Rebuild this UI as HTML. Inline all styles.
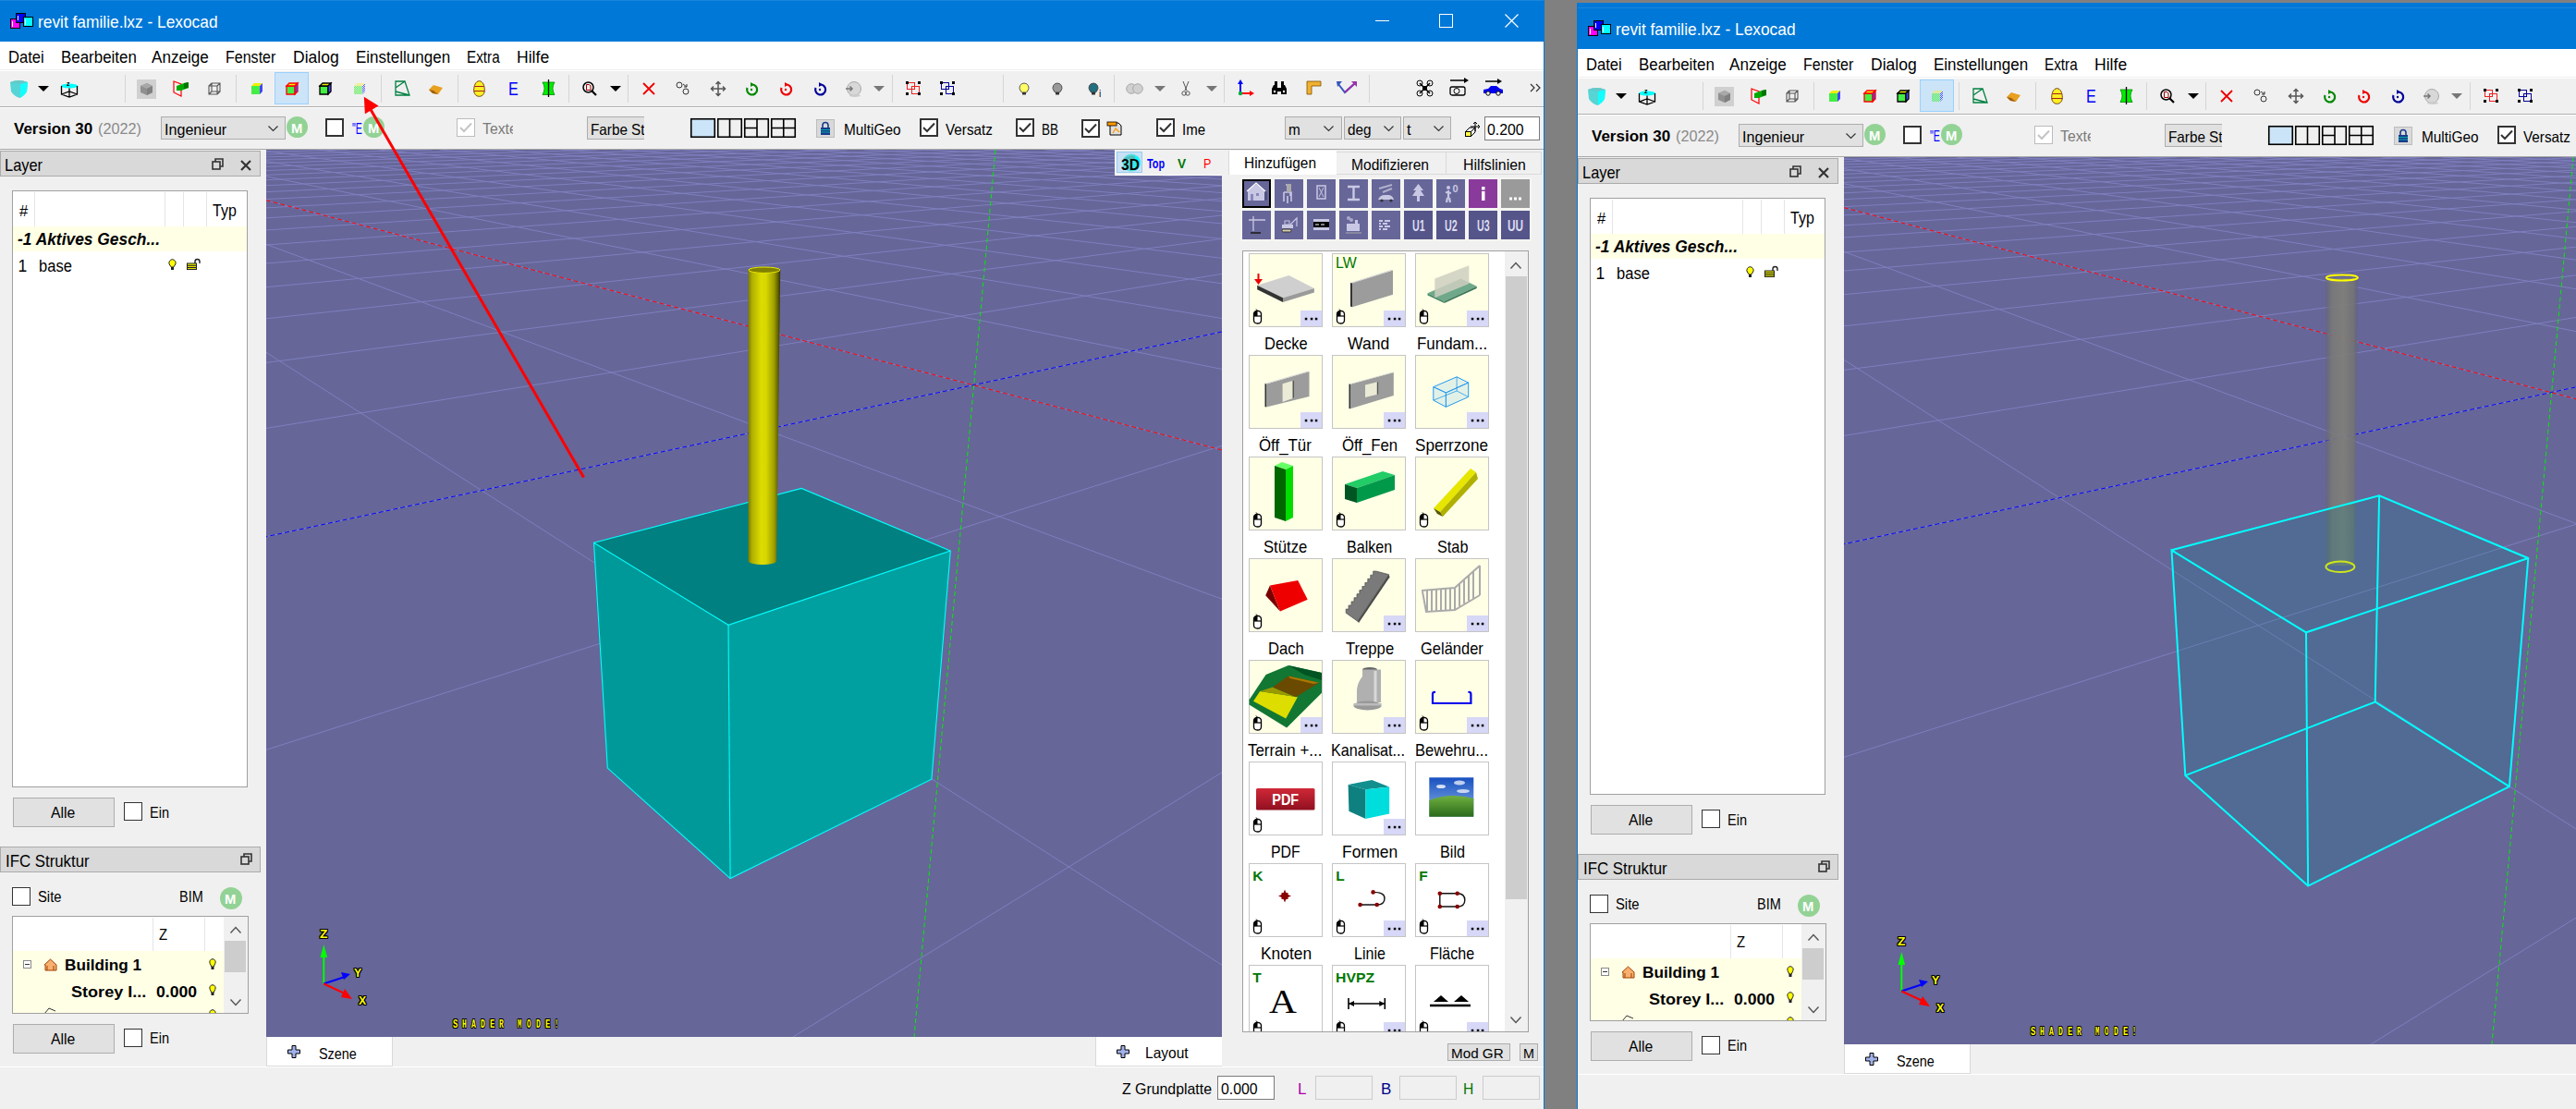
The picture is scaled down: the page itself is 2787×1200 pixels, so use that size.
<!DOCTYPE html><html><head><meta charset="utf-8"><style>
html,body{margin:0;padding:0}
body{width:2787px;height:1200px;position:relative;overflow:hidden;background:#808080;font-family:"Liberation Sans",sans-serif}
.t{position:absolute;white-space:pre;transform-origin:0 0}
.r{position:absolute}
.s{position:absolute;overflow:visible}
.win{position:absolute;overflow:hidden}
</style></head><body><div class="win" style="left:0;top:0;width:1671px;height:1200px"><div class="r" style="left:-1px;top:-5px;width:1672px;height:1210px;background:#0078d7;"></div><div class="r" style="left:0px;top:0px;width:1670px;height:1px;background:#1a86dc;"></div><div class="r" style="left:0px;top:45px;width:1670px;height:1160px;background:#f0f0f0;"></div><div class="r" style="left:0px;top:45px;width:1670px;height:30px;background:#ffffff;"></div><div class="r" style="left:0px;top:76px;width:1670px;height:1px;background:#ffffff;"></div><div class="r" style="left:0px;top:115px;width:1670px;height:1px;background:#b0b0b0;"></div><div class="r" style="left:0px;top:116px;width:1670px;height:1px;background:#ffffff;"></div><div class="r" style="left:0px;top:161px;width:1670px;height:1px;background:#a8a8a8;"></div><svg class="s" style="left:10.5px;top:13.5px;" width="26" height="18" viewBox="0 0 26 18"><rect x="0.5" y="6.5" width="10" height="10" fill="#ff00ff" stroke="#000" stroke-width="1"/><rect x="6.5" y="0.5" width="10" height="10" fill="#0000ff" stroke="#000" stroke-width="1"/><rect x="14.5" y="4.5" width="10" height="10" fill="#00ffff" stroke="#000" stroke-width="1"/><rect x="2" y="9" width="1" height="6" fill="#fff"/><rect x="8" y="3" width="1" height="5" fill="#fff"/><rect x="16" y="7" width="1" height="6" fill="#fff"/></svg><div class="t" style="left:40.70px;top:12.61px;font-size:19px;line-height:21.22px;color:#ffffff;font-weight:400;transform:scaleX(0.9122);">revit familie.lxz - Lexocad</div><div class="r" style="left:1488px;top:22px;width:15px;height:1px;background:#ffffff;"></div><div class="r" style="left:1557px;top:15px;width:15px;height:15px;border:1px solid #ffffff;box-sizing:border-box;"></div><svg class="s" style="left:1628px;top:15px;" width="15" height="15" viewBox="0 0 15 15"><path d="M0.5,0.5 L14.5,14.5 M14.5,0.5 L0.5,14.5" stroke="#fff" stroke-width="1.2"/></svg><div class="t" style="left:9.30px;top:51.88px;font-size:18.7px;line-height:20.89px;color:#000;font-weight:400;transform:scaleX(0.8864);">Datei</div><div class="t" style="left:65.80px;top:51.88px;font-size:18.7px;line-height:20.89px;color:#000;font-weight:400;transform:scaleX(0.9056);">Bearbeiten</div><div class="t" style="left:164.20px;top:51.88px;font-size:18.7px;line-height:20.89px;color:#000;font-weight:400;transform:scaleX(0.9162);">Anzeige</div><div class="t" style="left:244.00px;top:51.88px;font-size:18.7px;line-height:20.89px;color:#000;font-weight:400;transform:scaleX(0.8578);">Fenster</div><div class="t" style="left:317.40px;top:51.88px;font-size:18.7px;line-height:20.89px;color:#000;font-weight:400;transform:scaleX(0.9377);">Dialog</div><div class="t" style="left:385.10px;top:51.88px;font-size:18.7px;line-height:20.89px;color:#000;font-weight:400;transform:scaleX(0.9098);">Einstellungen</div><div class="t" style="left:505.00px;top:51.88px;font-size:18.7px;line-height:20.89px;color:#000;font-weight:400;transform:scaleX(0.8182);">Extra</div><div class="t" style="left:559.00px;top:51.88px;font-size:18.7px;line-height:20.89px;color:#000;font-weight:400;transform:scaleX(0.9405);">Hilfe</div><div class="r" style="left:297px;top:78px;width:37px;height:35px;background:#cce4f7;border:1px solid #99d1ff;box-sizing:border-box;"></div><svg class="s" style="left:9.5px;top:85.0px;" width="21" height="21" viewBox="0 0 21 21"><path d="M1,4 Q10,0 20,4 L19,14 Q16,19 11,21 Q5,19 2,14 Z" fill="#55d5d5"/><path d="M12,4 L20,4 L19,14 Q16,19 12,21 Z" fill="#11ffff"/><path d="M1,4 Q10,0 20,4 L12,6 Z" fill="#66c8c8"/></svg><svg class="s" style="left:41.0px;top:92.5px;" width="12" height="7" viewBox="0 0 12 7"><polygon points="0,0 12,0 6,6" fill="#000"/></svg><svg class="s" style="left:64.5px;top:86.5px;" width="20" height="19" viewBox="0 0 20 19"><ellipse cx="10" cy="6" rx="9" ry="2.5" fill="#00ffff"/><path d="M1.5,6 L1.5,15 L10,18 L18.5,15 L18.5,6 M10,8.5 L10,18 M1.5,15 L10,12 L18.5,15" stroke="#000" stroke-width="1.3" fill="none"/><text x="7" y="6" font-size="7" font-weight="bold" font-family="Liberation Sans">z</text></svg><div class="r" style="left:135px;top:81px;width:1px;height:30px;background:#d5d5d5;"></div><div class="r" style="left:148px;top:86px;width:21px;height:21px;background:#d0d0d0;"></div><svg class="s" style="left:151.0px;top:89.0px;" width="15" height="15" viewBox="0 0 15 15"><polygon points="1,4 8,1 14,4 14,11 8,14 1,11" fill="#909090"/><polygon points="1,4 8,1 14,4 8,7" fill="#a8a8a8"/><polygon points="8,7 14,4 14,11 8,14" fill="#808080"/></svg><svg class="s" style="left:186.5px;top:86.5px;" width="18" height="18" viewBox="0 0 18 18"><polygon points="1,1 9,4 9,17 1,13" fill="none" stroke="#ff0000" stroke-width="1.2"/><polygon points="4,6 12,3 17,2 17,8 9,11 4,11" fill="#00aa00"/><polygon points="12,3 17,2 17,8 12,9" fill="#007700"/></svg><svg class="s" style="left:225.0px;top:88.5px;" width="14" height="14" viewBox="0 0 14 14"><path d="M1,4 L10,4 L10,13 L1,13 Z M4,1 L13,1 L13,10 L4,10 Z M1,4 L4,1 M10,4 L13,1 M10,13 L13,10 M1,13 L4,10" stroke="#555" stroke-width="1.1" fill="none"/></svg><div class="r" style="left:255px;top:81px;width:1px;height:30px;background:#d5d5d5;"></div><svg class="s" style="left:271.0px;top:88.5px;" width="14" height="14" viewBox="0 0 14 14"><polygon points="1,4 10,4 10,13 1,13" fill="#44ee44" /><polygon points="1,4 4,1 13,1 10,4" fill="#eeee00" /><polygon points="10,4 13,1 13,10 10,13" fill="#4444ff" /></svg><svg class="s" style="left:309.0px;top:88.5px;" width="14" height="14" viewBox="0 0 14 14"><polygon points="1,4 10,4 10,13 1,13" fill="#44ee44" stroke="#ff0000" stroke-width="1.3"/><polygon points="1,4 4,1 13,1 10,4" fill="#eeee00" stroke="#ff0000" stroke-width="1.3"/><polygon points="10,4 13,1 13,10 10,13" fill="#4444ff" stroke="#ff0000" stroke-width="1.3"/></svg><svg class="s" style="left:345.0px;top:88.5px;" width="14" height="14" viewBox="0 0 14 14"><polygon points="1,4 10,4 10,13 1,13" fill="#44ee44" stroke="#000000" stroke-width="1.3"/><polygon points="1,4 4,1 13,1 10,4" fill="#eeee00" stroke="#000000" stroke-width="1.3"/><polygon points="10,4 13,1 13,10 10,13" fill="#4444ff" stroke="#000000" stroke-width="1.3"/></svg><svg class="s" style="left:382.0px;top:88.5px;" width="14" height="14" viewBox="0 0 14 14"><defs><pattern id="hp" width="2" height="2" patternUnits="userSpaceOnUse"><rect width="1" height="1" fill="#44ee44"/><rect x="1" y="1" width="1" height="1" fill="#44ee44"/></pattern><pattern id="hb" width="2" height="2" patternUnits="userSpaceOnUse"><rect width="1" height="1" fill="#5555ff"/><rect x="1" y="1" width="1" height="1" fill="#5555ff"/></pattern><pattern id="hy" width="2" height="2" patternUnits="userSpaceOnUse"><rect width="1" height="1" fill="#eeee44"/><rect x="1" y="1" width="1" height="1" fill="#eeee44"/></pattern></defs><polygon points="1,4 10,4 10,13 1,13" fill="url(#hp)"/><polygon points="1,4 4,1 13,1 10,4" fill="url(#hy)"/><polygon points="10,4 13,1 13,10 10,13" fill="url(#hb)"/></svg><div class="r" style="left:412px;top:81px;width:1px;height:30px;background:#d5d5d5;"></div><svg class="s" style="left:426.5px;top:87.0px;" width="17" height="17" viewBox="0 0 17 17"><path d="M1,1 L1,16 L16,16 L11,1 Z M1,8 L11,1 M1,12 L16,16" stroke="#008040" stroke-width="1.3" fill="none"/></svg><svg class="s" style="left:463.5px;top:90.5px;" width="16" height="12" viewBox="0 0 16 12"><polygon points="0,6 5,1 15,4 10,11 4,10" fill="#e8a020"/><polygon points="0,6 4,10 10,11 5,7" fill="#a06010"/></svg><div class="r" style="left:495px;top:81px;width:1px;height:30px;background:#d5d5d5;"></div><svg class="s" style="left:511.5px;top:86.5px;" width="13" height="18" viewBox="0 0 13 18"><path d="M6.5,0.7 C10.5,0.7 12.3,6 12.3,10.5 C12.3,14.5 10,17.3 6.5,17.3 C3,17.3 0.7,14.5 0.7,10.5 C0.7,6 2.5,0.7 6.5,0.7 Z" fill="#ffee22" stroke="#704010" stroke-width="1"/><path d="M1.5,6.5 H11.5 M0.8,11.5 H12.2" stroke="#a02020" stroke-width="1.2"/></svg><div class="t" style="left:550.00px;top:85.20px;font-size:20px;line-height:22.34px;color:#0000ff;font-weight:400;transform:scaleX(0.8077);">E</div><svg class="s" style="left:585.5px;top:86.0px;" width="15" height="19" viewBox="0 0 15 19"><path d="M1,3 H14 Q10,9.5 14,16.5 H1 Q5,9.5 1,3 Z" fill="#00ee00" stroke="#008800" stroke-width="0.8"/><path d="M7.5,0 V19" stroke="#000" stroke-width="1.3"/></svg><div class="r" style="left:615px;top:81px;width:1px;height:30px;background:#d5d5d5;"></div><svg class="s" style="left:630.0px;top:87.5px;" width="16" height="16" viewBox="0 0 16 16"><circle cx="6.5" cy="6.5" r="5.5" fill="none" stroke="#000" stroke-width="1.5"/><path d="M10.5,10.5 L15,15" stroke="#000" stroke-width="2.2"/><path d="M4.5,3.5 H7.5 L9,5 V9.5 H4.5 Z" fill="none" stroke="#a00000" stroke-width="1"/></svg><svg class="s" style="left:659.5px;top:92.5px;" width="12" height="7" viewBox="0 0 12 7"><polygon points="0,0 12,0 6,6" fill="#000"/></svg><div class="r" style="left:679px;top:81px;width:1px;height:30px;background:#d5d5d5;"></div><svg class="s" style="left:694.5px;top:88.5px;" width="14" height="14" viewBox="0 0 14 14"><path d="M1,1 L13,13 M13,1 L1,13" stroke="#ee0000" stroke-width="1.8"/></svg><svg class="s" style="left:730.5px;top:88.0px;" width="16" height="15" viewBox="0 0 16 15"><circle cx="4" cy="4" r="3" fill="none" stroke="#333" stroke-width="1"/><circle cx="11" cy="11" r="3" fill="none" stroke="#333" stroke-width="1"/><path d="M8,3 L12,6 M12,3 V6 H9" stroke="#333" stroke-width="1" fill="none"/></svg><svg class="s" style="left:768.5px;top:87.5px;" width="16" height="16" viewBox="0 0 16 16"><path d="M8,0.5 V15.5 M0.5,8 H15.5 M5.5,3 L8,0.5 L10.5,3 M5.5,13 L8,15.5 L10.5,13 M3,5.5 L0.5,8 L3,10.5 M13,5.5 L15.5,8 L13,10.5" stroke="#555" stroke-width="1.5" fill="none"/></svg><svg class="s" style="left:806.0px;top:88.5px;" width="14" height="14" viewBox="0 0 14 14"><path d="M7.5,2.5 A5.5,5.5 0 1 1 2.5,6" stroke="#008800" stroke-width="2.2" fill="none"/><path d="M6,0 L10,2.5 L6,5 Z" fill="#008800"/><circle cx="7" cy="8" r="1.2" fill="#008800"/></svg><svg class="s" style="left:843.0px;top:88.5px;" width="14" height="14" viewBox="0 0 14 14"><path d="M7.5,2.5 A5.5,5.5 0 1 1 2.5,6" stroke="#ee0000" stroke-width="2.2" fill="none"/><path d="M6,0 L10,2.5 L6,5 Z" fill="#ee0000"/><circle cx="7" cy="8" r="1.2" fill="#ee0000"/></svg><svg class="s" style="left:880.0px;top:88.5px;" width="14" height="14" viewBox="0 0 14 14"><path d="M7.5,2.5 A5.5,5.5 0 1 1 2.5,6" stroke="#000099" stroke-width="2.2" fill="none"/><path d="M6,0 L10,2.5 L6,5 Z" fill="#000099"/><circle cx="7" cy="8" r="1.2" fill="#000099"/></svg><svg class="s" style="left:914.0px;top:87.5px;" width="18" height="17" viewBox="0 0 18 17"><circle cx="10" cy="8" r="7.5" fill="#d8d8d8" stroke="#aaa" stroke-width="1"/><ellipse cx="11" cy="15.5" rx="6" ry="1.5" fill="#ccc"/><path d="M1,8 H8 M5.5,5.5 L8,8 L5.5,10.5" stroke="#777" stroke-width="1.5" fill="none"/></svg><svg class="s" style="left:945.0px;top:92.5px;" width="12" height="7" viewBox="0 0 12 7"><polygon points="0,0 12,0 6,6" fill="#777"/></svg><div class="r" style="left:965px;top:81px;width:1px;height:30px;background:#d5d5d5;"></div><svg class="s" style="left:979.5px;top:87.8px;" width="17" height="15" viewBox="0 0 17 15"><rect x="1.5" y="1.5" width="8" height="7" fill="none" stroke="#ee2222" stroke-width="1"/><rect x="6.5" y="5.5" width="8" height="8" fill="none" stroke="#ee2222" stroke-width="1"/><rect x="0" y="0" width="3" height="3"/><rect x="13" y="0" width="3" height="3"/><rect x="0" y="12" width="3" height="3"/><rect x="13" y="12" width="3" height="3"/></svg><svg class="s" style="left:1016.5px;top:87.8px;" width="17" height="15" viewBox="0 0 17 15"><rect x="1.5" y="1.5" width="8" height="7" fill="none" stroke="#000099" stroke-width="1"/><rect x="6.5" y="5.5" width="8" height="8" fill="none" stroke="#000099" stroke-width="1"/><rect x="0" y="0" width="3" height="3"/><rect x="13" y="0" width="3" height="3"/><rect x="0" y="12" width="3" height="3"/><rect x="13" y="12" width="3" height="3"/></svg><div class="r" style="left:1085px;top:81px;width:1px;height:30px;background:#d5d5d5;"></div><svg class="s" style="left:1102.0px;top:88.5px;" width="12" height="14" viewBox="0 0 12 14"><path d="M6,1 A5,5 0 0 1 10,9 L8.5,11 H3.5 L2,9 A5,5 0 0 1 6,1 Z" fill="#ffff66" stroke="#333" stroke-width="0.8"/><rect x="4" y="11" width="4" height="2.5" fill="#333"/></svg><svg class="s" style="left:1138.0px;top:88.5px;" width="12" height="14" viewBox="0 0 12 14"><path d="M6,1 A5,5 0 0 1 10,9 L8.5,11 H3.5 L2,9 A5,5 0 0 1 6,1 Z" fill="#999999" stroke="#333" stroke-width="0.8"/><rect x="4" y="11" width="4" height="2.5" fill="#333"/></svg><svg class="s" style="left:1177.0px;top:88.5px;" width="12" height="14" viewBox="0 0 12 14"><path d="M6,1 A5,5 0 0 1 10,9 L8.5,11 H3.5 L2,9 A5,5 0 0 1 6,1 Z" fill="#226f7f" stroke="#333" stroke-width="0.8"/><rect x="4" y="11" width="4" height="2.5" fill="#333"/></svg><div class="t" style="left:1189.00px;top:95.75px;font-size:10px;line-height:11.17px;color:#000;font-weight:400;">i</div><div class="r" style="left:1205px;top:81px;width:1px;height:30px;background:#d5d5d5;"></div><svg class="s" style="left:1218.0px;top:89.5px;" width="20" height="12" viewBox="0 0 20 12"><circle cx="6" cy="6" r="5.3" fill="#d0d0d0" stroke="#aaa"/><circle cx="13" cy="6" r="5.3" fill="#d0d0d0" stroke="#aaa"/></svg><svg class="s" style="left:1249.0px;top:92.5px;" width="12" height="7" viewBox="0 0 12 7"><polygon points="0,0 12,0 6,6" fill="#777"/></svg><svg class="s" style="left:1277.5px;top:87.5px;" width="10" height="16" viewBox="0 0 10 16"><path d="M2,0 L6,10 M8,0 L4,10" stroke="#555" stroke-width="1"/><circle cx="3" cy="13" r="2.2" fill="none" stroke="#555"/><circle cx="7" cy="13" r="2.2" fill="none" stroke="#555"/></svg><svg class="s" style="left:1304.5px;top:92.5px;" width="12" height="7" viewBox="0 0 12 7"><polygon points="0,0 12,0 6,6" fill="#777"/></svg><div class="r" style="left:1324px;top:81px;width:1px;height:30px;background:#d5d5d5;"></div><svg class="s" style="left:1338.5px;top:86.0px;" width="18" height="18" viewBox="0 0 18 18"><path d="M3,15 V3" stroke="#0000ff" stroke-width="2"/><polygon points="0,5 3,0 6,5" fill="#0000ff"/><path d="M3,15 H14" stroke="#ff0000" stroke-width="2"/><polygon points="13,12 18,15 13,18" fill="#ff0000"/><circle cx="3" cy="15" r="2.2" fill="#00aa44"/></svg><svg class="s" style="left:1376.0px;top:87.5px;" width="16" height="15" viewBox="0 0 16 15"><path d="M2,4 H6 V14 H0 V8 Z M10,4 H14 L16,8 V14 H10 Z M6,7 H10 V11 H6 Z M3,0 H6 V4 H3 Z M10,0 H13 V4 H10 Z" fill="#000"/><circle cx="3" cy="11" r="1.2" fill="#fff"/><circle cx="13" cy="11" r="1.2" fill="#fff"/></svg><svg class="s" style="left:1412.5px;top:87.0px;" width="17" height="16" viewBox="0 0 17 16"><path d="M1,1 H16 V6 H6 V15 H1 Z" fill="#f0b030" stroke="#805000" stroke-width="0.8"/></svg><svg class="s" style="left:1446.0px;top:88.0px;" width="23" height="14" viewBox="0 0 23 14"><path d="M2,3 L9,12 L20,2" stroke="#3355bb" stroke-width="2" fill="none"/><path d="M9,12 L20,2" stroke="#9933aa" stroke-width="2"/><polygon points="0,0 6,0 1,6" fill="#3355bb"/><polygon points="16,0 22,0 22,6" fill="#9933aa"/></svg><div class="r" style="left:1481px;top:81px;width:1px;height:30px;background:#d5d5d5;"></div><svg class="s" style="left:1531.5px;top:85.5px;" width="19" height="19" viewBox="0 0 19 19"><path d="M4,4 L15,15 M15,4 L4,15" stroke="#000" stroke-width="1.5"/><circle cx="4" cy="4" r="3" fill="none" stroke="#000"/><circle cx="15" cy="4" r="3" fill="none" stroke="#000"/><circle cx="4" cy="15" r="3" fill="none" stroke="#000"/><circle cx="15" cy="15" r="3" fill="none" stroke="#000"/><rect x="7" y="7" width="5" height="5"/></svg><svg class="s" style="left:1567.5px;top:84.0px;" width="22" height="20" viewBox="0 0 22 20"><path d="M1,3 H17" stroke="#000" stroke-width="1.5"/><polygon points="16,0 21,3 16,6" fill="#000"/><rect x="1" y="10" width="16" height="9" rx="2" fill="none" stroke="#000" stroke-width="1.3"/><circle cx="8" cy="14.5" r="3" fill="none" stroke="#000"/></svg><svg class="s" style="left:1603.5px;top:84.5px;" width="23" height="19" viewBox="0 0 23 19"><path d="M3,3 H17" stroke="#000" stroke-width="1.5"/><polygon points="16,0 21,3 16,6" fill="#000"/><path d="M1,16 V12 L6,11 L9,8 H15 L19,11 L22,12 V16 Z" fill="#0000ee"/><circle cx="6" cy="16" r="2.2" fill="#fff" stroke="#000"/><circle cx="17" cy="16" r="2.2" fill="#fff" stroke="#000"/></svg><svg class="s" style="left:1655.0px;top:90.0px;" width="13" height="10" viewBox="0 0 13 10"><path d="M1,1 L5,5 L1,9 M7,1 L11,5 L7,9" stroke="#333" stroke-width="1.2" fill="none"/></svg><div class="t" style="left:14.90px;top:129.93px;font-size:17.2px;line-height:19.21px;color:#000;font-weight:700;transform:scaleX(0.9895);">Version 30</div><div class="t" style="left:106.20px;top:129.93px;font-size:17.2px;line-height:19.21px;color:#8a8a8a;font-weight:400;transform:scaleX(0.9440);">(2022)</div><div class="r" style="left:174px;top:126px;width:135px;height:25px;background:#e1e1e1;border:1px solid #adadad;box-sizing:border-box;"></div><div class="t" style="left:177.90px;top:130.57px;font-size:16.5px;line-height:18.43px;color:#000;font-weight:400;transform:scaleX(0.9768);">Ingenieur</div><svg class="s" style="left:290px;top:136px;" width="11" height="6" viewBox="0 0 11 6"><path d="M0.5,0.5 L5.5,5.5 L10.5,0.5" stroke="#333" stroke-width="1.2" fill="none"/></svg><svg class="s" style="left:309.7px;top:126.3px;" width="23" height="23" viewBox="0 0 23 23"><circle cx="11.5" cy="11.5" r="11.5" fill="#93d295"/></svg><div class="t" style="left:315.00px;top:130.37px;font-size:15.5px;line-height:17.31px;color:#ffffff;font-weight:700;transform:scaleX(0.9538);">M</div><div class="r" style="left:352px;top:128px;width:20px;height:20px;background:#ffffff;border:2px solid #333333;box-sizing:border-box;"></div><div class="t" style="left:380.70px;top:130.37px;font-size:16.5px;line-height:18.43px;color:#0000ff;font-weight:400;transform:scaleX(0.6471);">"E</div><svg class="s" style="left:392.7px;top:126.3px;" width="23" height="23" viewBox="0 0 23 23"><circle cx="11.5" cy="11.5" r="11.5" fill="#93d295"/></svg><div class="t" style="left:398.00px;top:130.37px;font-size:15.5px;line-height:17.31px;color:#ffffff;font-weight:700;transform:scaleX(0.9538);">M</div><div class="r" style="left:494px;top:128px;width:20px;height:20px;background:#ffffff;border:1px solid #bcbcbc;box-sizing:border-box;"></div><svg class="s" style="left:494px;top:128px;" width="20" height="20" viewBox="0 0 20 20"><path d="M4,10 L8,14 L16,5.5" stroke="#c4c4c4" stroke-width="2" fill="none"/></svg><div style="position:absolute;left:520px;top:120px;width:35px;height:35px;overflow:hidden"><div class="t" style="left:2.40px;top:10.12px;font-size:17px;line-height:18.99px;color:#7a7a7a;font-weight:400;transform:scaleX(0.9268);">Texte</div></div><div style="position:absolute;left:635px;top:126px;width:62px;height:25px;overflow:hidden"><div class="r" style="left:0px;top:0px;width:70px;height:25px;background:#e1e1e1;border:1px solid #adadad;box-sizing:border-box;"></div><div class="t" style="left:4.30px;top:4.57px;font-size:16.5px;line-height:18.43px;color:#000;font-weight:400;transform:scaleX(0.9250);">Farbe Stell</div></div><svg class="s" style="left:746px;top:127px;" width="117" height="23" viewBox="0 0 117 23"><rect x="1.75" y="1.75" width="25.5" height="19.5" fill="#cce4f7" stroke="#000" stroke-width="1.6"/><rect x="30.75" y="1.75" width="25.5" height="19.5" fill="none" stroke="#000" stroke-width="1.6"/><path d="M43.5,1.75 V21.25" stroke="#000" stroke-width="1.6"/><rect x="59.75" y="1.75" width="25.5" height="19.5" fill="none" stroke="#000" stroke-width="1.6"/><path d="M73,1.75 V21.25 M59.75,11.5 H73" stroke="#000" stroke-width="1.6"/><rect x="88.75" y="1.75" width="25.5" height="19.5" fill="none" stroke="#000" stroke-width="1.6"/><path d="M101.75,1.75 V21.25 M88.75,11.5 H114.25" stroke="#000" stroke-width="1.6"/></svg><div class="r" style="left:883px;top:129px;width:20px;height:20px;background:#d9d9d9;border:1px solid #bcbcbc;box-sizing:border-box;"></div><svg class="s" style="left:887px;top:131px;" width="12" height="16" viewBox="0 0 12 16"><path d="M3,7 V4.5 A3,3 0 0 1 9,4.5 V7" stroke="#1a3a8a" stroke-width="1.6" fill="none"/><rect x="1" y="7" width="10" height="8" fill="#1a3a8a"/><path d="M1,9.5 H11 M1,12 H11" stroke="#00aaaa" stroke-width="1.2"/></svg><div class="t" style="left:913.00px;top:130.87px;font-size:16.5px;line-height:18.43px;color:#000;font-weight:400;transform:scaleX(0.9318);">MultiGeo</div><div class="r" style="left:995px;top:128px;width:20px;height:20px;background:#ffffff;border:2px solid #333333;box-sizing:border-box;"></div><svg class="s" style="left:995px;top:128px;" width="20" height="20" viewBox="0 0 20 20"><path d="M4,10 L8,14 L16,5.5" stroke="#333333" stroke-width="2" fill="none"/></svg><div class="t" style="left:1023.00px;top:130.87px;font-size:16.5px;line-height:18.43px;color:#000;font-weight:400;transform:scaleX(0.9255);">Versatz</div><div class="r" style="left:1099px;top:128px;width:20px;height:20px;background:#ffffff;border:2px solid #333333;box-sizing:border-box;"></div><svg class="s" style="left:1099px;top:128px;" width="20" height="20" viewBox="0 0 20 20"><path d="M4,10 L8,14 L16,5.5" stroke="#333333" stroke-width="2" fill="none"/></svg><div class="t" style="left:1127.00px;top:130.87px;font-size:16.5px;line-height:18.43px;color:#000;font-weight:400;transform:scaleX(0.8182);">BB</div><div class="r" style="left:1170px;top:129px;width:20px;height:20px;background:#ffffff;border:2px solid #333333;box-sizing:border-box;"></div><svg class="s" style="left:1170px;top:129px;" width="20" height="20" viewBox="0 0 20 20"><path d="M4,10 L8,14 L16,5.5" stroke="#333333" stroke-width="2" fill="none"/></svg><svg class="s" style="left:1198px;top:130px;" width="16" height="17" viewBox="0 0 16 17"><path d="M1,3 H12 L15,6 V16 H3 V6" fill="#e0e0e0" stroke="#000" stroke-width="1"/><rect x="0" y="2" width="10" height="4" fill="#ff9900" stroke="#000" stroke-width="0.8"/><path d="M6,14 L9,9 L13,13" stroke="#ff9900" stroke-width="1.3" fill="none"/></svg><div class="r" style="left:1251px;top:128px;width:20px;height:20px;background:#ffffff;border:2px solid #333333;box-sizing:border-box;"></div><svg class="s" style="left:1251px;top:128px;" width="20" height="20" viewBox="0 0 20 20"><path d="M4,10 L8,14 L16,5.5" stroke="#333333" stroke-width="2" fill="none"/></svg><div class="t" style="left:1279.20px;top:130.87px;font-size:16.5px;line-height:18.43px;color:#000;font-weight:400;transform:scaleX(0.9107);">Ime</div><div class="r" style="left:1390px;top:126px;width:62px;height:25px;background:#e1e1e1;border:1px solid #adadad;box-sizing:border-box;"></div><div class="t" style="left:1394.00px;top:130.57px;font-size:16.5px;line-height:18.43px;color:#000;font-weight:400;transform:scaleX(0.9286);">m</div><svg class="s" style="left:1432px;top:136px;" width="11" height="6" viewBox="0 0 11 6"><path d="M0.5,0.5 L5.5,5.5 L10.5,0.5" stroke="#333" stroke-width="1.2" fill="none"/></svg><div class="r" style="left:1454px;top:126px;width:62px;height:25px;background:#e1e1e1;border:1px solid #adadad;box-sizing:border-box;"></div><div class="t" style="left:1458.00px;top:130.57px;font-size:16.5px;line-height:18.43px;color:#000;font-weight:400;transform:scaleX(0.9286);">deg</div><svg class="s" style="left:1497px;top:136px;" width="11" height="6" viewBox="0 0 11 6"><path d="M0.5,0.5 L5.5,5.5 L10.5,0.5" stroke="#333" stroke-width="1.2" fill="none"/></svg><div class="r" style="left:1518px;top:126px;width:52px;height:25px;background:#e1e1e1;border:1px solid #adadad;box-sizing:border-box;"></div><div class="t" style="left:1522.00px;top:130.57px;font-size:16.5px;line-height:18.43px;color:#000;font-weight:400;">t</div><svg class="s" style="left:1551px;top:136px;" width="11" height="6" viewBox="0 0 11 6"><path d="M0.5,0.5 L5.5,5.5 L10.5,0.5" stroke="#333" stroke-width="1.2" fill="none"/></svg><svg class="s" style="left:1585px;top:131px;" width="17" height="18" viewBox="0 0 17 18"><rect x="0.5" y="11.5" width="6" height="5" fill="#ffff44" stroke="#000"/><path d="M6.5,11.5 L11,7 M0.5,11.5 L5,7 H11 V12 L6.5,16.5" stroke="#000" fill="none"/><path d="M11,1 V11 M6,6 H16 M9,3 L11,1 L13,3 M14,4 L16,6 L14,8" stroke="#000" stroke-width="1" fill="none"/></svg><div class="r" style="left:1606px;top:126px;width:60px;height:26px;background:#ffffff;border:1px solid #7a7a7a;box-sizing:border-box;"></div><div class="t" style="left:1609.00px;top:130.92px;font-size:17px;line-height:18.99px;color:#000;font-weight:400;transform:scaleX(0.9302);">0.200</div><div class="r" style="left:0px;top:163px;width:282px;height:28px;background:#d9d9d9;border:1px solid #ababab;box-sizing:border-box;"></div><div class="t" style="left:5.40px;top:169.33px;font-size:18.2px;line-height:20.33px;color:#000;font-weight:400;transform:scaleX(0.9022);">Layer</div><svg class="s" style="left:228.6px;top:171px;" width="13" height="13" viewBox="0 0 13 13"><rect x="1" y="4" width="8" height="8" fill="none" stroke="#333" stroke-width="1.6"/><path d="M4,4 V1 H12 V9 H9" fill="none" stroke="#333" stroke-width="1.6"/></svg><svg class="s" style="left:259.5px;top:172.5px;" width="12" height="12" viewBox="0 0 12 12"><path d="M1,1 L11,11 M11,1 L1,11" stroke="#333" stroke-width="2.2"/></svg><div class="r" style="left:13px;top:206px;width:255px;height:646px;background:#ffffff;border:1px solid #a0a0a0;box-sizing:border-box;"></div><div class="r" style="left:37px;top:208px;width:1px;height:37px;background:#e5e5e5;"></div><div class="r" style="left:178px;top:208px;width:1px;height:37px;background:#e5e5e5;"></div><div class="r" style="left:198px;top:208px;width:1px;height:37px;background:#e5e5e5;"></div><div class="r" style="left:223px;top:208px;width:1px;height:37px;background:#e5e5e5;"></div><div class="t" style="left:21.00px;top:218.87px;font-size:16.5px;line-height:18.43px;color:#000;font-weight:400;">#</div><div class="t" style="left:230.00px;top:218.96px;font-size:17.5px;line-height:19.55px;color:#000;font-weight:400;transform:scaleX(0.9143);">Typ</div><div class="r" style="left:14px;top:245px;width:253px;height:27px;background:#ffffe6;"></div><div class="t" style="left:18.90px;top:250.46px;font-size:17.5px;line-height:19.55px;color:#000;font-weight:700;font-style:italic;transform:scaleX(0.9935);">-1 Aktives Gesch...</div><div class="t" style="left:19.60px;top:278.86px;font-size:17.5px;line-height:19.55px;color:#000;font-weight:400;">1</div><div class="t" style="left:41.90px;top:278.86px;font-size:17.5px;line-height:19.55px;color:#000;font-weight:400;transform:scaleX(0.9447);">base</div><svg class="s" style="left:181.5px;top:280px;" width="9" height="12" viewBox="0 0 9 12"><path d="M4.5,0.7 A3.8,3.8 0 0 1 7.8,6.0 L5.7,9 H3.3 L1.2,6.0 A3.8,3.8 0 0 1 4.5,0.7 Z" fill="#ffff00" stroke="#222" stroke-width="1"/><rect x="3.0" y="9" width="3" height="3" fill="#222"/></svg><svg class="s" style="left:202px;top:280px;" width="15" height="12" viewBox="0 0 15 12"><path d="M9,5 V3 A2.5,2.5 0 0 1 14,3 V5" stroke="#222" stroke-width="1.4" fill="none"/><rect x="0.5" y="5" width="10" height="6.5" fill="#e6e600" stroke="#222" stroke-width="1"/><path d="M0.5,7.3 H10.5 M0.5,9.5 H10.5" stroke="#222" stroke-width="1"/></svg><div class="r" style="left:14px;top:863px;width:110px;height:32px;background:#e1e1e1;border:1px solid #adadad;box-sizing:border-box;"></div><div class="t" style="left:55.40px;top:871.49px;font-size:16.7px;line-height:18.65px;color:#000;font-weight:400;transform:scaleX(0.9429);">Alle</div><div class="r" style="left:134px;top:868px;width:20px;height:20px;background:#fff;border:1px solid #333;box-sizing:border-box;"></div><div class="t" style="left:162.30px;top:870.69px;font-size:16.7px;line-height:18.65px;color:#000;font-weight:400;transform:scaleX(0.8708);">Ein</div><div class="r" style="left:0px;top:916px;width:282px;height:28px;background:#d9d9d9;border:1px solid #ababab;box-sizing:border-box;"></div><div class="t" style="left:6.10px;top:922.33px;font-size:18.2px;line-height:20.33px;color:#000;font-weight:400;transform:scaleX(0.9245);">IFC Struktur</div><svg class="s" style="left:260px;top:923px;" width="13" height="13" viewBox="0 0 13 13"><rect x="1" y="4" width="8" height="8" fill="none" stroke="#333" stroke-width="1.6"/><path d="M4,4 V1 H12 V9 H9" fill="none" stroke="#333" stroke-width="1.6"/></svg><div class="r" style="left:13px;top:960px;width:20px;height:20px;background:#fff;border:1px solid #333;box-sizing:border-box;"></div><div class="t" style="left:41.20px;top:962.09px;font-size:16.7px;line-height:18.65px;color:#000;font-weight:400;transform:scaleX(0.8862);">Site</div><div class="t" style="left:194.00px;top:962.39px;font-size:16.7px;line-height:18.65px;color:#000;font-weight:400;transform:scaleX(0.8667);">BIM</div><svg class="s" style="left:237.5px;top:959.5px;" width="24" height="24" viewBox="0 0 24 24"><circle cx="12.0" cy="12.0" r="12.0" fill="#93d295"/></svg><div class="t" style="left:243.30px;top:964.07px;font-size:15.5px;line-height:17.31px;color:#ffffff;font-weight:700;transform:scaleX(0.9538);">M</div><div class="r" style="left:13px;top:991px;width:256px;height:106px;background:#ffffff;border:1px solid #a0a0a0;box-sizing:border-box;"></div><div class="r" style="left:14px;top:1029px;width:228px;height:67px;background:#ffffe6;"></div><div class="r" style="left:165px;top:993px;width:1px;height:36px;background:#e5e5e5;"></div><div class="r" style="left:221px;top:993px;width:1px;height:36px;background:#e5e5e5;"></div><div class="t" style="left:172.00px;top:1001.87px;font-size:16.5px;line-height:18.43px;color:#000;font-weight:400;transform:scaleX(0.9000);">Z</div><div class="r" style="left:242px;top:992px;width:26px;height:104px;background:#f0f0f0;"></div><div class="r" style="left:243px;top:1018px;width:23px;height:34px;background:#cdcdcd;"></div><svg class="s" style="left:249px;top:1081px;" width="12" height="7" viewBox="0 0 12 7"><path d="M0.5,0.5 L6,6.5 L11.5,0.5" stroke="#555" stroke-width="1.4" fill="none"/></svg><svg class="s" style="left:249px;top:1003px;" width="12" height="7" viewBox="0 0 12 7"><path d="M0.5,6.5 L6,0.5 L11.5,6.5" stroke="#555" stroke-width="1.4" fill="none"/></svg><div class="r" style="left:25px;top:1039px;width:9px;height:9px;background:#fff;border:1px solid #888;box-sizing:border-box;"></div><div class="r" style="left:27px;top:1043px;width:5px;height:1px;background:#333;"></div><svg class="s" style="left:47px;top:1037px;" width="15" height="14" viewBox="0 0 15 14"><path d="M1,7 L7.5,1 L14,7 V13 H2 V7 Z" fill="#f8b070" stroke="#a04000" stroke-width="1"/><path d="M4,8 V13 M11,8 V13" stroke="#a04000"/></svg><div class="t" style="left:70.00px;top:1035.23px;font-size:17.2px;line-height:19.21px;color:#000;font-weight:700;">Building 1</div><svg class="s" style="left:226px;top:1037px;" width="8" height="12" viewBox="0 0 8 12"><path d="M4.0,0.7 A3.3,3.3 0 0 1 6.8,5.5 L5.2,9 H2.8 L1.2,5.5 A3.3,3.3 0 0 1 4.0,0.7 Z" fill="#ffff00" stroke="#222" stroke-width="1"/><rect x="2.5" y="9" width="3" height="3" fill="#222"/></svg><div class="t" style="left:77.00px;top:1063.53px;font-size:17.2px;line-height:19.21px;color:#000;font-weight:700;transform:scaleX(1.0519);">Storey I...</div><div class="t" style="left:169.00px;top:1063.53px;font-size:17.2px;line-height:19.21px;color:#000;font-weight:700;transform:scaleX(1.0233);">0.000</div><svg class="s" style="left:226px;top:1065px;" width="8" height="12" viewBox="0 0 8 12"><path d="M4.0,0.7 A3.3,3.3 0 0 1 6.8,5.5 L5.2,9 H2.8 L1.2,5.5 A3.3,3.3 0 0 1 4.0,0.7 Z" fill="#ffff00" stroke="#222" stroke-width="1"/><rect x="2.5" y="9" width="3" height="3" fill="#222"/></svg><svg class="s" style="left:226px;top:1092px;" width="8" height="12" viewBox="0 0 8 12"><path d="M4.0,0.7 A3.3,3.3 0 0 1 6.8,5.5 L5.2,9 H2.8 L1.2,5.5 A3.3,3.3 0 0 1 4.0,0.7 Z" fill="#ffff00" stroke="#222" stroke-width="1"/><rect x="2.5" y="9" width="3" height="3" fill="#222"/></svg><svg class="s" style="left:47px;top:1090px;" width="15" height="8" viewBox="0 0 15 8"><path d="M1,7 L6,1 L13,4" stroke="#333" fill="none"/></svg><div class="r" style="left:13px;top:1096px;width:256px;height:1px;background:#a0a0a0;"></div><div class="r" style="left:14px;top:1097px;width:254px;height:14px;background:#f0f0f0;"></div><div class="r" style="left:14px;top:1108px;width:110px;height:32px;background:#e1e1e1;border:1px solid #adadad;box-sizing:border-box;"></div><div class="t" style="left:55.40px;top:1116.19px;font-size:16.7px;line-height:18.65px;color:#000;font-weight:400;transform:scaleX(0.9429);">Alle</div><div class="r" style="left:134px;top:1113px;width:20px;height:20px;background:#fff;border:1px solid #333;box-sizing:border-box;"></div><div class="t" style="left:162.30px;top:1115.39px;font-size:16.7px;line-height:18.65px;color:#000;font-weight:400;transform:scaleX(0.8708);">Ein</div><div class="r" style="left:288px;top:162px;width:1034px;height:960px;background:#666699;"></div><svg class="s" style="left:288px;top:162px;overflow:hidden;" width="1034" height="960" viewBox="0 0 1034 960"><g stroke="#7f7fbf" stroke-width="1" fill="none"><line x1="1034.00" y1="673.83" x2="570.01" y2="960.00"/><line x1="1034.00" y1="320.16" x2="0.00" y2="649.33"/><line x1="1034.00" y1="196.98" x2="0.00" y2="418.69"/><line x1="1034.00" y1="134.35" x2="0.00" y2="301.42"/><line x1="1034.00" y1="96.44" x2="0.00" y2="230.42"/><line x1="1034.00" y1="71.02" x2="0.00" y2="182.82"/><line x1="1034.00" y1="52.79" x2="0.00" y2="148.69"/><line x1="1034.00" y1="39.08" x2="0.00" y2="123.02"/><line x1="1034.00" y1="28.39" x2="0.00" y2="103.01"/><line x1="1034.00" y1="19.83" x2="0.00" y2="86.97"/><line x1="1034.00" y1="12.81" x2="0.00" y2="73.84"/><line x1="1034.00" y1="6.96" x2="0.00" y2="62.88"/><line x1="1034.00" y1="2.00" x2="0.00" y2="53.59"/><line x1="985.30" y1="0.00" x2="0.00" y2="45.63"/><line x1="896.40" y1="0.00" x2="-0.00" y2="38.72"/><line x1="807.34" y1="0.00" x2="0.00" y2="32.67"/><line x1="718.11" y1="0.00" x2="0.00" y2="27.34"/><line x1="628.73" y1="0.00" x2="0.00" y2="22.59"/><line x1="539.18" y1="0.00" x2="-0.00" y2="18.34"/><line x1="449.47" y1="0.00" x2="0.00" y2="14.51"/><line x1="359.59" y1="0.00" x2="0.00" y2="11.05"/><line x1="269.56" y1="0.00" x2="0.00" y2="7.90"/><line x1="179.35" y1="0.00" x2="-0.00" y2="5.02"/><line x1="88.99" y1="0.00" x2="0.00" y2="2.39"/><line x1="1034.00" y1="2.59" x2="971.91" y2="0.00"/><line x1="1034.00" y1="5.56" x2="907.03" y2="0.00"/><line x1="1034.00" y1="8.83" x2="842.07" y2="0.00"/><line x1="1034.00" y1="12.46" x2="777.02" y2="0.00"/><line x1="1034.00" y1="16.51" x2="711.88" y2="0.00"/><line x1="1034.00" y1="21.05" x2="646.66" y2="0.00"/><line x1="1034.00" y1="26.18" x2="581.36" y2="0.00"/><line x1="1034.00" y1="32.02" x2="515.96" y2="0.00"/><line x1="1034.00" y1="38.74" x2="450.48" y2="0.00"/><line x1="1034.00" y1="46.55" x2="384.91" y2="0.00"/><line x1="1034.00" y1="55.72" x2="319.26" y2="0.00"/><line x1="1034.00" y1="66.67" x2="253.52" y2="0.00"/><line x1="1034.00" y1="79.95" x2="187.69" y2="0.00"/><line x1="1034.00" y1="96.41" x2="121.77" y2="0.00"/><line x1="1034.00" y1="117.33" x2="55.77" y2="0.00"/><line x1="1034.00" y1="144.81" x2="0.00" y2="1.43"/><line x1="1034.00" y1="182.51" x2="0.00" y2="12.57"/><line x1="1034.00" y1="237.46" x2="0.00" y2="28.81"/><line x1="1034.00" y1="324.98" x2="0.00" y2="54.67"/><line x1="1034.00" y1="486.23" x2="0.00" y2="102.32"/><line x1="1034.00" y1="882.18" x2="0.00" y2="219.32"/></g><line x1="1034.00" y1="196.98" x2="0.00" y2="418.69" stroke="#0000ff" stroke-dasharray="5 3"/><line x1="1034.00" y1="324.98" x2="0.00" y2="54.67" stroke="#ff0000" stroke-dasharray="5 3"/><line x1="789" y1="0" x2="701" y2="960" stroke="#00ee00" stroke-dasharray="5 3"/><polygon points="354.5,425.3 500.0,514.3 502.1,788.6 369.3,669.1" fill="#009999" /><polygon points="500.0,514.3 740.3,434.0 719.9,681.2 502.1,788.6" fill="#00a0a0" /><polygon points="579.1,366.4 740.3,434.0 500.0,514.3 354.5,425.3" fill="#008080" /><g stroke="#00ffff" stroke-width="1.1" fill="none"><polyline points="354.5,425.3 579.1,366.4 740.3,434.0 719.9,681.2 502.1,788.6 369.3,669.1 354.5,425.3 500.0,514.3 740.3,434.0"/><line x1="500" y1="514.3" x2="502.1" y2="788.6"/></g><defs><linearGradient id="cg" x1="0" x2="1" y1="0" y2="0"><stop offset="0" stop-color="#7a7a00"/><stop offset="0.12" stop-color="#b0b000"/><stop offset="0.4" stop-color="#dcdc00"/><stop offset="0.55" stop-color="#d8d800"/><stop offset="0.8" stop-color="#a0a000"/><stop offset="0.93" stop-color="#606000"/><stop offset="1" stop-color="#303000"/></linearGradient></defs><path d="M521.6,130 L556.2,130 L552.2,445 A15.3,4 0 0 1 521.5,445 Z" fill="url(#cg)"/><ellipse cx="538.9" cy="130.2" rx="17.1" ry="3.2" fill="#808000" stroke="#e8e800" stroke-width="1"/></svg><div class="r" style="left:1206px;top:162px;width:116px;height:28px;background:#f0f0f0;border-left:1px solid #fff;border-bottom:1px solid #fff;box-sizing:border-box"></div><div class="r" style="left:1208px;top:164px;width:28px;height:23px;background:#c8e1f6;border:1px solid #99ccf0;box-sizing:border-box;"></div><svg class="s" style="left:1213px;top:166px;" width="21" height="20" viewBox="0 0 21 20"><circle cx="11" cy="10" r="9.5" fill="#55dddd"/><path d="M2,6 Q11,-1 20,6" fill="#55bbbb"/><path d="M15,2 Q21,5 21,10 Q21,16 15,19 Z" fill="#00ffff"/></svg><div class="t" style="left:1212.90px;top:169.42px;font-size:17px;line-height:18.99px;color:#000;font-weight:700;transform:scaleX(0.9136);">3D</div><div class="t" style="left:1240.90px;top:168.68px;font-size:14.5px;line-height:16.20px;color:#0000ff;font-weight:700;transform:scaleX(0.7500);">Top</div><div class="t" style="left:1273.70px;top:168.68px;font-size:14.5px;line-height:16.20px;color:#007700;font-weight:700;transform:scaleX(0.9400);">V</div><div class="t" style="left:1302.00px;top:168.73px;font-size:15px;line-height:16.75px;color:#ff0000;font-weight:400;transform:scaleX(0.8400);">P</div><svg class="s" style="left:335px;top:995px;" width="70" height="100" viewBox="0 0 70 100"><path d="M15.3,69.5 V36" stroke="#00ff00" stroke-width="2"/><polygon points="11.5,41 15.3,27 19.1,41" fill="#00ff00"/><path d="M15.3,69.5 L38,62" stroke="#0000ff" stroke-width="2"/><polygon points="34,57 44,59 37,65" fill="#0000ff"/><path d="M15.3,69.5 L38,80" stroke="#ff0000" stroke-width="2"/><polygon points="34,84 46,86 38,75" fill="#ff0000"/></svg><div class="t" style="left:346.00px;top:1004.03px;font-size:13px;line-height:14.52px;color:#ffff00;font-weight:700;transform:scaleX(1.0625);text-shadow:1px 0 #000,-1px 0 #000,0 1px #000,0 -1px #000,1px 1px #000,-1px -1px #000,1px -1px #000,-1px 1px #000;">Z</div><div class="t" style="left:383.00px;top:1046.03px;font-size:13px;line-height:14.52px;color:#ffff00;font-weight:700;transform:scaleX(0.9444);text-shadow:1px 0 #000,-1px 0 #000,0 1px #000,0 -1px #000,1px 1px #000,-1px -1px #000,1px -1px #000,-1px 1px #000;">Y</div><div class="t" style="left:388.00px;top:1076.03px;font-size:13px;line-height:14.52px;color:#ffff00;font-weight:700;transform:scaleX(0.9444);text-shadow:1px 0 #000,-1px 0 #000,0 1px #000,0 -1px #000,1px 1px #000,-1px -1px #000,1px -1px #000,-1px 1px #000;">X</div><div class="t" style="left:490.00px;top:1100.58px;font-size:13.5px;line-height:15.08px;color:#ffff00;font-weight:700;transform:scaleX(0.6667);font-family:Liberation Mono,monospace;text-shadow:1px 0 #000,-1px 0 #000,0 1px #000,0 -1px #000,1px 1px #000,-1px -1px #000,1px -1px #000,-1px 1px #000;">S</div><div class="t" style="left:500.00px;top:1100.58px;font-size:13.5px;line-height:15.08px;color:#ffff00;font-weight:700;transform:scaleX(0.6000);font-family:Liberation Mono,monospace;text-shadow:1px 0 #000,-1px 0 #000,0 1px #000,0 -1px #000,1px 1px #000,-1px -1px #000,1px -1px #000,-1px 1px #000;">H</div><div class="t" style="left:510.00px;top:1100.58px;font-size:13.5px;line-height:15.08px;color:#ffff00;font-weight:700;transform:scaleX(0.6000);font-family:Liberation Mono,monospace;text-shadow:1px 0 #000,-1px 0 #000,0 1px #000,0 -1px #000,1px 1px #000,-1px -1px #000,1px -1px #000,-1px 1px #000;">A</div><div class="t" style="left:520.00px;top:1100.58px;font-size:13.5px;line-height:15.08px;color:#ffff00;font-weight:700;transform:scaleX(0.6000);font-family:Liberation Mono,monospace;text-shadow:1px 0 #000,-1px 0 #000,0 1px #000,0 -1px #000,1px 1px #000,-1px -1px #000,1px -1px #000,-1px 1px #000;">D</div><div class="t" style="left:530.00px;top:1100.58px;font-size:13.5px;line-height:15.08px;color:#ffff00;font-weight:700;transform:scaleX(0.6667);font-family:Liberation Mono,monospace;text-shadow:1px 0 #000,-1px 0 #000,0 1px #000,0 -1px #000,1px 1px #000,-1px -1px #000,1px -1px #000,-1px 1px #000;">E</div><div class="t" style="left:540.00px;top:1100.58px;font-size:13.5px;line-height:15.08px;color:#ffff00;font-weight:700;transform:scaleX(0.6000);font-family:Liberation Mono,monospace;text-shadow:1px 0 #000,-1px 0 #000,0 1px #000,0 -1px #000,1px 1px #000,-1px -1px #000,1px -1px #000,-1px 1px #000;">R</div><div class="t" style="left:560.00px;top:1100.58px;font-size:13.5px;line-height:15.08px;color:#ffff00;font-weight:700;transform:scaleX(0.5455);font-family:Liberation Mono,monospace;text-shadow:1px 0 #000,-1px 0 #000,0 1px #000,0 -1px #000,1px 1px #000,-1px -1px #000,1px -1px #000,-1px 1px #000;">M</div><div class="t" style="left:570.00px;top:1100.58px;font-size:13.5px;line-height:15.08px;color:#ffff00;font-weight:700;transform:scaleX(0.5455);font-family:Liberation Mono,monospace;text-shadow:1px 0 #000,-1px 0 #000,0 1px #000,0 -1px #000,1px 1px #000,-1px -1px #000,1px -1px #000,-1px 1px #000;">O</div><div class="t" style="left:580.00px;top:1100.58px;font-size:13.5px;line-height:15.08px;color:#ffff00;font-weight:700;transform:scaleX(0.6000);font-family:Liberation Mono,monospace;text-shadow:1px 0 #000,-1px 0 #000,0 1px #000,0 -1px #000,1px 1px #000,-1px -1px #000,1px -1px #000,-1px 1px #000;">D</div><div class="t" style="left:590.00px;top:1100.58px;font-size:13.5px;line-height:15.08px;color:#ffff00;font-weight:700;transform:scaleX(0.6667);font-family:Liberation Mono,monospace;text-shadow:1px 0 #000,-1px 0 #000,0 1px #000,0 -1px #000,1px 1px #000,-1px -1px #000,1px -1px #000,-1px 1px #000;">E</div><div class="t" style="left:600.00px;top:1100.58px;font-size:13.5px;line-height:15.08px;color:#ffff00;font-weight:700;transform:scaleX(0.5000);font-family:Liberation Mono,monospace;text-shadow:1px 0 #000,-1px 0 #000,0 1px #000,0 -1px #000,1px 1px #000,-1px -1px #000,1px -1px #000,-1px 1px #000;">!</div><div class="r" style="left:288px;top:1122px;width:137px;height:32px;background:#ffffff;border-left:1px solid #d9d9d9;border-right:1px solid #d9d9d9;border-bottom:1px solid #d9d9d9;box-sizing:border-box"></div><svg class="s" style="left:311px;top:1131px;" width="14" height="14" viewBox="0 0 14 14"><path d="M5,0.5 H9 V5 H13.5 V9 H9 V13.5 H5 V9 H0.5 V5 H5 Z" fill="#a0b0e8" stroke="#000" stroke-width="1"/></svg><div class="t" style="left:345.00px;top:1130.87px;font-size:16.5px;line-height:18.43px;color:#000;font-weight:400;transform:scaleX(0.8723);">Szene</div><div class="r" style="left:1185px;top:1122px;width:137px;height:32px;background:#ffffff;border-left:1px solid #d9d9d9;border-bottom:1px solid #d9d9d9;box-sizing:border-box"></div><svg class="s" style="left:1208px;top:1131px;" width="14" height="14" viewBox="0 0 14 14"><path d="M5,0.5 H9 V5 H13.5 V9 H9 V13.5 H5 V9 H0.5 V5 H5 Z" fill="#a0b0e8" stroke="#000" stroke-width="1"/></svg><div class="t" style="left:1239.00px;top:1130.37px;font-size:16.5px;line-height:18.43px;color:#000;font-weight:400;transform:scaleX(0.9400);">Layout</div><div class="r" style="left:1445px;top:164px;width:223px;height:25px;background:#f0f0f0;border:1px solid #d9d9d9;box-sizing:border-box;"></div><div class="r" style="left:1564px;top:164px;width:1px;height:25px;background:#d9d9d9;"></div><div class="r" style="left:1329px;top:163px;width:117px;height:26px;background:#ffffff;border-left:1px solid #d9d9d9;box-sizing:border-box"></div><div class="t" style="left:1346.30px;top:166.94px;font-size:17.3px;line-height:19.32px;color:#000;font-weight:400;transform:scaleX(0.8920);">Hinzufügen</div><div class="t" style="left:1462.30px;top:169.04px;font-size:17.3px;line-height:19.32px;color:#000;font-weight:400;transform:scaleX(0.9011);">Modifizieren</div><div class="t" style="left:1583.40px;top:169.04px;font-size:17.3px;line-height:19.32px;color:#000;font-weight:400;transform:scaleX(0.9162);">Hilfslinien</div><div class="r" style="left:1342px;top:192px;width:315px;height:69px;background:#f5f5f2;"></div><div class="r" style="left:1344px;top:194px;width:31px;height:31px;background:#666699;"></div><div class="r" style="left:1344px;top:228px;width:31px;height:31px;background:#666699;"></div><div class="r" style="left:1379px;top:194px;width:31px;height:31px;background:#666699;"></div><div class="r" style="left:1379px;top:228px;width:31px;height:31px;background:#666699;"></div><div class="r" style="left:1414px;top:194px;width:31px;height:31px;background:#666699;"></div><div class="r" style="left:1414px;top:228px;width:31px;height:31px;background:#666699;"></div><div class="r" style="left:1449px;top:194px;width:31px;height:31px;background:#666699;"></div><div class="r" style="left:1449px;top:228px;width:31px;height:31px;background:#666699;"></div><div class="r" style="left:1484px;top:194px;width:31px;height:31px;background:#666699;"></div><div class="r" style="left:1484px;top:228px;width:31px;height:31px;background:#666699;"></div><div class="r" style="left:1519px;top:194px;width:31px;height:31px;background:#666699;"></div><div class="r" style="left:1519px;top:228px;width:31px;height:31px;background:#55558a;"></div><div class="r" style="left:1554px;top:194px;width:31px;height:31px;background:#666699;"></div><div class="r" style="left:1554px;top:228px;width:31px;height:31px;background:#55558a;"></div><div class="r" style="left:1589px;top:194px;width:31px;height:31px;background:#8a3a9a;"></div><div class="r" style="left:1589px;top:228px;width:31px;height:31px;background:#55558a;"></div><div class="r" style="left:1624px;top:194px;width:31px;height:31px;background:#9a9a9a;"></div><div class="r" style="left:1624px;top:228px;width:31px;height:31px;background:#55558a;"></div><div class="r" style="left:1344px;top:194px;width:31px;height:31px;border:2px solid #000;box-sizing:border-box;"></div><svg class="s" style="left:1344px;top:194px;" width="31" height="31" viewBox="0 0 31 31"><polygon points="6,12 15,5 24,12 24,23 6,23" fill="#c8c8e4"/><polygon points="24,12 27,14 27,22 24,23" fill="#505080"/><path d="M5,13 L15,4 L25,13" stroke="#fff" stroke-width="1.2" fill="none"/><rect x="9" y="16" width="3" height="7" fill="#8888bb"/><rect x="15" y="15" width="3" height="3" fill="#8888bb"/></svg><svg class="s" style="left:1379px;top:194px;" width="31" height="31" viewBox="0 0 31 31"><path d="M12,6 H17 V18 M10,14 H18 V19 M10,14 V24 M18,17 V24 M14,18 V26" stroke="#c8c8e4" stroke-width="1.6" fill="none"/><rect x="13" y="5" width="5" height="9" fill="#aaa"/></svg><svg class="s" style="left:1414px;top:194px;" width="31" height="31" viewBox="0 0 31 31"><rect x="11" y="7" width="9" height="14" fill="none" stroke="#c8c8e4" stroke-width="1.5"/><path d="M13,9 L18,19 M18,9 L13,19" stroke="#c8c8e4" stroke-width="1"/></svg><svg class="s" style="left:1449px;top:194px;" width="31" height="31" viewBox="0 0 31 31"><path d="M9,8 H22 M15.5,8 V22 M9,22 H22" stroke="#c8c8e4" stroke-width="2.4"/></svg><svg class="s" style="left:1484px;top:194px;" width="31" height="31" viewBox="0 0 31 31"><path d="M8,10 L22,6 M12,14 L22,10" stroke="#b0b0cc" stroke-width="2.2"/><path d="M7,22 Q9,17 14,17 H19 Q23,18 24,22 Z" fill="#c8c8e4"/><circle cx="11" cy="23" r="1.6" fill="#333"/><circle cx="21" cy="23" r="1.6" fill="#333"/></svg><svg class="s" style="left:1519px;top:194px;" width="31" height="31" viewBox="0 0 31 31"><polygon points="15.5,5 21,12 18,12 22,18 17,18 17,24 14,24 14,18 9,18 13,12 10,12" fill="#c8c8e4"/></svg><svg class="s" style="left:1554px;top:194px;" width="31" height="31" viewBox="0 0 31 31"><circle cx="13" cy="9" r="2" fill="#c8c8e4"/><path d="M13,12 V20 M10,14 L16,15 M12,20 L11,25 M14,20 L15,25" stroke="#c8c8e4" stroke-width="2.2"/><text x="17.5" y="14" font-size="11" font-weight="bold" fill="#c8c8e4" font-family="Liberation Sans">0</text></svg><svg class="s" style="left:1589px;top:194px;" width="31" height="31" viewBox="0 0 31 31"><rect x="14" y="8" width="3.5" height="3.5" fill="#fff"/><rect x="14" y="13" width="3.5" height="10" fill="#fff"/></svg><svg class="s" style="left:1624px;top:194px;" width="31" height="31" viewBox="0 0 31 31"><rect x="9" y="19.5" width="3" height="3" fill="#fff"/><rect x="14" y="19.5" width="3" height="3" fill="#fff"/><rect x="19" y="19.5" width="3" height="3" fill="#fff"/></svg><svg class="s" style="left:1344px;top:228px;" width="31" height="31" viewBox="0 0 31 31"><path d="M12,6 V22 M7,10 H25 M9,24 H20" stroke="#c8c8e4" stroke-width="1.3"/><path d="M9,24 H20" stroke="#000" stroke-width="1.5"/></svg><svg class="s" style="left:1379px;top:228px;" width="31" height="31" viewBox="0 0 31 31"><rect x="11" y="11" width="5" height="4" fill="none" stroke="#c8c8e4"/><rect x="8" y="15" width="12" height="4" fill="#c8c8e4"/><path d="M17,15 L24,8 V17" stroke="#c8c8e4" stroke-width="1.2" fill="none"/><rect x="8" y="20" width="10" height="3" rx="1.5" fill="#d8d0b0" stroke="#333"/></svg><svg class="s" style="left:1414px;top:228px;" width="31" height="31" viewBox="0 0 31 31"><rect x="7" y="9" width="17" height="3" fill="#c8c8e4"/><rect x="7" y="12" width="17" height="6" fill="#000"/><rect x="9" y="14.5" width="4" height="1" fill="#fff"/><rect x="15" y="14.5" width="4" height="1" fill="#fff"/><rect x="7" y="18" width="17" height="3" fill="#c8c8e4"/></svg><svg class="s" style="left:1449px;top:228px;" width="31" height="31" viewBox="0 0 31 31"><circle cx="10" cy="8" r="2" fill="#aaaacc"/><circle cx="13" cy="10" r="2" fill="#aaaacc"/><rect x="8" y="14" width="14" height="8" fill="#c8c8e4"/><rect x="17" y="10" width="3" height="5" fill="#c8c8e4"/><path d="M7,24 H24" stroke="#aaa"/></svg><svg class="s" style="left:1484px;top:228px;" width="31" height="31" viewBox="0 0 31 31"><path d="M8,11 H12 M14,11 H20 M8,14 H10 M12,14 H17 M8,17 H12 M14,17 H20 M8,20 H10 M12,20 H17" stroke="#c8c8e4" stroke-width="2"/></svg><div class="t" style="left:1527.50px;top:235.52px;font-size:16px;line-height:17.87px;color:#dcdcf0;font-weight:700;transform:scaleX(0.6667);">U1</div><div class="t" style="left:1562.50px;top:235.52px;font-size:16px;line-height:17.87px;color:#dcdcf0;font-weight:700;transform:scaleX(0.6667);">U2</div><div class="t" style="left:1597.50px;top:235.52px;font-size:16px;line-height:17.87px;color:#dcdcf0;font-weight:700;transform:scaleX(0.6667);">U3</div><div class="t" style="left:1630.50px;top:235.52px;font-size:16px;line-height:17.87px;color:#dcdcf0;font-weight:700;transform:scaleX(0.7391);">UU</div><div class="r" style="left:1344px;top:271px;width:310px;height:846px;background:#ffffff;border:1px solid #a0a0a0;box-sizing:border-box;"></div><div class="r" style="left:1628px;top:272px;width:25px;height:844px;background:#f0f0f0;"></div><div class="r" style="left:1629px;top:299px;width:23px;height:674px;background:#cdcdcd;"></div><svg class="s" style="left:1634px;top:284px;" width="12" height="7" viewBox="0 0 12 7"><path d="M0.5,6.5 L6,0.5 L11.5,6.5" stroke="#555" stroke-width="1.5" fill="none"/></svg><svg class="s" style="left:1634px;top:1100px;" width="12" height="7" viewBox="0 0 12 7"><path d="M0.5,0.5 L6,6.5 L11.5,0.5" stroke="#555" stroke-width="1.5" fill="none"/></svg><div style="position:absolute;left:1345px;top:272px;width:283px;height:844px;overflow:hidden"><div style="position:absolute;left:-1345px;top:-272px"><div class="r" style="left:1351px;top:274px;width:80px;height:80px;background:#ffffe6;border:1px solid #c4c4c4;box-sizing:border-box;"></div><svg class="s" style="left:1351px;top:274px;" width="80" height="80" viewBox="0 0 80 80"><polygon points="9.2,34.8 43.5,24 70.9,37.9 37,48.3" fill="#cfcfcf"/><polygon points="9.2,34.8 37,48.3 37,52.9 9.2,39.3" fill="#333"/><polygon points="37,48.3 70.9,37.9 70.9,42.5 37,52.9" fill="#9a9a9a"/><path d="M10.5,22 V30" stroke="#ee0000" stroke-width="2"/><polygon points="6,28 15,28 10.5,34" fill="#ee0000"/></svg><svg class="s" style="left:1354.5px;top:333.5px;" width="11" height="17" viewBox="0 0 11 17"><path d="M1.5,6 Q1.5,2.5 5.5,2.3 Q9.5,2.5 9.5,6 V12.5 Q9.5,16 5.5,16 Q1.5,16 1.5,12.5 Z" fill="#fff" stroke="#000" stroke-width="1.3"/><path d="M1.5,6 Q1.5,2.5 5.5,2.3 V8 H1.5 Z" fill="#000"/><path d="M1.5,8 H9.5" stroke="#000" stroke-width="1.2"/><path d="M5.5,2.3 L4,0.5" stroke="#000" stroke-width="1"/></svg><div class="r" style="left:1407px;top:336px;width:23px;height:17px;background:#d7d7f7;"></div><svg class="s" style="left:1407px;top:336px;" width="23" height="17" viewBox="0 0 23 17"><rect x="4.8" y="7.8" width="2.5" height="2.5" fill="#000"/><rect x="10.8" y="7.8" width="2.5" height="2.5" fill="#000"/><rect x="15.8" y="7.8" width="2.5" height="2.5" fill="#000"/></svg><div class="t" style="left:1367.80px;top:360.91px;font-size:19px;line-height:21.22px;color:#000;font-weight:400;transform:scaleX(0.8667);">Decke</div><div class="r" style="left:1441px;top:274px;width:80px;height:80px;background:#ffffe6;border:1px solid #c4c4c4;box-sizing:border-box;"></div><svg class="s" style="left:1441px;top:274px;" width="80" height="80" viewBox="0 0 80 80"><polygon points="22,32 66,18.6 66,44.7 22,58.3" fill="#9c9c9c"/><polygon points="20,32 64,18 66,18.6 22,32.6" fill="#d6d6d6"/><polygon points="20,32 22,32.6 22,58.3 20,57.5" fill="#333"/></svg><div class="t" style="left:1444.80px;top:275.37px;font-size:16.5px;line-height:18.43px;color:#007700;font-weight:400;transform:scaleX(0.9625);">LW</div><svg class="s" style="left:1444.5px;top:333.5px;" width="11" height="17" viewBox="0 0 11 17"><path d="M1.5,6 Q1.5,2.5 5.5,2.3 Q9.5,2.5 9.5,6 V12.5 Q9.5,16 5.5,16 Q1.5,16 1.5,12.5 Z" fill="#fff" stroke="#000" stroke-width="1.3"/><path d="M1.5,6 Q1.5,2.5 5.5,2.3 V8 H1.5 Z" fill="#000"/><path d="M1.5,8 H9.5" stroke="#000" stroke-width="1.2"/><path d="M5.5,2.3 L4,0.5" stroke="#000" stroke-width="1"/></svg><div class="r" style="left:1497px;top:336px;width:23px;height:17px;background:#d7d7f7;"></div><svg class="s" style="left:1497px;top:336px;" width="23" height="17" viewBox="0 0 23 17"><rect x="4.8" y="7.8" width="2.5" height="2.5" fill="#000"/><rect x="10.8" y="7.8" width="2.5" height="2.5" fill="#000"/><rect x="15.8" y="7.8" width="2.5" height="2.5" fill="#000"/></svg><div class="t" style="left:1458.00px;top:360.91px;font-size:19px;line-height:21.22px;color:#000;font-weight:400;transform:scaleX(0.9224);">Wand</div><div class="r" style="left:1531px;top:274px;width:80px;height:80px;background:#ffffe6;border:1px solid #c4c4c4;box-sizing:border-box;"></div><svg class="s" style="left:1531px;top:274px;" width="80" height="80" viewBox="0 0 80 80"><polygon points="13.5,43.3 49.6,27.6 66.7,35.7 31.6,51.9" fill="#6fa88a"/><polygon points="13.5,43.3 31.6,51.9 31.6,54 13.5,45.5" fill="#4a8a6a"/><polygon points="31.6,51.9 66.7,35.7 66.7,38 31.6,54" fill="#3f7a5c"/><polygon points="21.3,27.6 58.3,13.2 58.3,33 21.3,48.3" fill="#cfcfbf" fill-opacity="0.85"/></svg><svg class="s" style="left:1534.5px;top:333.5px;" width="11" height="17" viewBox="0 0 11 17"><path d="M1.5,6 Q1.5,2.5 5.5,2.3 Q9.5,2.5 9.5,6 V12.5 Q9.5,16 5.5,16 Q1.5,16 1.5,12.5 Z" fill="#fff" stroke="#000" stroke-width="1.3"/><path d="M1.5,6 Q1.5,2.5 5.5,2.3 V8 H1.5 Z" fill="#000"/><path d="M1.5,8 H9.5" stroke="#000" stroke-width="1.2"/><path d="M5.5,2.3 L4,0.5" stroke="#000" stroke-width="1"/></svg><div class="r" style="left:1587px;top:336px;width:23px;height:17px;background:#d7d7f7;"></div><svg class="s" style="left:1587px;top:336px;" width="23" height="17" viewBox="0 0 23 17"><rect x="4.8" y="7.8" width="2.5" height="2.5" fill="#000"/><rect x="10.8" y="7.8" width="2.5" height="2.5" fill="#000"/><rect x="15.8" y="7.8" width="2.5" height="2.5" fill="#000"/></svg><div class="t" style="left:1532.50px;top:360.91px;font-size:19px;line-height:21.22px;color:#000;font-weight:400;transform:scaleX(0.8907);">Fundam...</div><div class="r" style="left:1351px;top:384px;width:80px;height:80px;background:#ffffe6;border:1px solid #c4c4c4;box-sizing:border-box;"></div><svg class="s" style="left:1351px;top:384px;" width="80" height="80" viewBox="0 0 80 80"><polygon points="19,31.5 65.5,17.9 65.5,44.9 19,56.4" fill="#9c9c9c"/><polygon points="17.5,31 64,17.5 65.5,17.9 19,31.5" fill="#d6d6d6"/><polygon points="17.5,31 19,31.5 19,56.4 17.5,56" fill="#333"/><polygon points="36.6,31.2 49.2,27.6 49.2,46.6 36.6,51.1" fill="#eaead6"/><polygon points="47.5,28 49.2,27.6 49.2,46.6 47.5,47" fill="#555"/></svg><div class="r" style="left:1407px;top:446px;width:23px;height:17px;background:#d7d7f7;"></div><svg class="s" style="left:1407px;top:446px;" width="23" height="17" viewBox="0 0 23 17"><rect x="4.8" y="7.8" width="2.5" height="2.5" fill="#000"/><rect x="10.8" y="7.8" width="2.5" height="2.5" fill="#000"/><rect x="15.8" y="7.8" width="2.5" height="2.5" fill="#000"/></svg><div class="t" style="left:1362.20px;top:470.91px;font-size:19px;line-height:21.22px;color:#000;font-weight:400;transform:scaleX(0.8877);">Öff_Tür</div><div class="r" style="left:1441px;top:384px;width:80px;height:80px;background:#ffffe6;border:1px solid #c4c4c4;box-sizing:border-box;"></div><svg class="s" style="left:1441px;top:384px;" width="80" height="80" viewBox="0 0 80 80"><polygon points="20,31.8 66.8,19.1 66.8,43.9 20,58.3" fill="#9c9c9c"/><polygon points="18.5,31.4 65.3,18.7 66.8,19.1 20,31.8" fill="#d6d6d6"/><polygon points="18.5,31.4 20,31.8 20,58.3 18.5,58" fill="#333"/><polygon points="36,32.6 50.4,29 50.4,42.5 36,46" fill="#eaead6"/><polygon points="48.8,29.4 50.4,29 50.4,42.5 48.8,42.9" fill="#555"/></svg><div class="r" style="left:1497px;top:446px;width:23px;height:17px;background:#d7d7f7;"></div><svg class="s" style="left:1497px;top:446px;" width="23" height="17" viewBox="0 0 23 17"><rect x="4.8" y="7.8" width="2.5" height="2.5" fill="#000"/><rect x="10.8" y="7.8" width="2.5" height="2.5" fill="#000"/><rect x="15.8" y="7.8" width="2.5" height="2.5" fill="#000"/></svg><div class="t" style="left:1451.50px;top:470.91px;font-size:19px;line-height:21.22px;color:#000;font-weight:400;transform:scaleX(0.8809);">Öff_Fen</div><div class="r" style="left:1531px;top:384px;width:80px;height:80px;background:#ffffe6;border:1px solid #c4c4c4;box-sizing:border-box;"></div><svg class="s" style="left:1531px;top:384px;" width="80" height="80" viewBox="0 0 80 80"><g fill="#cfe8e8" fill-opacity="0.6" stroke="#2299ee" stroke-width="1"><polygon points="19.8,34.7 45.1,23.8 57.7,30.1 33.4,41"/><polygon points="19.8,34.7 33.4,41 33.4,56.3 19.8,49.1"/><polygon points="33.4,41 57.7,30.1 57.7,45.5 33.4,56.3"/></g><path d="M45.1,23.8 V39 L19.8,49.1 M45.1,39 L57.7,45.5" stroke="#2299ee" stroke-width="0.8" fill="none"/></svg><div class="r" style="left:1587px;top:446px;width:23px;height:17px;background:#d7d7f7;"></div><svg class="s" style="left:1587px;top:446px;" width="23" height="17" viewBox="0 0 23 17"><rect x="4.8" y="7.8" width="2.5" height="2.5" fill="#000"/><rect x="10.8" y="7.8" width="2.5" height="2.5" fill="#000"/><rect x="15.8" y="7.8" width="2.5" height="2.5" fill="#000"/></svg><div class="t" style="left:1531.00px;top:470.91px;font-size:19px;line-height:21.22px;color:#000;font-weight:400;transform:scaleX(0.9000);">Sperrzone</div><div class="r" style="left:1351px;top:494px;width:80px;height:80px;background:#ffffe6;border:1px solid #c4c4c4;box-sizing:border-box;"></div><svg class="s" style="left:1351px;top:494px;" width="80" height="80" viewBox="0 0 80 80"><polygon points="28,10 36,6 48,10 40,14" fill="#66ff66"/><polygon points="28,10 40,14 40,70 28,66" fill="#006600"/><polygon points="40,14 48,10 48,66 40,70" fill="#00dd00"/></svg><svg class="s" style="left:1354.5px;top:553.5px;" width="11" height="17" viewBox="0 0 11 17"><path d="M1.5,6 Q1.5,2.5 5.5,2.3 Q9.5,2.5 9.5,6 V12.5 Q9.5,16 5.5,16 Q1.5,16 1.5,12.5 Z" fill="#fff" stroke="#000" stroke-width="1.3"/><path d="M1.5,6 Q1.5,2.5 5.5,2.3 V8 H1.5 Z" fill="#000"/><path d="M1.5,8 H9.5" stroke="#000" stroke-width="1.2"/><path d="M5.5,2.3 L4,0.5" stroke="#000" stroke-width="1"/></svg><div class="t" style="left:1367.20px;top:580.90px;font-size:19px;line-height:21.22px;color:#000;font-weight:400;transform:scaleX(0.8778);">Stütze</div><div class="r" style="left:1441px;top:494px;width:80px;height:80px;background:#ffffe6;border:1px solid #c4c4c4;box-sizing:border-box;"></div><svg class="s" style="left:1441px;top:494px;" width="80" height="80" viewBox="0 0 80 80"><polygon points="14,30 55,16 68,20 27,34" fill="#22cc66"/><polygon points="14,30 27,34 27,50 14,46" fill="#005522"/><polygon points="27,34 68,20 68,36 27,50" fill="#00994a"/></svg><svg class="s" style="left:1444.5px;top:553.5px;" width="11" height="17" viewBox="0 0 11 17"><path d="M1.5,6 Q1.5,2.5 5.5,2.3 Q9.5,2.5 9.5,6 V12.5 Q9.5,16 5.5,16 Q1.5,16 1.5,12.5 Z" fill="#fff" stroke="#000" stroke-width="1.3"/><path d="M1.5,6 Q1.5,2.5 5.5,2.3 V8 H1.5 Z" fill="#000"/><path d="M1.5,8 H9.5" stroke="#000" stroke-width="1.2"/><path d="M5.5,2.3 L4,0.5" stroke="#000" stroke-width="1"/></svg><div class="t" style="left:1456.90px;top:580.90px;font-size:19px;line-height:21.22px;color:#000;font-weight:400;transform:scaleX(0.8483);">Balken</div><div class="r" style="left:1531px;top:494px;width:80px;height:80px;background:#ffffe6;border:1px solid #c4c4c4;box-sizing:border-box;"></div><svg class="s" style="left:1531px;top:494px;" width="80" height="80" viewBox="0 0 80 80"><polygon points="20,56 60,13 66,17 27,60" fill="#e6e600"/><polygon points="27,60 66,17 68,24 30,65" fill="#b0b000"/><polygon points="20,56 27,60 30,65 24,62" fill="#555500"/></svg><svg class="s" style="left:1534.5px;top:553.5px;" width="11" height="17" viewBox="0 0 11 17"><path d="M1.5,6 Q1.5,2.5 5.5,2.3 Q9.5,2.5 9.5,6 V12.5 Q9.5,16 5.5,16 Q1.5,16 1.5,12.5 Z" fill="#fff" stroke="#000" stroke-width="1.3"/><path d="M1.5,6 Q1.5,2.5 5.5,2.3 V8 H1.5 Z" fill="#000"/><path d="M1.5,8 H9.5" stroke="#000" stroke-width="1.2"/><path d="M5.5,2.3 L4,0.5" stroke="#000" stroke-width="1"/></svg><div class="t" style="left:1554.70px;top:580.90px;font-size:19px;line-height:21.22px;color:#000;font-weight:400;transform:scaleX(0.8564);">Stab</div><div class="r" style="left:1351px;top:604px;width:80px;height:80px;background:#ffffe6;border:1px solid #c4c4c4;box-sizing:border-box;"></div><svg class="s" style="left:1351px;top:604px;" width="80" height="80" viewBox="0 0 80 80"><polygon points="18.2,40.2 23,29.4 34,57.4" fill="#7a0000"/><polygon points="23,29.4 53.2,24 63.7,44.7 34,57.4" fill="#ee0000"/></svg><svg class="s" style="left:1354.5px;top:663.5px;" width="11" height="17" viewBox="0 0 11 17"><path d="M1.5,6 Q1.5,2.5 5.5,2.3 Q9.5,2.5 9.5,6 V12.5 Q9.5,16 5.5,16 Q1.5,16 1.5,12.5 Z" fill="#fff" stroke="#000" stroke-width="1.3"/><path d="M1.5,6 Q1.5,2.5 5.5,2.3 V8 H1.5 Z" fill="#000"/><path d="M1.5,8 H9.5" stroke="#000" stroke-width="1.2"/><path d="M5.5,2.3 L4,0.5" stroke="#000" stroke-width="1"/></svg><div class="t" style="left:1372.00px;top:690.90px;font-size:19px;line-height:21.22px;color:#000;font-weight:400;transform:scaleX(0.8750);">Dach</div><div class="r" style="left:1441px;top:604px;width:80px;height:80px;background:#ffffe6;border:1px solid #c4c4c4;box-sizing:border-box;"></div><svg class="s" style="left:1441px;top:604px;" width="80" height="80" viewBox="0 0 80 80"><polygon points="15.2,59.2 15.2,55.1 18.1,55.1 18.1,51.0 21.1,51.0 21.1,46.9 24.0,46.9 24.0,42.8 27.0,42.8 27.0,38.7 29.9,38.7 29.9,34.6 32.9,34.6 32.9,30.5 35.9,30.5 35.9,26.4 38.8,26.4 38.8,22.3 41.8,22.3 41.8,18.2 44.7,18.2 44.7,14.1 47.7,14.1 61.7,17.7 27.8,68.2" fill="#7a7a7a" stroke="#555" stroke-width="0.8"/><polygon points="27.8,68.2 61.7,17.7 62.5,20.5 29,70" fill="#4a4a4a"/></svg><div class="r" style="left:1497px;top:666px;width:23px;height:17px;background:#d7d7f7;"></div><svg class="s" style="left:1497px;top:666px;" width="23" height="17" viewBox="0 0 23 17"><rect x="4.8" y="7.8" width="2.5" height="2.5" fill="#000"/><rect x="10.8" y="7.8" width="2.5" height="2.5" fill="#000"/><rect x="15.8" y="7.8" width="2.5" height="2.5" fill="#000"/></svg><div class="t" style="left:1455.60px;top:690.90px;font-size:19px;line-height:21.22px;color:#000;font-weight:400;transform:scaleX(0.8763);">Treppe</div><div class="r" style="left:1531px;top:604px;width:80px;height:80px;background:#ffffe6;border:1px solid #c4c4c4;box-sizing:border-box;"></div><svg class="s" style="left:1531px;top:604px;" width="80" height="80" viewBox="0 0 80 80"><g stroke="#aaa" stroke-width="2" fill="none"><path d="M7,35 L43,32 L70,8 M8,36 L12,58 L43,56 L70,40 M43,32 V56 M70,8 V40"/><path d="M13,35 V57 M18,35 V57 M23,34 V57 M28,34 V57 M33,33 V56 M38,33 V56 M48,28 V52 M53,24 V49 M58,19 V46 M63,15 V44"/></g></svg><div class="r" style="left:1587px;top:666px;width:23px;height:17px;background:#d7d7f7;"></div><svg class="s" style="left:1587px;top:666px;" width="23" height="17" viewBox="0 0 23 17"><rect x="4.8" y="7.8" width="2.5" height="2.5" fill="#000"/><rect x="10.8" y="7.8" width="2.5" height="2.5" fill="#000"/><rect x="15.8" y="7.8" width="2.5" height="2.5" fill="#000"/></svg><div class="t" style="left:1536.70px;top:690.90px;font-size:19px;line-height:21.22px;color:#000;font-weight:400;transform:scaleX(0.8671);">Geländer</div><div class="r" style="left:1351px;top:714px;width:80px;height:80px;background:#ffffe6;border:1px solid #c4c4c4;box-sizing:border-box;"></div><svg class="s" style="left:1351px;top:714px;" width="80" height="80" viewBox="0 0 80 80"><polygon points="0.5,43.2 18.6,15.9 42.9,6 79,14 79,35.7 41.1,73.6 0.5,48.6" fill="#117733"/><polygon points="42.9,6 79,14 79,22 60,16" fill="#005522"/><polygon points="5,44.7 12.2,33.9 52.9,40.2 40.2,63.6" fill="#dddd00"/><polygon points="12.2,33.9 25.8,29.4 51,40.2 52.9,40.2" fill="#999900"/><polygon points="25.8,29.4 42.9,17.6 76.3,24.8 51,40.2" fill="#6a4a00"/><polygon points="42.9,17.6 76.3,24.8 70,26 45,20" fill="#aa7700"/></svg><svg class="s" style="left:1354.5px;top:773.5px;" width="11" height="17" viewBox="0 0 11 17"><path d="M1.5,6 Q1.5,2.5 5.5,2.3 Q9.5,2.5 9.5,6 V12.5 Q9.5,16 5.5,16 Q1.5,16 1.5,12.5 Z" fill="#fff" stroke="#000" stroke-width="1.3"/><path d="M1.5,6 Q1.5,2.5 5.5,2.3 V8 H1.5 Z" fill="#000"/><path d="M1.5,8 H9.5" stroke="#000" stroke-width="1.2"/><path d="M5.5,2.3 L4,0.5" stroke="#000" stroke-width="1"/></svg><div class="r" style="left:1407px;top:776px;width:23px;height:17px;background:#d7d7f7;"></div><svg class="s" style="left:1407px;top:776px;" width="23" height="17" viewBox="0 0 23 17"><rect x="4.8" y="7.8" width="2.5" height="2.5" fill="#000"/><rect x="10.8" y="7.8" width="2.5" height="2.5" fill="#000"/><rect x="15.8" y="7.8" width="2.5" height="2.5" fill="#000"/></svg><div class="t" style="left:1350.30px;top:800.90px;font-size:19px;line-height:21.22px;color:#000;font-weight:400;transform:scaleX(0.8900);">Terrain +...</div><div class="r" style="left:1441px;top:714px;width:80px;height:80px;background:#ffffe6;border:1px solid #c4c4c4;box-sizing:border-box;"></div><svg class="s" style="left:1441px;top:714px;" width="80" height="80" viewBox="0 0 80 80"><ellipse cx="41" cy="10.6" rx="8" ry="2.5" fill="#666"/><path d="M33,10.6 V18 Q28,24 27,32 V46 H53 V10.6 Z" fill="#b0b0b0"/><path d="M47,12 V46" stroke="#d8d8d8" stroke-width="3"/><ellipse cx="38.5" cy="49.5" rx="15" ry="5" fill="#999"/><path d="M23.5,49.5 V47 H53.5 V49.5" fill="#bbb"/></svg><div class="r" style="left:1497px;top:776px;width:23px;height:17px;background:#d7d7f7;"></div><svg class="s" style="left:1497px;top:776px;" width="23" height="17" viewBox="0 0 23 17"><rect x="4.8" y="7.8" width="2.5" height="2.5" fill="#000"/><rect x="10.8" y="7.8" width="2.5" height="2.5" fill="#000"/><rect x="15.8" y="7.8" width="2.5" height="2.5" fill="#000"/></svg><div class="t" style="left:1440.30px;top:800.90px;font-size:19px;line-height:21.22px;color:#000;font-weight:400;transform:scaleX(0.8521);">Kanalisat...</div><div class="r" style="left:1531px;top:714px;width:80px;height:80px;background:#ffffe6;border:1px solid #c4c4c4;box-sizing:border-box;"></div><svg class="s" style="left:1531px;top:714px;" width="80" height="80" viewBox="0 0 80 80"><path d="M19,37 V47 H60.4 V37" stroke="#0000ee" stroke-width="2.2" fill="none"/><path d="M19,37 Q19,34.5 22,35 M60.4,37 Q60.4,34.5 57.4,35" stroke="#0000ee" stroke-width="2.2" fill="none"/></svg><svg class="s" style="left:1534.5px;top:773.5px;" width="11" height="17" viewBox="0 0 11 17"><path d="M1.5,6 Q1.5,2.5 5.5,2.3 Q9.5,2.5 9.5,6 V12.5 Q9.5,16 5.5,16 Q1.5,16 1.5,12.5 Z" fill="#fff" stroke="#000" stroke-width="1.3"/><path d="M1.5,6 Q1.5,2.5 5.5,2.3 V8 H1.5 Z" fill="#000"/><path d="M1.5,8 H9.5" stroke="#000" stroke-width="1.2"/><path d="M5.5,2.3 L4,0.5" stroke="#000" stroke-width="1"/></svg><div class="r" style="left:1587px;top:776px;width:23px;height:17px;background:#d7d7f7;"></div><svg class="s" style="left:1587px;top:776px;" width="23" height="17" viewBox="0 0 23 17"><rect x="4.8" y="7.8" width="2.5" height="2.5" fill="#000"/><rect x="10.8" y="7.8" width="2.5" height="2.5" fill="#000"/><rect x="15.8" y="7.8" width="2.5" height="2.5" fill="#000"/></svg><div class="t" style="left:1531.20px;top:800.90px;font-size:19px;line-height:21.22px;color:#000;font-weight:400;transform:scaleX(0.8703);">Bewehru...</div><div class="r" style="left:1351px;top:824px;width:80px;height:80px;background:#ffffff;border:1px solid #c4c4c4;box-sizing:border-box;"></div><svg class="s" style="left:1351px;top:824px;" width="80" height="80" viewBox="0 0 80 80"><defs><linearGradient id="pdfg" x1="0" y1="0" x2="0" y2="1"><stop offset="0" stop-color="#d02838"/><stop offset="1" stop-color="#901020"/></linearGradient></defs><rect x="8" y="29" width="63.5" height="23.5" rx="1.5" fill="url(#pdfg)"/><text x="39.7" y="47.5" font-size="17" font-weight="bold" fill="#fff" text-anchor="middle" font-family="Liberation Sans" transform="translate(39.7,0) scale(0.85,1) translate(-39.7,0)">PDF</text></svg><svg class="s" style="left:1354.5px;top:883.5px;" width="11" height="17" viewBox="0 0 11 17"><path d="M1.5,6 Q1.5,2.5 5.5,2.3 Q9.5,2.5 9.5,6 V12.5 Q9.5,16 5.5,16 Q1.5,16 1.5,12.5 Z" fill="#fff" stroke="#000" stroke-width="1.3"/><path d="M1.5,6 Q1.5,2.5 5.5,2.3 V8 H1.5 Z" fill="#000"/><path d="M1.5,8 H9.5" stroke="#000" stroke-width="1.2"/><path d="M5.5,2.3 L4,0.5" stroke="#000" stroke-width="1"/></svg><div class="t" style="left:1375.40px;top:910.90px;font-size:19px;line-height:21.22px;color:#000;font-weight:400;transform:scaleX(0.8316);">PDF</div><div class="r" style="left:1441px;top:824px;width:80px;height:80px;background:#ffffff;border:1px solid #c4c4c4;box-sizing:border-box;"></div><svg class="s" style="left:1441px;top:824px;" width="80" height="80" viewBox="0 0 80 80"><polygon points="17.6,25 43.3,20 62.2,27.6 36.5,30.3" fill="#118f8f"/><polygon points="17.6,25 36.5,30.3 36.5,62 18.4,53.8" fill="#0f8080"/><polygon points="36.5,30.3 62.2,27.6 62.2,56.5 36.5,62" fill="#00dddd"/></svg><div class="r" style="left:1497px;top:886px;width:23px;height:17px;background:#d7d7f7;"></div><svg class="s" style="left:1497px;top:886px;" width="23" height="17" viewBox="0 0 23 17"><rect x="4.8" y="7.8" width="2.5" height="2.5" fill="#000"/><rect x="10.8" y="7.8" width="2.5" height="2.5" fill="#000"/><rect x="15.8" y="7.8" width="2.5" height="2.5" fill="#000"/></svg><div class="t" style="left:1452.00px;top:910.90px;font-size:19px;line-height:21.22px;color:#000;font-weight:400;transform:scaleX(0.9185);">Formen</div><div class="r" style="left:1531px;top:824px;width:80px;height:80px;background:#ffffff;border:1px solid #c4c4c4;box-sizing:border-box;"></div><svg class="s" style="left:1531px;top:824px;" width="80" height="80" viewBox="0 0 80 80"><defs><linearGradient id="sky" x1="0" y1="0" x2="0" y2="1"><stop offset="0" stop-color="#1850c0"/><stop offset="1" stop-color="#90b8e8"/></linearGradient><linearGradient id="hill" x1="0" y1="0" x2="0" y2="1"><stop offset="0" stop-color="#70b040"/><stop offset="1" stop-color="#2a6a1a"/></linearGradient></defs><rect x="15.3" y="17.3" width="48" height="42.5" fill="url(#sky)"/><ellipse cx="28" cy="27" rx="5" ry="2" fill="#fff" fill-opacity="0.8"/><ellipse cx="48" cy="23" rx="6" ry="2.5" fill="#fff" fill-opacity="0.7"/><ellipse cx="52" cy="32" rx="7" ry="2" fill="#fff" fill-opacity="0.7"/><path d="M15.3,42 Q38,33 63.3,40 V59.8 H15.3 Z" fill="url(#hill)"/></svg><div class="t" style="left:1558.00px;top:910.90px;font-size:19px;line-height:21.22px;color:#000;font-weight:400;transform:scaleX(0.8531);">Bild</div><div class="r" style="left:1351px;top:934px;width:80px;height:80px;background:#ffffff;border:1px solid #c4c4c4;box-sizing:border-box;"></div><svg class="s" style="left:1351px;top:934px;" width="80" height="80" viewBox="0 0 80 80"><path d="M39,28.5 L41,33.5 L46,35.5 L41,37.5 L39,42.5 L37,37.5 L32,35.5 L37,33.5 Z" fill="#880000"/><rect x="35.5" y="32" width="7" height="7" fill="#880000"/></svg><div class="t" style="left:1355.30px;top:939.17px;font-size:15.5px;line-height:17.31px;color:#007700;font-weight:700;">K</div><svg class="s" style="left:1354.5px;top:993.5px;" width="11" height="17" viewBox="0 0 11 17"><path d="M1.5,6 Q1.5,2.5 5.5,2.3 Q9.5,2.5 9.5,6 V12.5 Q9.5,16 5.5,16 Q1.5,16 1.5,12.5 Z" fill="#fff" stroke="#000" stroke-width="1.3"/><path d="M1.5,6 Q1.5,2.5 5.5,2.3 V8 H1.5 Z" fill="#000"/><path d="M1.5,8 H9.5" stroke="#000" stroke-width="1.2"/><path d="M5.5,2.3 L4,0.5" stroke="#000" stroke-width="1"/></svg><div class="t" style="left:1363.80px;top:1020.90px;font-size:19px;line-height:21.22px;color:#000;font-weight:400;transform:scaleX(0.9150);">Knoten</div><div class="r" style="left:1441px;top:934px;width:80px;height:80px;background:#ffffff;border:1px solid #c4c4c4;box-sizing:border-box;"></div><svg class="s" style="left:1441px;top:934px;" width="80" height="80" viewBox="0 0 80 80"><path d="M30.6,45 H48.7 M44.6,31.4 Q57,31.4 57,38 Q57,45 48.7,45" stroke="#111" stroke-width="1.4" fill="none"/><circle cx="30.6" cy="45" r="2.3" fill="#880000"/><circle cx="48.7" cy="45" r="2.3" fill="#880000"/><circle cx="44.6" cy="31.4" r="2.3" fill="#880000"/></svg><div class="t" style="left:1445.30px;top:939.17px;font-size:15.5px;line-height:17.31px;color:#007700;font-weight:700;">L</div><svg class="s" style="left:1444.5px;top:993.5px;" width="11" height="17" viewBox="0 0 11 17"><path d="M1.5,6 Q1.5,2.5 5.5,2.3 Q9.5,2.5 9.5,6 V12.5 Q9.5,16 5.5,16 Q1.5,16 1.5,12.5 Z" fill="#fff" stroke="#000" stroke-width="1.3"/><path d="M1.5,6 Q1.5,2.5 5.5,2.3 V8 H1.5 Z" fill="#000"/><path d="M1.5,8 H9.5" stroke="#000" stroke-width="1.2"/><path d="M5.5,2.3 L4,0.5" stroke="#000" stroke-width="1"/></svg><div class="r" style="left:1497px;top:996px;width:23px;height:17px;background:#d7d7f7;"></div><svg class="s" style="left:1497px;top:996px;" width="23" height="17" viewBox="0 0 23 17"><rect x="4.8" y="7.8" width="2.5" height="2.5" fill="#000"/><rect x="10.8" y="7.8" width="2.5" height="2.5" fill="#000"/><rect x="15.8" y="7.8" width="2.5" height="2.5" fill="#000"/></svg><div class="t" style="left:1465.00px;top:1020.90px;font-size:19px;line-height:21.22px;color:#000;font-weight:400;transform:scaleX(0.8450);">Linie</div><div class="r" style="left:1531px;top:934px;width:80px;height:80px;background:#ffffff;border:1px solid #c4c4c4;box-sizing:border-box;"></div><svg class="s" style="left:1531px;top:934px;" width="80" height="80" viewBox="0 0 80 80"><path d="M26.8,32.7 H45.7 Q53.8,32.7 53.8,40 Q53.8,47 45.7,47 H26.8 Z" stroke="#111" stroke-width="1.4" fill="none"/><circle cx="26.8" cy="32.7" r="2.3" fill="#880000"/><circle cx="45.7" cy="32.7" r="2.3" fill="#880000"/><circle cx="26.8" cy="47" r="2.3" fill="#880000"/><circle cx="45.7" cy="47" r="2.3" fill="#880000"/></svg><div class="t" style="left:1535.30px;top:939.17px;font-size:15.5px;line-height:17.31px;color:#007700;font-weight:700;">F</div><svg class="s" style="left:1534.5px;top:993.5px;" width="11" height="17" viewBox="0 0 11 17"><path d="M1.5,6 Q1.5,2.5 5.5,2.3 Q9.5,2.5 9.5,6 V12.5 Q9.5,16 5.5,16 Q1.5,16 1.5,12.5 Z" fill="#fff" stroke="#000" stroke-width="1.3"/><path d="M1.5,6 Q1.5,2.5 5.5,2.3 V8 H1.5 Z" fill="#000"/><path d="M1.5,8 H9.5" stroke="#000" stroke-width="1.2"/><path d="M5.5,2.3 L4,0.5" stroke="#000" stroke-width="1"/></svg><div class="r" style="left:1587px;top:996px;width:23px;height:17px;background:#d7d7f7;"></div><svg class="s" style="left:1587px;top:996px;" width="23" height="17" viewBox="0 0 23 17"><rect x="4.8" y="7.8" width="2.5" height="2.5" fill="#000"/><rect x="10.8" y="7.8" width="2.5" height="2.5" fill="#000"/><rect x="15.8" y="7.8" width="2.5" height="2.5" fill="#000"/></svg><div class="t" style="left:1547.20px;top:1020.90px;font-size:19px;line-height:21.22px;color:#000;font-weight:400;transform:scaleX(0.8439);">Fläche</div><div class="r" style="left:1351px;top:1044px;width:80px;height:80px;background:#ffffff;border:1px solid #c4c4c4;box-sizing:border-box;"></div><svg class="s" style="left:1351px;top:1044px;" width="80" height="80" viewBox="0 0 80 80"><text x="37" y="52" font-size="36" font-family="Liberation Serif" text-anchor="middle" transform="translate(37,0) scale(1.15,1) translate(-37,0)">A</text></svg><div class="t" style="left:1355.30px;top:1049.17px;font-size:15.5px;line-height:17.31px;color:#007700;font-weight:700;">T</div><svg class="s" style="left:1354.5px;top:1103.5px;" width="11" height="17" viewBox="0 0 11 17"><path d="M1.5,6 Q1.5,2.5 5.5,2.3 Q9.5,2.5 9.5,6 V12.5 Q9.5,16 5.5,16 Q1.5,16 1.5,12.5 Z" fill="#fff" stroke="#000" stroke-width="1.3"/><path d="M1.5,6 Q1.5,2.5 5.5,2.3 V8 H1.5 Z" fill="#000"/><path d="M1.5,8 H9.5" stroke="#000" stroke-width="1.2"/><path d="M5.5,2.3 L4,0.5" stroke="#000" stroke-width="1"/></svg><div class="r" style="left:1441px;top:1044px;width:80px;height:80px;background:#ffffff;border:1px solid #c4c4c4;box-sizing:border-box;"></div><svg class="s" style="left:1441px;top:1044px;" width="80" height="80" viewBox="0 0 80 80"><path d="M18,42 H57.3 M18,36 V48 M57.3,36 V48" stroke="#000" stroke-width="1.6"/><polygon points="18,42 24,39 24,45" fill="#000"/><polygon points="57.3,42 51.3,39 51.3,45" fill="#000"/></svg><div class="t" style="left:1445.30px;top:1049.17px;font-size:15.5px;line-height:17.31px;color:#007700;font-weight:700;transform:scaleX(1.0167);">HVPZ</div><svg class="s" style="left:1444.5px;top:1103.5px;" width="11" height="17" viewBox="0 0 11 17"><path d="M1.5,6 Q1.5,2.5 5.5,2.3 Q9.5,2.5 9.5,6 V12.5 Q9.5,16 5.5,16 Q1.5,16 1.5,12.5 Z" fill="#fff" stroke="#000" stroke-width="1.3"/><path d="M1.5,6 Q1.5,2.5 5.5,2.3 V8 H1.5 Z" fill="#000"/><path d="M1.5,8 H9.5" stroke="#000" stroke-width="1.2"/><path d="M5.5,2.3 L4,0.5" stroke="#000" stroke-width="1"/></svg><div class="r" style="left:1497px;top:1106px;width:23px;height:17px;background:#d7d7f7;"></div><svg class="s" style="left:1497px;top:1106px;" width="23" height="17" viewBox="0 0 23 17"><rect x="4.8" y="7.8" width="2.5" height="2.5" fill="#000"/><rect x="10.8" y="7.8" width="2.5" height="2.5" fill="#000"/><rect x="15.8" y="7.8" width="2.5" height="2.5" fill="#000"/></svg><div class="r" style="left:1531px;top:1044px;width:80px;height:80px;background:#ffffff;border:1px solid #c4c4c4;box-sizing:border-box;"></div><svg class="s" style="left:1531px;top:1044px;" width="80" height="80" viewBox="0 0 80 80"><path d="M16,44 H60" stroke="#000" stroke-width="2.5"/><polygon points="20,40 28,33 36,40" fill="#000"/><polygon points="42,40 50,33 58,40" fill="#000"/></svg><svg class="s" style="left:1534.5px;top:1103.5px;" width="11" height="17" viewBox="0 0 11 17"><path d="M1.5,6 Q1.5,2.5 5.5,2.3 Q9.5,2.5 9.5,6 V12.5 Q9.5,16 5.5,16 Q1.5,16 1.5,12.5 Z" fill="#fff" stroke="#000" stroke-width="1.3"/><path d="M1.5,6 Q1.5,2.5 5.5,2.3 V8 H1.5 Z" fill="#000"/><path d="M1.5,8 H9.5" stroke="#000" stroke-width="1.2"/><path d="M5.5,2.3 L4,0.5" stroke="#000" stroke-width="1"/></svg><div class="r" style="left:1587px;top:1106px;width:23px;height:17px;background:#d7d7f7;"></div><svg class="s" style="left:1587px;top:1106px;" width="23" height="17" viewBox="0 0 23 17"><rect x="4.8" y="7.8" width="2.5" height="2.5" fill="#000"/><rect x="10.8" y="7.8" width="2.5" height="2.5" fill="#000"/><rect x="15.8" y="7.8" width="2.5" height="2.5" fill="#000"/></svg></div></div><div class="r" style="left:1566px;top:1129px;width:68px;height:19px;background:#e1e1e1;border:1px solid #adadad;box-sizing:border-box;"></div><div class="t" style="left:1570.00px;top:1131.27px;font-size:15.5px;line-height:17.31px;color:#000;font-weight:400;transform:scaleX(0.9828);">Mod GR</div><div class="r" style="left:1644px;top:1129px;width:20px;height:19px;background:#e1e1e1;border:1px solid #adadad;box-sizing:border-box;"></div><div class="t" style="left:1648.00px;top:1131.27px;font-size:15.5px;line-height:17.31px;color:#000;font-weight:400;transform:scaleX(0.9231);">M</div><div class="r" style="left:0px;top:1154px;width:1670px;height:1px;background:#ffffff;"></div><div class="t" style="left:1214.00px;top:1169.21px;font-size:17px;line-height:18.99px;color:#000;font-weight:400;transform:scaleX(0.9327);">Z Grundplatte</div><div class="r" style="left:1317px;top:1164px;width:62px;height:26px;background:#ffffff;border:1px solid #7a7a7a;box-sizing:border-box;"></div><div class="t" style="left:1321.00px;top:1169.21px;font-size:17px;line-height:18.99px;color:#000;font-weight:400;transform:scaleX(0.9302);">0.000</div><div class="t" style="left:1404.00px;top:1168.91px;font-size:17px;line-height:18.99px;color:#aa00aa;font-weight:400;">L</div><div class="r" style="left:1423px;top:1164px;width:62px;height:26px;background:#f0f0f0;border:1px solid #cccccc;box-sizing:border-box;"></div><div class="t" style="left:1494.00px;top:1168.91px;font-size:17px;line-height:18.99px;color:#000088;font-weight:400;">B</div><div class="r" style="left:1514px;top:1164px;width:62px;height:26px;background:#f0f0f0;border:1px solid #cccccc;box-sizing:border-box;"></div><div class="t" style="left:1583.00px;top:1168.91px;font-size:17px;line-height:18.99px;color:#007700;font-weight:400;transform:scaleX(0.9167);">H</div><div class="r" style="left:1604px;top:1164px;width:62px;height:26px;background:#f0f0f0;border:1px solid #cccccc;box-sizing:border-box;"></div><svg class="s" style="left:0px;top:0px;" width="700" height="560" viewBox="0 0 700 560"><path d="M631.5,516.5 L401,118.5" stroke="#ff0000" stroke-width="3"/><polygon points="393.8,104.8 409.5,114.5 394.9,123.2" fill="#ff0000"/></svg></div><div class="win" style="left:1706px;top:0;width:1081px;height:1200px"><div style="position:absolute;left:1px;top:8px"><div class="r" style="left:-1px;top:-5px;width:1672px;height:1210px;background:#0078d7;"></div><div class="r" style="left:0px;top:0px;width:1670px;height:1px;background:#1a86dc;"></div><div class="r" style="left:0px;top:45px;width:1670px;height:1160px;background:#f0f0f0;"></div><div class="r" style="left:0px;top:45px;width:1670px;height:30px;background:#ffffff;"></div><div class="r" style="left:0px;top:76px;width:1670px;height:1px;background:#ffffff;"></div><div class="r" style="left:0px;top:115px;width:1670px;height:1px;background:#b0b0b0;"></div><div class="r" style="left:0px;top:116px;width:1670px;height:1px;background:#ffffff;"></div><div class="r" style="left:0px;top:161px;width:1670px;height:1px;background:#a8a8a8;"></div><svg class="s" style="left:10.5px;top:13.5px;" width="26" height="18" viewBox="0 0 26 18"><rect x="0.5" y="6.5" width="10" height="10" fill="#ff00ff" stroke="#000" stroke-width="1"/><rect x="6.5" y="0.5" width="10" height="10" fill="#0000ff" stroke="#000" stroke-width="1"/><rect x="14.5" y="4.5" width="10" height="10" fill="#00ffff" stroke="#000" stroke-width="1"/><rect x="2" y="9" width="1" height="6" fill="#fff"/><rect x="8" y="3" width="1" height="5" fill="#fff"/><rect x="16" y="7" width="1" height="6" fill="#fff"/></svg><div class="t" style="left:40.70px;top:12.61px;font-size:19px;line-height:21.22px;color:#ffffff;font-weight:400;transform:scaleX(0.9122);">revit familie.lxz - Lexocad</div><div class="r" style="left:1488px;top:22px;width:15px;height:1px;background:#ffffff;"></div><div class="r" style="left:1557px;top:15px;width:15px;height:15px;border:1px solid #ffffff;box-sizing:border-box;"></div><svg class="s" style="left:1628px;top:15px;" width="15" height="15" viewBox="0 0 15 15"><path d="M0.5,0.5 L14.5,14.5 M14.5,0.5 L0.5,14.5" stroke="#fff" stroke-width="1.2"/></svg><div class="t" style="left:9.30px;top:51.88px;font-size:18.7px;line-height:20.89px;color:#000;font-weight:400;transform:scaleX(0.8864);">Datei</div><div class="t" style="left:65.80px;top:51.88px;font-size:18.7px;line-height:20.89px;color:#000;font-weight:400;transform:scaleX(0.9056);">Bearbeiten</div><div class="t" style="left:164.20px;top:51.88px;font-size:18.7px;line-height:20.89px;color:#000;font-weight:400;transform:scaleX(0.9162);">Anzeige</div><div class="t" style="left:244.00px;top:51.88px;font-size:18.7px;line-height:20.89px;color:#000;font-weight:400;transform:scaleX(0.8578);">Fenster</div><div class="t" style="left:317.40px;top:51.88px;font-size:18.7px;line-height:20.89px;color:#000;font-weight:400;transform:scaleX(0.9377);">Dialog</div><div class="t" style="left:385.10px;top:51.88px;font-size:18.7px;line-height:20.89px;color:#000;font-weight:400;transform:scaleX(0.9098);">Einstellungen</div><div class="t" style="left:505.00px;top:51.88px;font-size:18.7px;line-height:20.89px;color:#000;font-weight:400;transform:scaleX(0.8182);">Extra</div><div class="t" style="left:559.00px;top:51.88px;font-size:18.7px;line-height:20.89px;color:#000;font-weight:400;transform:scaleX(0.9405);">Hilfe</div><div class="r" style="left:370px;top:78px;width:37px;height:35px;background:#cce4f7;border:1px solid #99d1ff;box-sizing:border-box;"></div><svg class="s" style="left:9.5px;top:85.0px;" width="21" height="21" viewBox="0 0 21 21"><path d="M1,4 Q10,0 20,4 L19,14 Q16,19 11,21 Q5,19 2,14 Z" fill="#55d5d5"/><path d="M12,4 L20,4 L19,14 Q16,19 12,21 Z" fill="#11ffff"/><path d="M1,4 Q10,0 20,4 L12,6 Z" fill="#66c8c8"/></svg><svg class="s" style="left:41.0px;top:92.5px;" width="12" height="7" viewBox="0 0 12 7"><polygon points="0,0 12,0 6,6" fill="#000"/></svg><svg class="s" style="left:64.5px;top:86.5px;" width="20" height="19" viewBox="0 0 20 19"><ellipse cx="10" cy="6" rx="9" ry="2.5" fill="#00ffff"/><path d="M1.5,6 L1.5,15 L10,18 L18.5,15 L18.5,6 M10,8.5 L10,18 M1.5,15 L10,12 L18.5,15" stroke="#000" stroke-width="1.3" fill="none"/><text x="7" y="6" font-size="7" font-weight="bold" font-family="Liberation Sans">z</text></svg><div class="r" style="left:135px;top:81px;width:1px;height:30px;background:#d5d5d5;"></div><div class="r" style="left:148px;top:86px;width:21px;height:21px;background:#d0d0d0;"></div><svg class="s" style="left:151.0px;top:89.0px;" width="15" height="15" viewBox="0 0 15 15"><polygon points="1,4 8,1 14,4 14,11 8,14 1,11" fill="#909090"/><polygon points="1,4 8,1 14,4 8,7" fill="#a8a8a8"/><polygon points="8,7 14,4 14,11 8,14" fill="#808080"/></svg><svg class="s" style="left:186.5px;top:86.5px;" width="18" height="18" viewBox="0 0 18 18"><polygon points="1,1 9,4 9,17 1,13" fill="none" stroke="#ff0000" stroke-width="1.2"/><polygon points="4,6 12,3 17,2 17,8 9,11 4,11" fill="#00aa00"/><polygon points="12,3 17,2 17,8 12,9" fill="#007700"/></svg><svg class="s" style="left:225.0px;top:88.5px;" width="14" height="14" viewBox="0 0 14 14"><path d="M1,4 L10,4 L10,13 L1,13 Z M4,1 L13,1 L13,10 L4,10 Z M1,4 L4,1 M10,4 L13,1 M10,13 L13,10 M1,13 L4,10" stroke="#555" stroke-width="1.1" fill="none"/></svg><div class="r" style="left:255px;top:81px;width:1px;height:30px;background:#d5d5d5;"></div><svg class="s" style="left:271.0px;top:88.5px;" width="14" height="14" viewBox="0 0 14 14"><polygon points="1,4 10,4 10,13 1,13" fill="#44ee44" /><polygon points="1,4 4,1 13,1 10,4" fill="#eeee00" /><polygon points="10,4 13,1 13,10 10,13" fill="#4444ff" /></svg><svg class="s" style="left:309.0px;top:88.5px;" width="14" height="14" viewBox="0 0 14 14"><polygon points="1,4 10,4 10,13 1,13" fill="#44ee44" stroke="#ff0000" stroke-width="1.3"/><polygon points="1,4 4,1 13,1 10,4" fill="#eeee00" stroke="#ff0000" stroke-width="1.3"/><polygon points="10,4 13,1 13,10 10,13" fill="#4444ff" stroke="#ff0000" stroke-width="1.3"/></svg><svg class="s" style="left:345.0px;top:88.5px;" width="14" height="14" viewBox="0 0 14 14"><polygon points="1,4 10,4 10,13 1,13" fill="#44ee44" stroke="#000000" stroke-width="1.3"/><polygon points="1,4 4,1 13,1 10,4" fill="#eeee00" stroke="#000000" stroke-width="1.3"/><polygon points="10,4 13,1 13,10 10,13" fill="#4444ff" stroke="#000000" stroke-width="1.3"/></svg><svg class="s" style="left:382.0px;top:88.5px;" width="14" height="14" viewBox="0 0 14 14"><defs><pattern id="hp" width="2" height="2" patternUnits="userSpaceOnUse"><rect width="1" height="1" fill="#44ee44"/><rect x="1" y="1" width="1" height="1" fill="#44ee44"/></pattern><pattern id="hb" width="2" height="2" patternUnits="userSpaceOnUse"><rect width="1" height="1" fill="#5555ff"/><rect x="1" y="1" width="1" height="1" fill="#5555ff"/></pattern><pattern id="hy" width="2" height="2" patternUnits="userSpaceOnUse"><rect width="1" height="1" fill="#eeee44"/><rect x="1" y="1" width="1" height="1" fill="#eeee44"/></pattern></defs><polygon points="1,4 10,4 10,13 1,13" fill="url(#hp)"/><polygon points="1,4 4,1 13,1 10,4" fill="url(#hy)"/><polygon points="10,4 13,1 13,10 10,13" fill="url(#hb)"/></svg><div class="r" style="left:412px;top:81px;width:1px;height:30px;background:#d5d5d5;"></div><svg class="s" style="left:426.5px;top:87.0px;" width="17" height="17" viewBox="0 0 17 17"><path d="M1,1 L1,16 L16,16 L11,1 Z M1,8 L11,1 M1,12 L16,16" stroke="#008040" stroke-width="1.3" fill="none"/></svg><svg class="s" style="left:463.5px;top:90.5px;" width="16" height="12" viewBox="0 0 16 12"><polygon points="0,6 5,1 15,4 10,11 4,10" fill="#e8a020"/><polygon points="0,6 4,10 10,11 5,7" fill="#a06010"/></svg><div class="r" style="left:495px;top:81px;width:1px;height:30px;background:#d5d5d5;"></div><svg class="s" style="left:511.5px;top:86.5px;" width="13" height="18" viewBox="0 0 13 18"><path d="M6.5,0.7 C10.5,0.7 12.3,6 12.3,10.5 C12.3,14.5 10,17.3 6.5,17.3 C3,17.3 0.7,14.5 0.7,10.5 C0.7,6 2.5,0.7 6.5,0.7 Z" fill="#ffee22" stroke="#704010" stroke-width="1"/><path d="M1.5,6.5 H11.5 M0.8,11.5 H12.2" stroke="#a02020" stroke-width="1.2"/></svg><div class="t" style="left:550.00px;top:85.20px;font-size:20px;line-height:22.34px;color:#0000ff;font-weight:400;transform:scaleX(0.8077);">E</div><svg class="s" style="left:585.5px;top:86.0px;" width="15" height="19" viewBox="0 0 15 19"><path d="M1,3 H14 Q10,9.5 14,16.5 H1 Q5,9.5 1,3 Z" fill="#00ee00" stroke="#008800" stroke-width="0.8"/><path d="M7.5,0 V19" stroke="#000" stroke-width="1.3"/></svg><div class="r" style="left:615px;top:81px;width:1px;height:30px;background:#d5d5d5;"></div><svg class="s" style="left:630.0px;top:87.5px;" width="16" height="16" viewBox="0 0 16 16"><circle cx="6.5" cy="6.5" r="5.5" fill="none" stroke="#000" stroke-width="1.5"/><path d="M10.5,10.5 L15,15" stroke="#000" stroke-width="2.2"/><path d="M4.5,3.5 H7.5 L9,5 V9.5 H4.5 Z" fill="none" stroke="#a00000" stroke-width="1"/></svg><svg class="s" style="left:659.5px;top:92.5px;" width="12" height="7" viewBox="0 0 12 7"><polygon points="0,0 12,0 6,6" fill="#000"/></svg><div class="r" style="left:679px;top:81px;width:1px;height:30px;background:#d5d5d5;"></div><svg class="s" style="left:694.5px;top:88.5px;" width="14" height="14" viewBox="0 0 14 14"><path d="M1,1 L13,13 M13,1 L1,13" stroke="#ee0000" stroke-width="1.8"/></svg><svg class="s" style="left:730.5px;top:88.0px;" width="16" height="15" viewBox="0 0 16 15"><circle cx="4" cy="4" r="3" fill="none" stroke="#333" stroke-width="1"/><circle cx="11" cy="11" r="3" fill="none" stroke="#333" stroke-width="1"/><path d="M8,3 L12,6 M12,3 V6 H9" stroke="#333" stroke-width="1" fill="none"/></svg><svg class="s" style="left:768.5px;top:87.5px;" width="16" height="16" viewBox="0 0 16 16"><path d="M8,0.5 V15.5 M0.5,8 H15.5 M5.5,3 L8,0.5 L10.5,3 M5.5,13 L8,15.5 L10.5,13 M3,5.5 L0.5,8 L3,10.5 M13,5.5 L15.5,8 L13,10.5" stroke="#555" stroke-width="1.5" fill="none"/></svg><svg class="s" style="left:806.0px;top:88.5px;" width="14" height="14" viewBox="0 0 14 14"><path d="M7.5,2.5 A5.5,5.5 0 1 1 2.5,6" stroke="#008800" stroke-width="2.2" fill="none"/><path d="M6,0 L10,2.5 L6,5 Z" fill="#008800"/><circle cx="7" cy="8" r="1.2" fill="#008800"/></svg><svg class="s" style="left:843.0px;top:88.5px;" width="14" height="14" viewBox="0 0 14 14"><path d="M7.5,2.5 A5.5,5.5 0 1 1 2.5,6" stroke="#ee0000" stroke-width="2.2" fill="none"/><path d="M6,0 L10,2.5 L6,5 Z" fill="#ee0000"/><circle cx="7" cy="8" r="1.2" fill="#ee0000"/></svg><svg class="s" style="left:880.0px;top:88.5px;" width="14" height="14" viewBox="0 0 14 14"><path d="M7.5,2.5 A5.5,5.5 0 1 1 2.5,6" stroke="#000099" stroke-width="2.2" fill="none"/><path d="M6,0 L10,2.5 L6,5 Z" fill="#000099"/><circle cx="7" cy="8" r="1.2" fill="#000099"/></svg><svg class="s" style="left:914.0px;top:87.5px;" width="18" height="17" viewBox="0 0 18 17"><circle cx="10" cy="8" r="7.5" fill="#d8d8d8" stroke="#aaa" stroke-width="1"/><ellipse cx="11" cy="15.5" rx="6" ry="1.5" fill="#ccc"/><path d="M1,8 H8 M5.5,5.5 L8,8 L5.5,10.5" stroke="#777" stroke-width="1.5" fill="none"/></svg><svg class="s" style="left:945.0px;top:92.5px;" width="12" height="7" viewBox="0 0 12 7"><polygon points="0,0 12,0 6,6" fill="#777"/></svg><div class="r" style="left:965px;top:81px;width:1px;height:30px;background:#d5d5d5;"></div><svg class="s" style="left:979.5px;top:87.8px;" width="17" height="15" viewBox="0 0 17 15"><rect x="1.5" y="1.5" width="8" height="7" fill="none" stroke="#ee2222" stroke-width="1"/><rect x="6.5" y="5.5" width="8" height="8" fill="none" stroke="#ee2222" stroke-width="1"/><rect x="0" y="0" width="3" height="3"/><rect x="13" y="0" width="3" height="3"/><rect x="0" y="12" width="3" height="3"/><rect x="13" y="12" width="3" height="3"/></svg><svg class="s" style="left:1016.5px;top:87.8px;" width="17" height="15" viewBox="0 0 17 15"><rect x="1.5" y="1.5" width="8" height="7" fill="none" stroke="#000099" stroke-width="1"/><rect x="6.5" y="5.5" width="8" height="8" fill="none" stroke="#000099" stroke-width="1"/><rect x="0" y="0" width="3" height="3"/><rect x="13" y="0" width="3" height="3"/><rect x="0" y="12" width="3" height="3"/><rect x="13" y="12" width="3" height="3"/></svg><div class="r" style="left:1085px;top:81px;width:1px;height:30px;background:#d5d5d5;"></div><svg class="s" style="left:1102.0px;top:88.5px;" width="12" height="14" viewBox="0 0 12 14"><path d="M6,1 A5,5 0 0 1 10,9 L8.5,11 H3.5 L2,9 A5,5 0 0 1 6,1 Z" fill="#ffff66" stroke="#333" stroke-width="0.8"/><rect x="4" y="11" width="4" height="2.5" fill="#333"/></svg><svg class="s" style="left:1138.0px;top:88.5px;" width="12" height="14" viewBox="0 0 12 14"><path d="M6,1 A5,5 0 0 1 10,9 L8.5,11 H3.5 L2,9 A5,5 0 0 1 6,1 Z" fill="#999999" stroke="#333" stroke-width="0.8"/><rect x="4" y="11" width="4" height="2.5" fill="#333"/></svg><svg class="s" style="left:1177.0px;top:88.5px;" width="12" height="14" viewBox="0 0 12 14"><path d="M6,1 A5,5 0 0 1 10,9 L8.5,11 H3.5 L2,9 A5,5 0 0 1 6,1 Z" fill="#226f7f" stroke="#333" stroke-width="0.8"/><rect x="4" y="11" width="4" height="2.5" fill="#333"/></svg><div class="t" style="left:1189.00px;top:95.75px;font-size:10px;line-height:11.17px;color:#000;font-weight:400;">i</div><div class="r" style="left:1205px;top:81px;width:1px;height:30px;background:#d5d5d5;"></div><svg class="s" style="left:1218.0px;top:89.5px;" width="20" height="12" viewBox="0 0 20 12"><circle cx="6" cy="6" r="5.3" fill="#d0d0d0" stroke="#aaa"/><circle cx="13" cy="6" r="5.3" fill="#d0d0d0" stroke="#aaa"/></svg><svg class="s" style="left:1249.0px;top:92.5px;" width="12" height="7" viewBox="0 0 12 7"><polygon points="0,0 12,0 6,6" fill="#777"/></svg><svg class="s" style="left:1277.5px;top:87.5px;" width="10" height="16" viewBox="0 0 10 16"><path d="M2,0 L6,10 M8,0 L4,10" stroke="#555" stroke-width="1"/><circle cx="3" cy="13" r="2.2" fill="none" stroke="#555"/><circle cx="7" cy="13" r="2.2" fill="none" stroke="#555"/></svg><svg class="s" style="left:1304.5px;top:92.5px;" width="12" height="7" viewBox="0 0 12 7"><polygon points="0,0 12,0 6,6" fill="#777"/></svg><div class="r" style="left:1324px;top:81px;width:1px;height:30px;background:#d5d5d5;"></div><svg class="s" style="left:1338.5px;top:86.0px;" width="18" height="18" viewBox="0 0 18 18"><path d="M3,15 V3" stroke="#0000ff" stroke-width="2"/><polygon points="0,5 3,0 6,5" fill="#0000ff"/><path d="M3,15 H14" stroke="#ff0000" stroke-width="2"/><polygon points="13,12 18,15 13,18" fill="#ff0000"/><circle cx="3" cy="15" r="2.2" fill="#00aa44"/></svg><svg class="s" style="left:1376.0px;top:87.5px;" width="16" height="15" viewBox="0 0 16 15"><path d="M2,4 H6 V14 H0 V8 Z M10,4 H14 L16,8 V14 H10 Z M6,7 H10 V11 H6 Z M3,0 H6 V4 H3 Z M10,0 H13 V4 H10 Z" fill="#000"/><circle cx="3" cy="11" r="1.2" fill="#fff"/><circle cx="13" cy="11" r="1.2" fill="#fff"/></svg><svg class="s" style="left:1412.5px;top:87.0px;" width="17" height="16" viewBox="0 0 17 16"><path d="M1,1 H16 V6 H6 V15 H1 Z" fill="#f0b030" stroke="#805000" stroke-width="0.8"/></svg><svg class="s" style="left:1446.0px;top:88.0px;" width="23" height="14" viewBox="0 0 23 14"><path d="M2,3 L9,12 L20,2" stroke="#3355bb" stroke-width="2" fill="none"/><path d="M9,12 L20,2" stroke="#9933aa" stroke-width="2"/><polygon points="0,0 6,0 1,6" fill="#3355bb"/><polygon points="16,0 22,0 22,6" fill="#9933aa"/></svg><div class="r" style="left:1481px;top:81px;width:1px;height:30px;background:#d5d5d5;"></div><svg class="s" style="left:1531.5px;top:85.5px;" width="19" height="19" viewBox="0 0 19 19"><path d="M4,4 L15,15 M15,4 L4,15" stroke="#000" stroke-width="1.5"/><circle cx="4" cy="4" r="3" fill="none" stroke="#000"/><circle cx="15" cy="4" r="3" fill="none" stroke="#000"/><circle cx="4" cy="15" r="3" fill="none" stroke="#000"/><circle cx="15" cy="15" r="3" fill="none" stroke="#000"/><rect x="7" y="7" width="5" height="5"/></svg><svg class="s" style="left:1567.5px;top:84.0px;" width="22" height="20" viewBox="0 0 22 20"><path d="M1,3 H17" stroke="#000" stroke-width="1.5"/><polygon points="16,0 21,3 16,6" fill="#000"/><rect x="1" y="10" width="16" height="9" rx="2" fill="none" stroke="#000" stroke-width="1.3"/><circle cx="8" cy="14.5" r="3" fill="none" stroke="#000"/></svg><svg class="s" style="left:1603.5px;top:84.5px;" width="23" height="19" viewBox="0 0 23 19"><path d="M3,3 H17" stroke="#000" stroke-width="1.5"/><polygon points="16,0 21,3 16,6" fill="#000"/><path d="M1,16 V12 L6,11 L9,8 H15 L19,11 L22,12 V16 Z" fill="#0000ee"/><circle cx="6" cy="16" r="2.2" fill="#fff" stroke="#000"/><circle cx="17" cy="16" r="2.2" fill="#fff" stroke="#000"/></svg><svg class="s" style="left:1655.0px;top:90.0px;" width="13" height="10" viewBox="0 0 13 10"><path d="M1,1 L5,5 L1,9 M7,1 L11,5 L7,9" stroke="#333" stroke-width="1.2" fill="none"/></svg><div class="t" style="left:14.90px;top:129.93px;font-size:17.2px;line-height:19.21px;color:#000;font-weight:700;transform:scaleX(0.9895);">Version 30</div><div class="t" style="left:106.20px;top:129.93px;font-size:17.2px;line-height:19.21px;color:#8a8a8a;font-weight:400;transform:scaleX(0.9440);">(2022)</div><div class="r" style="left:174px;top:126px;width:135px;height:25px;background:#e1e1e1;border:1px solid #adadad;box-sizing:border-box;"></div><div class="t" style="left:177.90px;top:130.57px;font-size:16.5px;line-height:18.43px;color:#000;font-weight:400;transform:scaleX(0.9768);">Ingenieur</div><svg class="s" style="left:290px;top:136px;" width="11" height="6" viewBox="0 0 11 6"><path d="M0.5,0.5 L5.5,5.5 L10.5,0.5" stroke="#333" stroke-width="1.2" fill="none"/></svg><svg class="s" style="left:309.7px;top:126.3px;" width="23" height="23" viewBox="0 0 23 23"><circle cx="11.5" cy="11.5" r="11.5" fill="#93d295"/></svg><div class="t" style="left:315.00px;top:130.37px;font-size:15.5px;line-height:17.31px;color:#ffffff;font-weight:700;transform:scaleX(0.9538);">M</div><div class="r" style="left:352px;top:128px;width:20px;height:20px;background:#ffffff;border:2px solid #333333;box-sizing:border-box;"></div><div class="t" style="left:380.70px;top:130.37px;font-size:16.5px;line-height:18.43px;color:#0000ff;font-weight:400;transform:scaleX(0.6471);">"E</div><svg class="s" style="left:392.7px;top:126.3px;" width="23" height="23" viewBox="0 0 23 23"><circle cx="11.5" cy="11.5" r="11.5" fill="#93d295"/></svg><div class="t" style="left:398.00px;top:130.37px;font-size:15.5px;line-height:17.31px;color:#ffffff;font-weight:700;transform:scaleX(0.9538);">M</div><div class="r" style="left:494px;top:128px;width:20px;height:20px;background:#ffffff;border:1px solid #bcbcbc;box-sizing:border-box;"></div><svg class="s" style="left:494px;top:128px;" width="20" height="20" viewBox="0 0 20 20"><path d="M4,10 L8,14 L16,5.5" stroke="#c4c4c4" stroke-width="2" fill="none"/></svg><div style="position:absolute;left:520px;top:120px;width:35px;height:35px;overflow:hidden"><div class="t" style="left:2.40px;top:10.12px;font-size:17px;line-height:18.99px;color:#7a7a7a;font-weight:400;transform:scaleX(0.9268);">Texte</div></div><div style="position:absolute;left:635px;top:126px;width:62px;height:25px;overflow:hidden"><div class="r" style="left:0px;top:0px;width:70px;height:25px;background:#e1e1e1;border:1px solid #adadad;box-sizing:border-box;"></div><div class="t" style="left:4.30px;top:4.57px;font-size:16.5px;line-height:18.43px;color:#000;font-weight:400;transform:scaleX(0.9250);">Farbe Stell</div></div><svg class="s" style="left:746px;top:127px;" width="117" height="23" viewBox="0 0 117 23"><rect x="1.75" y="1.75" width="25.5" height="19.5" fill="#cce4f7" stroke="#000" stroke-width="1.6"/><rect x="30.75" y="1.75" width="25.5" height="19.5" fill="none" stroke="#000" stroke-width="1.6"/><path d="M43.5,1.75 V21.25" stroke="#000" stroke-width="1.6"/><rect x="59.75" y="1.75" width="25.5" height="19.5" fill="none" stroke="#000" stroke-width="1.6"/><path d="M73,1.75 V21.25 M59.75,11.5 H73" stroke="#000" stroke-width="1.6"/><rect x="88.75" y="1.75" width="25.5" height="19.5" fill="none" stroke="#000" stroke-width="1.6"/><path d="M101.75,1.75 V21.25 M88.75,11.5 H114.25" stroke="#000" stroke-width="1.6"/></svg><div class="r" style="left:883px;top:129px;width:20px;height:20px;background:#d9d9d9;border:1px solid #bcbcbc;box-sizing:border-box;"></div><svg class="s" style="left:887px;top:131px;" width="12" height="16" viewBox="0 0 12 16"><path d="M3,7 V4.5 A3,3 0 0 1 9,4.5 V7" stroke="#1a3a8a" stroke-width="1.6" fill="none"/><rect x="1" y="7" width="10" height="8" fill="#1a3a8a"/><path d="M1,9.5 H11 M1,12 H11" stroke="#00aaaa" stroke-width="1.2"/></svg><div class="t" style="left:913.00px;top:130.87px;font-size:16.5px;line-height:18.43px;color:#000;font-weight:400;transform:scaleX(0.9318);">MultiGeo</div><div class="r" style="left:995px;top:128px;width:20px;height:20px;background:#ffffff;border:2px solid #333333;box-sizing:border-box;"></div><svg class="s" style="left:995px;top:128px;" width="20" height="20" viewBox="0 0 20 20"><path d="M4,10 L8,14 L16,5.5" stroke="#333333" stroke-width="2" fill="none"/></svg><div class="t" style="left:1023.00px;top:130.87px;font-size:16.5px;line-height:18.43px;color:#000;font-weight:400;transform:scaleX(0.9255);">Versatz</div><div class="r" style="left:1099px;top:128px;width:20px;height:20px;background:#ffffff;border:2px solid #333333;box-sizing:border-box;"></div><svg class="s" style="left:1099px;top:128px;" width="20" height="20" viewBox="0 0 20 20"><path d="M4,10 L8,14 L16,5.5" stroke="#333333" stroke-width="2" fill="none"/></svg><div class="t" style="left:1127.00px;top:130.87px;font-size:16.5px;line-height:18.43px;color:#000;font-weight:400;transform:scaleX(0.8182);">BB</div><div class="r" style="left:1170px;top:129px;width:20px;height:20px;background:#ffffff;border:2px solid #333333;box-sizing:border-box;"></div><svg class="s" style="left:1170px;top:129px;" width="20" height="20" viewBox="0 0 20 20"><path d="M4,10 L8,14 L16,5.5" stroke="#333333" stroke-width="2" fill="none"/></svg><svg class="s" style="left:1198px;top:130px;" width="16" height="17" viewBox="0 0 16 17"><path d="M1,3 H12 L15,6 V16 H3 V6" fill="#e0e0e0" stroke="#000" stroke-width="1"/><rect x="0" y="2" width="10" height="4" fill="#ff9900" stroke="#000" stroke-width="0.8"/><path d="M6,14 L9,9 L13,13" stroke="#ff9900" stroke-width="1.3" fill="none"/></svg><div class="r" style="left:1251px;top:128px;width:20px;height:20px;background:#ffffff;border:2px solid #333333;box-sizing:border-box;"></div><svg class="s" style="left:1251px;top:128px;" width="20" height="20" viewBox="0 0 20 20"><path d="M4,10 L8,14 L16,5.5" stroke="#333333" stroke-width="2" fill="none"/></svg><div class="t" style="left:1279.20px;top:130.87px;font-size:16.5px;line-height:18.43px;color:#000;font-weight:400;transform:scaleX(0.9107);">Ime</div><div class="r" style="left:1390px;top:126px;width:62px;height:25px;background:#e1e1e1;border:1px solid #adadad;box-sizing:border-box;"></div><div class="t" style="left:1394.00px;top:130.57px;font-size:16.5px;line-height:18.43px;color:#000;font-weight:400;transform:scaleX(0.9286);">m</div><svg class="s" style="left:1432px;top:136px;" width="11" height="6" viewBox="0 0 11 6"><path d="M0.5,0.5 L5.5,5.5 L10.5,0.5" stroke="#333" stroke-width="1.2" fill="none"/></svg><div class="r" style="left:1454px;top:126px;width:62px;height:25px;background:#e1e1e1;border:1px solid #adadad;box-sizing:border-box;"></div><div class="t" style="left:1458.00px;top:130.57px;font-size:16.5px;line-height:18.43px;color:#000;font-weight:400;transform:scaleX(0.9286);">deg</div><svg class="s" style="left:1497px;top:136px;" width="11" height="6" viewBox="0 0 11 6"><path d="M0.5,0.5 L5.5,5.5 L10.5,0.5" stroke="#333" stroke-width="1.2" fill="none"/></svg><div class="r" style="left:1518px;top:126px;width:52px;height:25px;background:#e1e1e1;border:1px solid #adadad;box-sizing:border-box;"></div><div class="t" style="left:1522.00px;top:130.57px;font-size:16.5px;line-height:18.43px;color:#000;font-weight:400;">t</div><svg class="s" style="left:1551px;top:136px;" width="11" height="6" viewBox="0 0 11 6"><path d="M0.5,0.5 L5.5,5.5 L10.5,0.5" stroke="#333" stroke-width="1.2" fill="none"/></svg><svg class="s" style="left:1585px;top:131px;" width="17" height="18" viewBox="0 0 17 18"><rect x="0.5" y="11.5" width="6" height="5" fill="#ffff44" stroke="#000"/><path d="M6.5,11.5 L11,7 M0.5,11.5 L5,7 H11 V12 L6.5,16.5" stroke="#000" fill="none"/><path d="M11,1 V11 M6,6 H16 M9,3 L11,1 L13,3 M14,4 L16,6 L14,8" stroke="#000" stroke-width="1" fill="none"/></svg><div class="r" style="left:1606px;top:126px;width:60px;height:26px;background:#ffffff;border:1px solid #7a7a7a;box-sizing:border-box;"></div><div class="t" style="left:1609.00px;top:130.92px;font-size:17px;line-height:18.99px;color:#000;font-weight:400;transform:scaleX(0.9302);">0.200</div><div class="r" style="left:0px;top:163px;width:282px;height:28px;background:#d9d9d9;border:1px solid #ababab;box-sizing:border-box;"></div><div class="t" style="left:5.40px;top:169.33px;font-size:18.2px;line-height:20.33px;color:#000;font-weight:400;transform:scaleX(0.9022);">Layer</div><svg class="s" style="left:228.6px;top:171px;" width="13" height="13" viewBox="0 0 13 13"><rect x="1" y="4" width="8" height="8" fill="none" stroke="#333" stroke-width="1.6"/><path d="M4,4 V1 H12 V9 H9" fill="none" stroke="#333" stroke-width="1.6"/></svg><svg class="s" style="left:259.5px;top:172.5px;" width="12" height="12" viewBox="0 0 12 12"><path d="M1,1 L11,11 M11,1 L1,11" stroke="#333" stroke-width="2.2"/></svg><div class="r" style="left:13px;top:206px;width:255px;height:646px;background:#ffffff;border:1px solid #a0a0a0;box-sizing:border-box;"></div><div class="r" style="left:37px;top:208px;width:1px;height:37px;background:#e5e5e5;"></div><div class="r" style="left:178px;top:208px;width:1px;height:37px;background:#e5e5e5;"></div><div class="r" style="left:198px;top:208px;width:1px;height:37px;background:#e5e5e5;"></div><div class="r" style="left:223px;top:208px;width:1px;height:37px;background:#e5e5e5;"></div><div class="t" style="left:21.00px;top:218.87px;font-size:16.5px;line-height:18.43px;color:#000;font-weight:400;">#</div><div class="t" style="left:230.00px;top:218.96px;font-size:17.5px;line-height:19.55px;color:#000;font-weight:400;transform:scaleX(0.9143);">Typ</div><div class="r" style="left:14px;top:245px;width:253px;height:27px;background:#ffffe6;"></div><div class="t" style="left:18.90px;top:250.46px;font-size:17.5px;line-height:19.55px;color:#000;font-weight:700;font-style:italic;transform:scaleX(0.9935);">-1 Aktives Gesch...</div><div class="t" style="left:19.60px;top:278.86px;font-size:17.5px;line-height:19.55px;color:#000;font-weight:400;">1</div><div class="t" style="left:41.90px;top:278.86px;font-size:17.5px;line-height:19.55px;color:#000;font-weight:400;transform:scaleX(0.9447);">base</div><svg class="s" style="left:181.5px;top:280px;" width="9" height="12" viewBox="0 0 9 12"><path d="M4.5,0.7 A3.8,3.8 0 0 1 7.8,6.0 L5.7,9 H3.3 L1.2,6.0 A3.8,3.8 0 0 1 4.5,0.7 Z" fill="#ffff00" stroke="#222" stroke-width="1"/><rect x="3.0" y="9" width="3" height="3" fill="#222"/></svg><svg class="s" style="left:202px;top:280px;" width="15" height="12" viewBox="0 0 15 12"><path d="M9,5 V3 A2.5,2.5 0 0 1 14,3 V5" stroke="#222" stroke-width="1.4" fill="none"/><rect x="0.5" y="5" width="10" height="6.5" fill="#e6e600" stroke="#222" stroke-width="1"/><path d="M0.5,7.3 H10.5 M0.5,9.5 H10.5" stroke="#222" stroke-width="1"/></svg><div class="r" style="left:14px;top:863px;width:110px;height:32px;background:#e1e1e1;border:1px solid #adadad;box-sizing:border-box;"></div><div class="t" style="left:55.40px;top:871.49px;font-size:16.7px;line-height:18.65px;color:#000;font-weight:400;transform:scaleX(0.9429);">Alle</div><div class="r" style="left:134px;top:868px;width:20px;height:20px;background:#fff;border:1px solid #333;box-sizing:border-box;"></div><div class="t" style="left:162.30px;top:870.69px;font-size:16.7px;line-height:18.65px;color:#000;font-weight:400;transform:scaleX(0.8708);">Ein</div><div class="r" style="left:0px;top:916px;width:282px;height:28px;background:#d9d9d9;border:1px solid #ababab;box-sizing:border-box;"></div><div class="t" style="left:6.10px;top:922.33px;font-size:18.2px;line-height:20.33px;color:#000;font-weight:400;transform:scaleX(0.9245);">IFC Struktur</div><svg class="s" style="left:260px;top:923px;" width="13" height="13" viewBox="0 0 13 13"><rect x="1" y="4" width="8" height="8" fill="none" stroke="#333" stroke-width="1.6"/><path d="M4,4 V1 H12 V9 H9" fill="none" stroke="#333" stroke-width="1.6"/></svg><div class="r" style="left:13px;top:960px;width:20px;height:20px;background:#fff;border:1px solid #333;box-sizing:border-box;"></div><div class="t" style="left:41.20px;top:962.09px;font-size:16.7px;line-height:18.65px;color:#000;font-weight:400;transform:scaleX(0.8862);">Site</div><div class="t" style="left:194.00px;top:962.39px;font-size:16.7px;line-height:18.65px;color:#000;font-weight:400;transform:scaleX(0.8667);">BIM</div><svg class="s" style="left:237.5px;top:959.5px;" width="24" height="24" viewBox="0 0 24 24"><circle cx="12.0" cy="12.0" r="12.0" fill="#93d295"/></svg><div class="t" style="left:243.30px;top:964.07px;font-size:15.5px;line-height:17.31px;color:#ffffff;font-weight:700;transform:scaleX(0.9538);">M</div><div class="r" style="left:13px;top:991px;width:256px;height:106px;background:#ffffff;border:1px solid #a0a0a0;box-sizing:border-box;"></div><div class="r" style="left:14px;top:1029px;width:228px;height:67px;background:#ffffe6;"></div><div class="r" style="left:165px;top:993px;width:1px;height:36px;background:#e5e5e5;"></div><div class="r" style="left:221px;top:993px;width:1px;height:36px;background:#e5e5e5;"></div><div class="t" style="left:172.00px;top:1001.87px;font-size:16.5px;line-height:18.43px;color:#000;font-weight:400;transform:scaleX(0.9000);">Z</div><div class="r" style="left:242px;top:992px;width:26px;height:104px;background:#f0f0f0;"></div><div class="r" style="left:243px;top:1018px;width:23px;height:34px;background:#cdcdcd;"></div><svg class="s" style="left:249px;top:1081px;" width="12" height="7" viewBox="0 0 12 7"><path d="M0.5,0.5 L6,6.5 L11.5,0.5" stroke="#555" stroke-width="1.4" fill="none"/></svg><svg class="s" style="left:249px;top:1003px;" width="12" height="7" viewBox="0 0 12 7"><path d="M0.5,6.5 L6,0.5 L11.5,6.5" stroke="#555" stroke-width="1.4" fill="none"/></svg><div class="r" style="left:25px;top:1039px;width:9px;height:9px;background:#fff;border:1px solid #888;box-sizing:border-box;"></div><div class="r" style="left:27px;top:1043px;width:5px;height:1px;background:#333;"></div><svg class="s" style="left:47px;top:1037px;" width="15" height="14" viewBox="0 0 15 14"><path d="M1,7 L7.5,1 L14,7 V13 H2 V7 Z" fill="#f8b070" stroke="#a04000" stroke-width="1"/><path d="M4,8 V13 M11,8 V13" stroke="#a04000"/></svg><div class="t" style="left:70.00px;top:1035.23px;font-size:17.2px;line-height:19.21px;color:#000;font-weight:700;">Building 1</div><svg class="s" style="left:226px;top:1037px;" width="8" height="12" viewBox="0 0 8 12"><path d="M4.0,0.7 A3.3,3.3 0 0 1 6.8,5.5 L5.2,9 H2.8 L1.2,5.5 A3.3,3.3 0 0 1 4.0,0.7 Z" fill="#ffff00" stroke="#222" stroke-width="1"/><rect x="2.5" y="9" width="3" height="3" fill="#222"/></svg><div class="t" style="left:77.00px;top:1063.53px;font-size:17.2px;line-height:19.21px;color:#000;font-weight:700;transform:scaleX(1.0519);">Storey I...</div><div class="t" style="left:169.00px;top:1063.53px;font-size:17.2px;line-height:19.21px;color:#000;font-weight:700;transform:scaleX(1.0233);">0.000</div><svg class="s" style="left:226px;top:1065px;" width="8" height="12" viewBox="0 0 8 12"><path d="M4.0,0.7 A3.3,3.3 0 0 1 6.8,5.5 L5.2,9 H2.8 L1.2,5.5 A3.3,3.3 0 0 1 4.0,0.7 Z" fill="#ffff00" stroke="#222" stroke-width="1"/><rect x="2.5" y="9" width="3" height="3" fill="#222"/></svg><svg class="s" style="left:226px;top:1092px;" width="8" height="12" viewBox="0 0 8 12"><path d="M4.0,0.7 A3.3,3.3 0 0 1 6.8,5.5 L5.2,9 H2.8 L1.2,5.5 A3.3,3.3 0 0 1 4.0,0.7 Z" fill="#ffff00" stroke="#222" stroke-width="1"/><rect x="2.5" y="9" width="3" height="3" fill="#222"/></svg><svg class="s" style="left:47px;top:1090px;" width="15" height="8" viewBox="0 0 15 8"><path d="M1,7 L6,1 L13,4" stroke="#333" fill="none"/></svg><div class="r" style="left:13px;top:1096px;width:256px;height:1px;background:#a0a0a0;"></div><div class="r" style="left:14px;top:1097px;width:254px;height:14px;background:#f0f0f0;"></div><div class="r" style="left:14px;top:1108px;width:110px;height:32px;background:#e1e1e1;border:1px solid #adadad;box-sizing:border-box;"></div><div class="t" style="left:55.40px;top:1116.19px;font-size:16.7px;line-height:18.65px;color:#000;font-weight:400;transform:scaleX(0.9429);">Alle</div><div class="r" style="left:134px;top:1113px;width:20px;height:20px;background:#fff;border:1px solid #333;box-sizing:border-box;"></div><div class="t" style="left:162.30px;top:1115.39px;font-size:16.7px;line-height:18.65px;color:#000;font-weight:400;transform:scaleX(0.8708);">Ein</div><div class="r" style="left:288px;top:162px;width:1034px;height:960px;background:#666699;"></div><svg class="s" style="left:288px;top:162px;overflow:hidden;" width="1034" height="960" viewBox="0 0 1034 960"><g stroke="#7f7fbf" stroke-width="1" fill="none"><line x1="1034.00" y1="673.83" x2="570.01" y2="960.00"/><line x1="1034.00" y1="320.16" x2="0.00" y2="649.33"/><line x1="1034.00" y1="196.98" x2="0.00" y2="418.69"/><line x1="1034.00" y1="134.35" x2="0.00" y2="301.42"/><line x1="1034.00" y1="96.44" x2="0.00" y2="230.42"/><line x1="1034.00" y1="71.02" x2="0.00" y2="182.82"/><line x1="1034.00" y1="52.79" x2="0.00" y2="148.69"/><line x1="1034.00" y1="39.08" x2="0.00" y2="123.02"/><line x1="1034.00" y1="28.39" x2="0.00" y2="103.01"/><line x1="1034.00" y1="19.83" x2="0.00" y2="86.97"/><line x1="1034.00" y1="12.81" x2="0.00" y2="73.84"/><line x1="1034.00" y1="6.96" x2="0.00" y2="62.88"/><line x1="1034.00" y1="2.00" x2="0.00" y2="53.59"/><line x1="985.30" y1="0.00" x2="0.00" y2="45.63"/><line x1="896.40" y1="0.00" x2="-0.00" y2="38.72"/><line x1="807.34" y1="0.00" x2="0.00" y2="32.67"/><line x1="718.11" y1="0.00" x2="0.00" y2="27.34"/><line x1="628.73" y1="0.00" x2="0.00" y2="22.59"/><line x1="539.18" y1="0.00" x2="-0.00" y2="18.34"/><line x1="449.47" y1="0.00" x2="0.00" y2="14.51"/><line x1="359.59" y1="0.00" x2="0.00" y2="11.05"/><line x1="269.56" y1="0.00" x2="0.00" y2="7.90"/><line x1="179.35" y1="0.00" x2="-0.00" y2="5.02"/><line x1="88.99" y1="0.00" x2="0.00" y2="2.39"/><line x1="1034.00" y1="2.59" x2="971.91" y2="0.00"/><line x1="1034.00" y1="5.56" x2="907.03" y2="0.00"/><line x1="1034.00" y1="8.83" x2="842.07" y2="0.00"/><line x1="1034.00" y1="12.46" x2="777.02" y2="0.00"/><line x1="1034.00" y1="16.51" x2="711.88" y2="0.00"/><line x1="1034.00" y1="21.05" x2="646.66" y2="0.00"/><line x1="1034.00" y1="26.18" x2="581.36" y2="0.00"/><line x1="1034.00" y1="32.02" x2="515.96" y2="0.00"/><line x1="1034.00" y1="38.74" x2="450.48" y2="0.00"/><line x1="1034.00" y1="46.55" x2="384.91" y2="0.00"/><line x1="1034.00" y1="55.72" x2="319.26" y2="0.00"/><line x1="1034.00" y1="66.67" x2="253.52" y2="0.00"/><line x1="1034.00" y1="79.95" x2="187.69" y2="0.00"/><line x1="1034.00" y1="96.41" x2="121.77" y2="0.00"/><line x1="1034.00" y1="117.33" x2="55.77" y2="0.00"/><line x1="1034.00" y1="144.81" x2="0.00" y2="1.43"/><line x1="1034.00" y1="182.51" x2="0.00" y2="12.57"/><line x1="1034.00" y1="237.46" x2="0.00" y2="28.81"/><line x1="1034.00" y1="324.98" x2="0.00" y2="54.67"/><line x1="1034.00" y1="486.23" x2="0.00" y2="102.32"/><line x1="1034.00" y1="882.18" x2="0.00" y2="219.32"/></g><line x1="1034.00" y1="196.98" x2="0.00" y2="418.69" stroke="#0000ff" stroke-dasharray="5 3"/><line x1="1034.00" y1="324.98" x2="0.00" y2="54.67" stroke="#ff0000" stroke-dasharray="5 3"/><line x1="789" y1="0" x2="701" y2="960" stroke="#00ee00" stroke-dasharray="5 3"/><defs><linearGradient id="cg2" x1="0" x2="1" y1="0" y2="0"><stop offset="0" stop-color="#666670" stop-opacity="0.55"/><stop offset="0.2" stop-color="#7a7a78" stop-opacity="0.9"/><stop offset="0.55" stop-color="#80807a" stop-opacity="0.92"/><stop offset="0.85" stop-color="#747474" stop-opacity="0.9"/><stop offset="1" stop-color="#606078" stop-opacity="0.6"/></linearGradient></defs><path d="M521.3,130.39999999999998 L556.3,130.39999999999998 L552.5,442 L521.3,442 Z" fill="url(#cg2)"/><ellipse cx="538.9" cy="130.39999999999998" rx="17" ry="3" fill="none" stroke="#ffff00" stroke-width="2"/><ellipse cx="536.9" cy="443.29999999999995" rx="15.5" ry="5.8" fill="none" stroke="#ffff00" stroke-width="2"/><polygon points="354.5,425.3 579.1,366.4 740.3,434.0 719.9,681.2 502.1,788.6 369.3,669.1" fill="#008080" fill-opacity="0.2"/><g stroke="#00ffff" stroke-width="2" fill="none"><polyline points="354.5,425.3 579.1,366.4 740.3,434.0 719.9,681.2 502.1,788.6 369.3,669.1 354.5,425.3 500.0,514.3 740.3,434.0"/><line x1="500" y1="514.3" x2="502.1" y2="788.6"/><polyline points="369.3,669.1 574.7,589.5 719.9,681.2"/><line x1="574.7" y1="589.5" x2="579.1" y2="366.4"/></g></svg><div class="r" style="left:1206px;top:162px;width:116px;height:28px;background:#f0f0f0;border-left:1px solid #fff;border-bottom:1px solid #fff;box-sizing:border-box"></div><div class="r" style="left:1208px;top:164px;width:28px;height:23px;background:#c8e1f6;border:1px solid #99ccf0;box-sizing:border-box;"></div><svg class="s" style="left:1213px;top:166px;" width="21" height="20" viewBox="0 0 21 20"><circle cx="11" cy="10" r="9.5" fill="#55dddd"/><path d="M2,6 Q11,-1 20,6" fill="#55bbbb"/><path d="M15,2 Q21,5 21,10 Q21,16 15,19 Z" fill="#00ffff"/></svg><div class="t" style="left:1212.90px;top:169.42px;font-size:17px;line-height:18.99px;color:#000;font-weight:700;transform:scaleX(0.9136);">3D</div><div class="t" style="left:1240.90px;top:168.68px;font-size:14.5px;line-height:16.20px;color:#0000ff;font-weight:700;transform:scaleX(0.7500);">Top</div><div class="t" style="left:1273.70px;top:168.68px;font-size:14.5px;line-height:16.20px;color:#007700;font-weight:700;transform:scaleX(0.9400);">V</div><div class="t" style="left:1302.00px;top:168.73px;font-size:15px;line-height:16.75px;color:#ff0000;font-weight:400;transform:scaleX(0.8400);">P</div><svg class="s" style="left:335px;top:995px;" width="70" height="100" viewBox="0 0 70 100"><path d="M15.3,69.5 V36" stroke="#00ff00" stroke-width="2"/><polygon points="11.5,41 15.3,27 19.1,41" fill="#00ff00"/><path d="M15.3,69.5 L38,62" stroke="#0000ff" stroke-width="2"/><polygon points="34,57 44,59 37,65" fill="#0000ff"/><path d="M15.3,69.5 L38,80" stroke="#ff0000" stroke-width="2"/><polygon points="34,84 46,86 38,75" fill="#ff0000"/></svg><div class="t" style="left:346.00px;top:1004.03px;font-size:13px;line-height:14.52px;color:#ffff00;font-weight:700;transform:scaleX(1.0625);text-shadow:1px 0 #000,-1px 0 #000,0 1px #000,0 -1px #000,1px 1px #000,-1px -1px #000,1px -1px #000,-1px 1px #000;">Z</div><div class="t" style="left:383.00px;top:1046.03px;font-size:13px;line-height:14.52px;color:#ffff00;font-weight:700;transform:scaleX(0.9444);text-shadow:1px 0 #000,-1px 0 #000,0 1px #000,0 -1px #000,1px 1px #000,-1px -1px #000,1px -1px #000,-1px 1px #000;">Y</div><div class="t" style="left:388.00px;top:1076.03px;font-size:13px;line-height:14.52px;color:#ffff00;font-weight:700;transform:scaleX(0.9444);text-shadow:1px 0 #000,-1px 0 #000,0 1px #000,0 -1px #000,1px 1px #000,-1px -1px #000,1px -1px #000,-1px 1px #000;">X</div><div class="t" style="left:490.00px;top:1100.58px;font-size:13.5px;line-height:15.08px;color:#ffff00;font-weight:700;transform:scaleX(0.6667);font-family:Liberation Mono,monospace;text-shadow:1px 0 #000,-1px 0 #000,0 1px #000,0 -1px #000,1px 1px #000,-1px -1px #000,1px -1px #000,-1px 1px #000;">S</div><div class="t" style="left:500.00px;top:1100.58px;font-size:13.5px;line-height:15.08px;color:#ffff00;font-weight:700;transform:scaleX(0.6000);font-family:Liberation Mono,monospace;text-shadow:1px 0 #000,-1px 0 #000,0 1px #000,0 -1px #000,1px 1px #000,-1px -1px #000,1px -1px #000,-1px 1px #000;">H</div><div class="t" style="left:510.00px;top:1100.58px;font-size:13.5px;line-height:15.08px;color:#ffff00;font-weight:700;transform:scaleX(0.6000);font-family:Liberation Mono,monospace;text-shadow:1px 0 #000,-1px 0 #000,0 1px #000,0 -1px #000,1px 1px #000,-1px -1px #000,1px -1px #000,-1px 1px #000;">A</div><div class="t" style="left:520.00px;top:1100.58px;font-size:13.5px;line-height:15.08px;color:#ffff00;font-weight:700;transform:scaleX(0.6000);font-family:Liberation Mono,monospace;text-shadow:1px 0 #000,-1px 0 #000,0 1px #000,0 -1px #000,1px 1px #000,-1px -1px #000,1px -1px #000,-1px 1px #000;">D</div><div class="t" style="left:530.00px;top:1100.58px;font-size:13.5px;line-height:15.08px;color:#ffff00;font-weight:700;transform:scaleX(0.6667);font-family:Liberation Mono,monospace;text-shadow:1px 0 #000,-1px 0 #000,0 1px #000,0 -1px #000,1px 1px #000,-1px -1px #000,1px -1px #000,-1px 1px #000;">E</div><div class="t" style="left:540.00px;top:1100.58px;font-size:13.5px;line-height:15.08px;color:#ffff00;font-weight:700;transform:scaleX(0.6000);font-family:Liberation Mono,monospace;text-shadow:1px 0 #000,-1px 0 #000,0 1px #000,0 -1px #000,1px 1px #000,-1px -1px #000,1px -1px #000,-1px 1px #000;">R</div><div class="t" style="left:560.00px;top:1100.58px;font-size:13.5px;line-height:15.08px;color:#ffff00;font-weight:700;transform:scaleX(0.5455);font-family:Liberation Mono,monospace;text-shadow:1px 0 #000,-1px 0 #000,0 1px #000,0 -1px #000,1px 1px #000,-1px -1px #000,1px -1px #000,-1px 1px #000;">M</div><div class="t" style="left:570.00px;top:1100.58px;font-size:13.5px;line-height:15.08px;color:#ffff00;font-weight:700;transform:scaleX(0.5455);font-family:Liberation Mono,monospace;text-shadow:1px 0 #000,-1px 0 #000,0 1px #000,0 -1px #000,1px 1px #000,-1px -1px #000,1px -1px #000,-1px 1px #000;">O</div><div class="t" style="left:580.00px;top:1100.58px;font-size:13.5px;line-height:15.08px;color:#ffff00;font-weight:700;transform:scaleX(0.6000);font-family:Liberation Mono,monospace;text-shadow:1px 0 #000,-1px 0 #000,0 1px #000,0 -1px #000,1px 1px #000,-1px -1px #000,1px -1px #000,-1px 1px #000;">D</div><div class="t" style="left:590.00px;top:1100.58px;font-size:13.5px;line-height:15.08px;color:#ffff00;font-weight:700;transform:scaleX(0.6667);font-family:Liberation Mono,monospace;text-shadow:1px 0 #000,-1px 0 #000,0 1px #000,0 -1px #000,1px 1px #000,-1px -1px #000,1px -1px #000,-1px 1px #000;">E</div><div class="t" style="left:600.00px;top:1100.58px;font-size:13.5px;line-height:15.08px;color:#ffff00;font-weight:700;transform:scaleX(0.5000);font-family:Liberation Mono,monospace;text-shadow:1px 0 #000,-1px 0 #000,0 1px #000,0 -1px #000,1px 1px #000,-1px -1px #000,1px -1px #000,-1px 1px #000;">!</div><div class="r" style="left:288px;top:1122px;width:137px;height:32px;background:#ffffff;border-left:1px solid #d9d9d9;border-right:1px solid #d9d9d9;border-bottom:1px solid #d9d9d9;box-sizing:border-box"></div><svg class="s" style="left:311px;top:1131px;" width="14" height="14" viewBox="0 0 14 14"><path d="M5,0.5 H9 V5 H13.5 V9 H9 V13.5 H5 V9 H0.5 V5 H5 Z" fill="#a0b0e8" stroke="#000" stroke-width="1"/></svg><div class="t" style="left:345.00px;top:1130.87px;font-size:16.5px;line-height:18.43px;color:#000;font-weight:400;transform:scaleX(0.8723);">Szene</div><div class="r" style="left:1185px;top:1122px;width:137px;height:32px;background:#ffffff;border-left:1px solid #d9d9d9;border-bottom:1px solid #d9d9d9;box-sizing:border-box"></div><svg class="s" style="left:1208px;top:1131px;" width="14" height="14" viewBox="0 0 14 14"><path d="M5,0.5 H9 V5 H13.5 V9 H9 V13.5 H5 V9 H0.5 V5 H5 Z" fill="#a0b0e8" stroke="#000" stroke-width="1"/></svg><div class="t" style="left:1239.00px;top:1130.37px;font-size:16.5px;line-height:18.43px;color:#000;font-weight:400;transform:scaleX(0.9400);">Layout</div><div class="r" style="left:1445px;top:164px;width:223px;height:25px;background:#f0f0f0;border:1px solid #d9d9d9;box-sizing:border-box;"></div><div class="r" style="left:1564px;top:164px;width:1px;height:25px;background:#d9d9d9;"></div><div class="r" style="left:1329px;top:163px;width:117px;height:26px;background:#ffffff;border-left:1px solid #d9d9d9;box-sizing:border-box"></div><div class="t" style="left:1346.30px;top:166.94px;font-size:17.3px;line-height:19.32px;color:#000;font-weight:400;transform:scaleX(0.8920);">Hinzufügen</div><div class="t" style="left:1462.30px;top:169.04px;font-size:17.3px;line-height:19.32px;color:#000;font-weight:400;transform:scaleX(0.9011);">Modifizieren</div><div class="t" style="left:1583.40px;top:169.04px;font-size:17.3px;line-height:19.32px;color:#000;font-weight:400;transform:scaleX(0.9162);">Hilfslinien</div><div class="r" style="left:1342px;top:192px;width:315px;height:69px;background:#f5f5f2;"></div><div class="r" style="left:1344px;top:194px;width:31px;height:31px;background:#666699;"></div><div class="r" style="left:1344px;top:228px;width:31px;height:31px;background:#666699;"></div><div class="r" style="left:1379px;top:194px;width:31px;height:31px;background:#666699;"></div><div class="r" style="left:1379px;top:228px;width:31px;height:31px;background:#666699;"></div><div class="r" style="left:1414px;top:194px;width:31px;height:31px;background:#666699;"></div><div class="r" style="left:1414px;top:228px;width:31px;height:31px;background:#666699;"></div><div class="r" style="left:1449px;top:194px;width:31px;height:31px;background:#666699;"></div><div class="r" style="left:1449px;top:228px;width:31px;height:31px;background:#666699;"></div><div class="r" style="left:1484px;top:194px;width:31px;height:31px;background:#666699;"></div><div class="r" style="left:1484px;top:228px;width:31px;height:31px;background:#666699;"></div><div class="r" style="left:1519px;top:194px;width:31px;height:31px;background:#666699;"></div><div class="r" style="left:1519px;top:228px;width:31px;height:31px;background:#55558a;"></div><div class="r" style="left:1554px;top:194px;width:31px;height:31px;background:#666699;"></div><div class="r" style="left:1554px;top:228px;width:31px;height:31px;background:#55558a;"></div><div class="r" style="left:1589px;top:194px;width:31px;height:31px;background:#8a3a9a;"></div><div class="r" style="left:1589px;top:228px;width:31px;height:31px;background:#55558a;"></div><div class="r" style="left:1624px;top:194px;width:31px;height:31px;background:#9a9a9a;"></div><div class="r" style="left:1624px;top:228px;width:31px;height:31px;background:#55558a;"></div><div class="r" style="left:1344px;top:194px;width:31px;height:31px;border:2px solid #000;box-sizing:border-box;"></div><svg class="s" style="left:1344px;top:194px;" width="31" height="31" viewBox="0 0 31 31"><polygon points="6,12 15,5 24,12 24,23 6,23" fill="#c8c8e4"/><polygon points="24,12 27,14 27,22 24,23" fill="#505080"/><path d="M5,13 L15,4 L25,13" stroke="#fff" stroke-width="1.2" fill="none"/><rect x="9" y="16" width="3" height="7" fill="#8888bb"/><rect x="15" y="15" width="3" height="3" fill="#8888bb"/></svg><svg class="s" style="left:1379px;top:194px;" width="31" height="31" viewBox="0 0 31 31"><path d="M12,6 H17 V18 M10,14 H18 V19 M10,14 V24 M18,17 V24 M14,18 V26" stroke="#c8c8e4" stroke-width="1.6" fill="none"/><rect x="13" y="5" width="5" height="9" fill="#aaa"/></svg><svg class="s" style="left:1414px;top:194px;" width="31" height="31" viewBox="0 0 31 31"><rect x="11" y="7" width="9" height="14" fill="none" stroke="#c8c8e4" stroke-width="1.5"/><path d="M13,9 L18,19 M18,9 L13,19" stroke="#c8c8e4" stroke-width="1"/></svg><svg class="s" style="left:1449px;top:194px;" width="31" height="31" viewBox="0 0 31 31"><path d="M9,8 H22 M15.5,8 V22 M9,22 H22" stroke="#c8c8e4" stroke-width="2.4"/></svg><svg class="s" style="left:1484px;top:194px;" width="31" height="31" viewBox="0 0 31 31"><path d="M8,10 L22,6 M12,14 L22,10" stroke="#b0b0cc" stroke-width="2.2"/><path d="M7,22 Q9,17 14,17 H19 Q23,18 24,22 Z" fill="#c8c8e4"/><circle cx="11" cy="23" r="1.6" fill="#333"/><circle cx="21" cy="23" r="1.6" fill="#333"/></svg><svg class="s" style="left:1519px;top:194px;" width="31" height="31" viewBox="0 0 31 31"><polygon points="15.5,5 21,12 18,12 22,18 17,18 17,24 14,24 14,18 9,18 13,12 10,12" fill="#c8c8e4"/></svg><svg class="s" style="left:1554px;top:194px;" width="31" height="31" viewBox="0 0 31 31"><circle cx="13" cy="9" r="2" fill="#c8c8e4"/><path d="M13,12 V20 M10,14 L16,15 M12,20 L11,25 M14,20 L15,25" stroke="#c8c8e4" stroke-width="2.2"/><text x="17.5" y="14" font-size="11" font-weight="bold" fill="#c8c8e4" font-family="Liberation Sans">0</text></svg><svg class="s" style="left:1589px;top:194px;" width="31" height="31" viewBox="0 0 31 31"><rect x="14" y="8" width="3.5" height="3.5" fill="#fff"/><rect x="14" y="13" width="3.5" height="10" fill="#fff"/></svg><svg class="s" style="left:1624px;top:194px;" width="31" height="31" viewBox="0 0 31 31"><rect x="9" y="19.5" width="3" height="3" fill="#fff"/><rect x="14" y="19.5" width="3" height="3" fill="#fff"/><rect x="19" y="19.5" width="3" height="3" fill="#fff"/></svg><svg class="s" style="left:1344px;top:228px;" width="31" height="31" viewBox="0 0 31 31"><path d="M12,6 V22 M7,10 H25 M9,24 H20" stroke="#c8c8e4" stroke-width="1.3"/><path d="M9,24 H20" stroke="#000" stroke-width="1.5"/></svg><svg class="s" style="left:1379px;top:228px;" width="31" height="31" viewBox="0 0 31 31"><rect x="11" y="11" width="5" height="4" fill="none" stroke="#c8c8e4"/><rect x="8" y="15" width="12" height="4" fill="#c8c8e4"/><path d="M17,15 L24,8 V17" stroke="#c8c8e4" stroke-width="1.2" fill="none"/><rect x="8" y="20" width="10" height="3" rx="1.5" fill="#d8d0b0" stroke="#333"/></svg><svg class="s" style="left:1414px;top:228px;" width="31" height="31" viewBox="0 0 31 31"><rect x="7" y="9" width="17" height="3" fill="#c8c8e4"/><rect x="7" y="12" width="17" height="6" fill="#000"/><rect x="9" y="14.5" width="4" height="1" fill="#fff"/><rect x="15" y="14.5" width="4" height="1" fill="#fff"/><rect x="7" y="18" width="17" height="3" fill="#c8c8e4"/></svg><svg class="s" style="left:1449px;top:228px;" width="31" height="31" viewBox="0 0 31 31"><circle cx="10" cy="8" r="2" fill="#aaaacc"/><circle cx="13" cy="10" r="2" fill="#aaaacc"/><rect x="8" y="14" width="14" height="8" fill="#c8c8e4"/><rect x="17" y="10" width="3" height="5" fill="#c8c8e4"/><path d="M7,24 H24" stroke="#aaa"/></svg><svg class="s" style="left:1484px;top:228px;" width="31" height="31" viewBox="0 0 31 31"><path d="M8,11 H12 M14,11 H20 M8,14 H10 M12,14 H17 M8,17 H12 M14,17 H20 M8,20 H10 M12,20 H17" stroke="#c8c8e4" stroke-width="2"/></svg><div class="t" style="left:1527.50px;top:235.52px;font-size:16px;line-height:17.87px;color:#dcdcf0;font-weight:700;transform:scaleX(0.6667);">U1</div><div class="t" style="left:1562.50px;top:235.52px;font-size:16px;line-height:17.87px;color:#dcdcf0;font-weight:700;transform:scaleX(0.6667);">U2</div><div class="t" style="left:1597.50px;top:235.52px;font-size:16px;line-height:17.87px;color:#dcdcf0;font-weight:700;transform:scaleX(0.6667);">U3</div><div class="t" style="left:1630.50px;top:235.52px;font-size:16px;line-height:17.87px;color:#dcdcf0;font-weight:700;transform:scaleX(0.7391);">UU</div><div class="r" style="left:1344px;top:271px;width:310px;height:846px;background:#ffffff;border:1px solid #a0a0a0;box-sizing:border-box;"></div><div class="r" style="left:1628px;top:272px;width:25px;height:844px;background:#f0f0f0;"></div><div class="r" style="left:1629px;top:299px;width:23px;height:674px;background:#cdcdcd;"></div><svg class="s" style="left:1634px;top:284px;" width="12" height="7" viewBox="0 0 12 7"><path d="M0.5,6.5 L6,0.5 L11.5,6.5" stroke="#555" stroke-width="1.5" fill="none"/></svg><svg class="s" style="left:1634px;top:1100px;" width="12" height="7" viewBox="0 0 12 7"><path d="M0.5,0.5 L6,6.5 L11.5,0.5" stroke="#555" stroke-width="1.5" fill="none"/></svg><div style="position:absolute;left:1345px;top:272px;width:283px;height:844px;overflow:hidden"><div style="position:absolute;left:-1345px;top:-272px"><div class="r" style="left:1351px;top:274px;width:80px;height:80px;background:#ffffe6;border:1px solid #c4c4c4;box-sizing:border-box;"></div><svg class="s" style="left:1351px;top:274px;" width="80" height="80" viewBox="0 0 80 80"><polygon points="9.2,34.8 43.5,24 70.9,37.9 37,48.3" fill="#cfcfcf"/><polygon points="9.2,34.8 37,48.3 37,52.9 9.2,39.3" fill="#333"/><polygon points="37,48.3 70.9,37.9 70.9,42.5 37,52.9" fill="#9a9a9a"/><path d="M10.5,22 V30" stroke="#ee0000" stroke-width="2"/><polygon points="6,28 15,28 10.5,34" fill="#ee0000"/></svg><svg class="s" style="left:1354.5px;top:333.5px;" width="11" height="17" viewBox="0 0 11 17"><path d="M1.5,6 Q1.5,2.5 5.5,2.3 Q9.5,2.5 9.5,6 V12.5 Q9.5,16 5.5,16 Q1.5,16 1.5,12.5 Z" fill="#fff" stroke="#000" stroke-width="1.3"/><path d="M1.5,6 Q1.5,2.5 5.5,2.3 V8 H1.5 Z" fill="#000"/><path d="M1.5,8 H9.5" stroke="#000" stroke-width="1.2"/><path d="M5.5,2.3 L4,0.5" stroke="#000" stroke-width="1"/></svg><div class="r" style="left:1407px;top:336px;width:23px;height:17px;background:#d7d7f7;"></div><svg class="s" style="left:1407px;top:336px;" width="23" height="17" viewBox="0 0 23 17"><rect x="4.8" y="7.8" width="2.5" height="2.5" fill="#000"/><rect x="10.8" y="7.8" width="2.5" height="2.5" fill="#000"/><rect x="15.8" y="7.8" width="2.5" height="2.5" fill="#000"/></svg><div class="t" style="left:1367.80px;top:360.91px;font-size:19px;line-height:21.22px;color:#000;font-weight:400;transform:scaleX(0.8667);">Decke</div><div class="r" style="left:1441px;top:274px;width:80px;height:80px;background:#ffffe6;border:1px solid #c4c4c4;box-sizing:border-box;"></div><svg class="s" style="left:1441px;top:274px;" width="80" height="80" viewBox="0 0 80 80"><polygon points="22,32 66,18.6 66,44.7 22,58.3" fill="#9c9c9c"/><polygon points="20,32 64,18 66,18.6 22,32.6" fill="#d6d6d6"/><polygon points="20,32 22,32.6 22,58.3 20,57.5" fill="#333"/></svg><div class="t" style="left:1444.80px;top:275.37px;font-size:16.5px;line-height:18.43px;color:#007700;font-weight:400;transform:scaleX(0.9625);">LW</div><svg class="s" style="left:1444.5px;top:333.5px;" width="11" height="17" viewBox="0 0 11 17"><path d="M1.5,6 Q1.5,2.5 5.5,2.3 Q9.5,2.5 9.5,6 V12.5 Q9.5,16 5.5,16 Q1.5,16 1.5,12.5 Z" fill="#fff" stroke="#000" stroke-width="1.3"/><path d="M1.5,6 Q1.5,2.5 5.5,2.3 V8 H1.5 Z" fill="#000"/><path d="M1.5,8 H9.5" stroke="#000" stroke-width="1.2"/><path d="M5.5,2.3 L4,0.5" stroke="#000" stroke-width="1"/></svg><div class="r" style="left:1497px;top:336px;width:23px;height:17px;background:#d7d7f7;"></div><svg class="s" style="left:1497px;top:336px;" width="23" height="17" viewBox="0 0 23 17"><rect x="4.8" y="7.8" width="2.5" height="2.5" fill="#000"/><rect x="10.8" y="7.8" width="2.5" height="2.5" fill="#000"/><rect x="15.8" y="7.8" width="2.5" height="2.5" fill="#000"/></svg><div class="t" style="left:1458.00px;top:360.91px;font-size:19px;line-height:21.22px;color:#000;font-weight:400;transform:scaleX(0.9224);">Wand</div><div class="r" style="left:1531px;top:274px;width:80px;height:80px;background:#ffffe6;border:1px solid #c4c4c4;box-sizing:border-box;"></div><svg class="s" style="left:1531px;top:274px;" width="80" height="80" viewBox="0 0 80 80"><polygon points="13.5,43.3 49.6,27.6 66.7,35.7 31.6,51.9" fill="#6fa88a"/><polygon points="13.5,43.3 31.6,51.9 31.6,54 13.5,45.5" fill="#4a8a6a"/><polygon points="31.6,51.9 66.7,35.7 66.7,38 31.6,54" fill="#3f7a5c"/><polygon points="21.3,27.6 58.3,13.2 58.3,33 21.3,48.3" fill="#cfcfbf" fill-opacity="0.85"/></svg><svg class="s" style="left:1534.5px;top:333.5px;" width="11" height="17" viewBox="0 0 11 17"><path d="M1.5,6 Q1.5,2.5 5.5,2.3 Q9.5,2.5 9.5,6 V12.5 Q9.5,16 5.5,16 Q1.5,16 1.5,12.5 Z" fill="#fff" stroke="#000" stroke-width="1.3"/><path d="M1.5,6 Q1.5,2.5 5.5,2.3 V8 H1.5 Z" fill="#000"/><path d="M1.5,8 H9.5" stroke="#000" stroke-width="1.2"/><path d="M5.5,2.3 L4,0.5" stroke="#000" stroke-width="1"/></svg><div class="r" style="left:1587px;top:336px;width:23px;height:17px;background:#d7d7f7;"></div><svg class="s" style="left:1587px;top:336px;" width="23" height="17" viewBox="0 0 23 17"><rect x="4.8" y="7.8" width="2.5" height="2.5" fill="#000"/><rect x="10.8" y="7.8" width="2.5" height="2.5" fill="#000"/><rect x="15.8" y="7.8" width="2.5" height="2.5" fill="#000"/></svg><div class="t" style="left:1532.50px;top:360.91px;font-size:19px;line-height:21.22px;color:#000;font-weight:400;transform:scaleX(0.8907);">Fundam...</div><div class="r" style="left:1351px;top:384px;width:80px;height:80px;background:#ffffe6;border:1px solid #c4c4c4;box-sizing:border-box;"></div><svg class="s" style="left:1351px;top:384px;" width="80" height="80" viewBox="0 0 80 80"><polygon points="19,31.5 65.5,17.9 65.5,44.9 19,56.4" fill="#9c9c9c"/><polygon points="17.5,31 64,17.5 65.5,17.9 19,31.5" fill="#d6d6d6"/><polygon points="17.5,31 19,31.5 19,56.4 17.5,56" fill="#333"/><polygon points="36.6,31.2 49.2,27.6 49.2,46.6 36.6,51.1" fill="#eaead6"/><polygon points="47.5,28 49.2,27.6 49.2,46.6 47.5,47" fill="#555"/></svg><div class="r" style="left:1407px;top:446px;width:23px;height:17px;background:#d7d7f7;"></div><svg class="s" style="left:1407px;top:446px;" width="23" height="17" viewBox="0 0 23 17"><rect x="4.8" y="7.8" width="2.5" height="2.5" fill="#000"/><rect x="10.8" y="7.8" width="2.5" height="2.5" fill="#000"/><rect x="15.8" y="7.8" width="2.5" height="2.5" fill="#000"/></svg><div class="t" style="left:1362.20px;top:470.91px;font-size:19px;line-height:21.22px;color:#000;font-weight:400;transform:scaleX(0.8877);">Öff_Tür</div><div class="r" style="left:1441px;top:384px;width:80px;height:80px;background:#ffffe6;border:1px solid #c4c4c4;box-sizing:border-box;"></div><svg class="s" style="left:1441px;top:384px;" width="80" height="80" viewBox="0 0 80 80"><polygon points="20,31.8 66.8,19.1 66.8,43.9 20,58.3" fill="#9c9c9c"/><polygon points="18.5,31.4 65.3,18.7 66.8,19.1 20,31.8" fill="#d6d6d6"/><polygon points="18.5,31.4 20,31.8 20,58.3 18.5,58" fill="#333"/><polygon points="36,32.6 50.4,29 50.4,42.5 36,46" fill="#eaead6"/><polygon points="48.8,29.4 50.4,29 50.4,42.5 48.8,42.9" fill="#555"/></svg><div class="r" style="left:1497px;top:446px;width:23px;height:17px;background:#d7d7f7;"></div><svg class="s" style="left:1497px;top:446px;" width="23" height="17" viewBox="0 0 23 17"><rect x="4.8" y="7.8" width="2.5" height="2.5" fill="#000"/><rect x="10.8" y="7.8" width="2.5" height="2.5" fill="#000"/><rect x="15.8" y="7.8" width="2.5" height="2.5" fill="#000"/></svg><div class="t" style="left:1451.50px;top:470.91px;font-size:19px;line-height:21.22px;color:#000;font-weight:400;transform:scaleX(0.8809);">Öff_Fen</div><div class="r" style="left:1531px;top:384px;width:80px;height:80px;background:#ffffe6;border:1px solid #c4c4c4;box-sizing:border-box;"></div><svg class="s" style="left:1531px;top:384px;" width="80" height="80" viewBox="0 0 80 80"><g fill="#cfe8e8" fill-opacity="0.6" stroke="#2299ee" stroke-width="1"><polygon points="19.8,34.7 45.1,23.8 57.7,30.1 33.4,41"/><polygon points="19.8,34.7 33.4,41 33.4,56.3 19.8,49.1"/><polygon points="33.4,41 57.7,30.1 57.7,45.5 33.4,56.3"/></g><path d="M45.1,23.8 V39 L19.8,49.1 M45.1,39 L57.7,45.5" stroke="#2299ee" stroke-width="0.8" fill="none"/></svg><div class="r" style="left:1587px;top:446px;width:23px;height:17px;background:#d7d7f7;"></div><svg class="s" style="left:1587px;top:446px;" width="23" height="17" viewBox="0 0 23 17"><rect x="4.8" y="7.8" width="2.5" height="2.5" fill="#000"/><rect x="10.8" y="7.8" width="2.5" height="2.5" fill="#000"/><rect x="15.8" y="7.8" width="2.5" height="2.5" fill="#000"/></svg><div class="t" style="left:1531.00px;top:470.91px;font-size:19px;line-height:21.22px;color:#000;font-weight:400;transform:scaleX(0.9000);">Sperrzone</div><div class="r" style="left:1351px;top:494px;width:80px;height:80px;background:#ffffe6;border:1px solid #c4c4c4;box-sizing:border-box;"></div><svg class="s" style="left:1351px;top:494px;" width="80" height="80" viewBox="0 0 80 80"><polygon points="28,10 36,6 48,10 40,14" fill="#66ff66"/><polygon points="28,10 40,14 40,70 28,66" fill="#006600"/><polygon points="40,14 48,10 48,66 40,70" fill="#00dd00"/></svg><svg class="s" style="left:1354.5px;top:553.5px;" width="11" height="17" viewBox="0 0 11 17"><path d="M1.5,6 Q1.5,2.5 5.5,2.3 Q9.5,2.5 9.5,6 V12.5 Q9.5,16 5.5,16 Q1.5,16 1.5,12.5 Z" fill="#fff" stroke="#000" stroke-width="1.3"/><path d="M1.5,6 Q1.5,2.5 5.5,2.3 V8 H1.5 Z" fill="#000"/><path d="M1.5,8 H9.5" stroke="#000" stroke-width="1.2"/><path d="M5.5,2.3 L4,0.5" stroke="#000" stroke-width="1"/></svg><div class="t" style="left:1367.20px;top:580.90px;font-size:19px;line-height:21.22px;color:#000;font-weight:400;transform:scaleX(0.8778);">Stütze</div><div class="r" style="left:1441px;top:494px;width:80px;height:80px;background:#ffffe6;border:1px solid #c4c4c4;box-sizing:border-box;"></div><svg class="s" style="left:1441px;top:494px;" width="80" height="80" viewBox="0 0 80 80"><polygon points="14,30 55,16 68,20 27,34" fill="#22cc66"/><polygon points="14,30 27,34 27,50 14,46" fill="#005522"/><polygon points="27,34 68,20 68,36 27,50" fill="#00994a"/></svg><svg class="s" style="left:1444.5px;top:553.5px;" width="11" height="17" viewBox="0 0 11 17"><path d="M1.5,6 Q1.5,2.5 5.5,2.3 Q9.5,2.5 9.5,6 V12.5 Q9.5,16 5.5,16 Q1.5,16 1.5,12.5 Z" fill="#fff" stroke="#000" stroke-width="1.3"/><path d="M1.5,6 Q1.5,2.5 5.5,2.3 V8 H1.5 Z" fill="#000"/><path d="M1.5,8 H9.5" stroke="#000" stroke-width="1.2"/><path d="M5.5,2.3 L4,0.5" stroke="#000" stroke-width="1"/></svg><div class="t" style="left:1456.90px;top:580.90px;font-size:19px;line-height:21.22px;color:#000;font-weight:400;transform:scaleX(0.8483);">Balken</div><div class="r" style="left:1531px;top:494px;width:80px;height:80px;background:#ffffe6;border:1px solid #c4c4c4;box-sizing:border-box;"></div><svg class="s" style="left:1531px;top:494px;" width="80" height="80" viewBox="0 0 80 80"><polygon points="20,56 60,13 66,17 27,60" fill="#e6e600"/><polygon points="27,60 66,17 68,24 30,65" fill="#b0b000"/><polygon points="20,56 27,60 30,65 24,62" fill="#555500"/></svg><svg class="s" style="left:1534.5px;top:553.5px;" width="11" height="17" viewBox="0 0 11 17"><path d="M1.5,6 Q1.5,2.5 5.5,2.3 Q9.5,2.5 9.5,6 V12.5 Q9.5,16 5.5,16 Q1.5,16 1.5,12.5 Z" fill="#fff" stroke="#000" stroke-width="1.3"/><path d="M1.5,6 Q1.5,2.5 5.5,2.3 V8 H1.5 Z" fill="#000"/><path d="M1.5,8 H9.5" stroke="#000" stroke-width="1.2"/><path d="M5.5,2.3 L4,0.5" stroke="#000" stroke-width="1"/></svg><div class="t" style="left:1554.70px;top:580.90px;font-size:19px;line-height:21.22px;color:#000;font-weight:400;transform:scaleX(0.8564);">Stab</div><div class="r" style="left:1351px;top:604px;width:80px;height:80px;background:#ffffe6;border:1px solid #c4c4c4;box-sizing:border-box;"></div><svg class="s" style="left:1351px;top:604px;" width="80" height="80" viewBox="0 0 80 80"><polygon points="18.2,40.2 23,29.4 34,57.4" fill="#7a0000"/><polygon points="23,29.4 53.2,24 63.7,44.7 34,57.4" fill="#ee0000"/></svg><svg class="s" style="left:1354.5px;top:663.5px;" width="11" height="17" viewBox="0 0 11 17"><path d="M1.5,6 Q1.5,2.5 5.5,2.3 Q9.5,2.5 9.5,6 V12.5 Q9.5,16 5.5,16 Q1.5,16 1.5,12.5 Z" fill="#fff" stroke="#000" stroke-width="1.3"/><path d="M1.5,6 Q1.5,2.5 5.5,2.3 V8 H1.5 Z" fill="#000"/><path d="M1.5,8 H9.5" stroke="#000" stroke-width="1.2"/><path d="M5.5,2.3 L4,0.5" stroke="#000" stroke-width="1"/></svg><div class="t" style="left:1372.00px;top:690.90px;font-size:19px;line-height:21.22px;color:#000;font-weight:400;transform:scaleX(0.8750);">Dach</div><div class="r" style="left:1441px;top:604px;width:80px;height:80px;background:#ffffe6;border:1px solid #c4c4c4;box-sizing:border-box;"></div><svg class="s" style="left:1441px;top:604px;" width="80" height="80" viewBox="0 0 80 80"><polygon points="15.2,59.2 15.2,55.1 18.1,55.1 18.1,51.0 21.1,51.0 21.1,46.9 24.0,46.9 24.0,42.8 27.0,42.8 27.0,38.7 29.9,38.7 29.9,34.6 32.9,34.6 32.9,30.5 35.9,30.5 35.9,26.4 38.8,26.4 38.8,22.3 41.8,22.3 41.8,18.2 44.7,18.2 44.7,14.1 47.7,14.1 61.7,17.7 27.8,68.2" fill="#7a7a7a" stroke="#555" stroke-width="0.8"/><polygon points="27.8,68.2 61.7,17.7 62.5,20.5 29,70" fill="#4a4a4a"/></svg><div class="r" style="left:1497px;top:666px;width:23px;height:17px;background:#d7d7f7;"></div><svg class="s" style="left:1497px;top:666px;" width="23" height="17" viewBox="0 0 23 17"><rect x="4.8" y="7.8" width="2.5" height="2.5" fill="#000"/><rect x="10.8" y="7.8" width="2.5" height="2.5" fill="#000"/><rect x="15.8" y="7.8" width="2.5" height="2.5" fill="#000"/></svg><div class="t" style="left:1455.60px;top:690.90px;font-size:19px;line-height:21.22px;color:#000;font-weight:400;transform:scaleX(0.8763);">Treppe</div><div class="r" style="left:1531px;top:604px;width:80px;height:80px;background:#ffffe6;border:1px solid #c4c4c4;box-sizing:border-box;"></div><svg class="s" style="left:1531px;top:604px;" width="80" height="80" viewBox="0 0 80 80"><g stroke="#aaa" stroke-width="2" fill="none"><path d="M7,35 L43,32 L70,8 M8,36 L12,58 L43,56 L70,40 M43,32 V56 M70,8 V40"/><path d="M13,35 V57 M18,35 V57 M23,34 V57 M28,34 V57 M33,33 V56 M38,33 V56 M48,28 V52 M53,24 V49 M58,19 V46 M63,15 V44"/></g></svg><div class="r" style="left:1587px;top:666px;width:23px;height:17px;background:#d7d7f7;"></div><svg class="s" style="left:1587px;top:666px;" width="23" height="17" viewBox="0 0 23 17"><rect x="4.8" y="7.8" width="2.5" height="2.5" fill="#000"/><rect x="10.8" y="7.8" width="2.5" height="2.5" fill="#000"/><rect x="15.8" y="7.8" width="2.5" height="2.5" fill="#000"/></svg><div class="t" style="left:1536.70px;top:690.90px;font-size:19px;line-height:21.22px;color:#000;font-weight:400;transform:scaleX(0.8671);">Geländer</div><div class="r" style="left:1351px;top:714px;width:80px;height:80px;background:#ffffe6;border:1px solid #c4c4c4;box-sizing:border-box;"></div><svg class="s" style="left:1351px;top:714px;" width="80" height="80" viewBox="0 0 80 80"><polygon points="0.5,43.2 18.6,15.9 42.9,6 79,14 79,35.7 41.1,73.6 0.5,48.6" fill="#117733"/><polygon points="42.9,6 79,14 79,22 60,16" fill="#005522"/><polygon points="5,44.7 12.2,33.9 52.9,40.2 40.2,63.6" fill="#dddd00"/><polygon points="12.2,33.9 25.8,29.4 51,40.2 52.9,40.2" fill="#999900"/><polygon points="25.8,29.4 42.9,17.6 76.3,24.8 51,40.2" fill="#6a4a00"/><polygon points="42.9,17.6 76.3,24.8 70,26 45,20" fill="#aa7700"/></svg><svg class="s" style="left:1354.5px;top:773.5px;" width="11" height="17" viewBox="0 0 11 17"><path d="M1.5,6 Q1.5,2.5 5.5,2.3 Q9.5,2.5 9.5,6 V12.5 Q9.5,16 5.5,16 Q1.5,16 1.5,12.5 Z" fill="#fff" stroke="#000" stroke-width="1.3"/><path d="M1.5,6 Q1.5,2.5 5.5,2.3 V8 H1.5 Z" fill="#000"/><path d="M1.5,8 H9.5" stroke="#000" stroke-width="1.2"/><path d="M5.5,2.3 L4,0.5" stroke="#000" stroke-width="1"/></svg><div class="r" style="left:1407px;top:776px;width:23px;height:17px;background:#d7d7f7;"></div><svg class="s" style="left:1407px;top:776px;" width="23" height="17" viewBox="0 0 23 17"><rect x="4.8" y="7.8" width="2.5" height="2.5" fill="#000"/><rect x="10.8" y="7.8" width="2.5" height="2.5" fill="#000"/><rect x="15.8" y="7.8" width="2.5" height="2.5" fill="#000"/></svg><div class="t" style="left:1350.30px;top:800.90px;font-size:19px;line-height:21.22px;color:#000;font-weight:400;transform:scaleX(0.8900);">Terrain +...</div><div class="r" style="left:1441px;top:714px;width:80px;height:80px;background:#ffffe6;border:1px solid #c4c4c4;box-sizing:border-box;"></div><svg class="s" style="left:1441px;top:714px;" width="80" height="80" viewBox="0 0 80 80"><ellipse cx="41" cy="10.6" rx="8" ry="2.5" fill="#666"/><path d="M33,10.6 V18 Q28,24 27,32 V46 H53 V10.6 Z" fill="#b0b0b0"/><path d="M47,12 V46" stroke="#d8d8d8" stroke-width="3"/><ellipse cx="38.5" cy="49.5" rx="15" ry="5" fill="#999"/><path d="M23.5,49.5 V47 H53.5 V49.5" fill="#bbb"/></svg><div class="r" style="left:1497px;top:776px;width:23px;height:17px;background:#d7d7f7;"></div><svg class="s" style="left:1497px;top:776px;" width="23" height="17" viewBox="0 0 23 17"><rect x="4.8" y="7.8" width="2.5" height="2.5" fill="#000"/><rect x="10.8" y="7.8" width="2.5" height="2.5" fill="#000"/><rect x="15.8" y="7.8" width="2.5" height="2.5" fill="#000"/></svg><div class="t" style="left:1440.30px;top:800.90px;font-size:19px;line-height:21.22px;color:#000;font-weight:400;transform:scaleX(0.8521);">Kanalisat...</div><div class="r" style="left:1531px;top:714px;width:80px;height:80px;background:#ffffe6;border:1px solid #c4c4c4;box-sizing:border-box;"></div><svg class="s" style="left:1531px;top:714px;" width="80" height="80" viewBox="0 0 80 80"><path d="M19,37 V47 H60.4 V37" stroke="#0000ee" stroke-width="2.2" fill="none"/><path d="M19,37 Q19,34.5 22,35 M60.4,37 Q60.4,34.5 57.4,35" stroke="#0000ee" stroke-width="2.2" fill="none"/></svg><svg class="s" style="left:1534.5px;top:773.5px;" width="11" height="17" viewBox="0 0 11 17"><path d="M1.5,6 Q1.5,2.5 5.5,2.3 Q9.5,2.5 9.5,6 V12.5 Q9.5,16 5.5,16 Q1.5,16 1.5,12.5 Z" fill="#fff" stroke="#000" stroke-width="1.3"/><path d="M1.5,6 Q1.5,2.5 5.5,2.3 V8 H1.5 Z" fill="#000"/><path d="M1.5,8 H9.5" stroke="#000" stroke-width="1.2"/><path d="M5.5,2.3 L4,0.5" stroke="#000" stroke-width="1"/></svg><div class="r" style="left:1587px;top:776px;width:23px;height:17px;background:#d7d7f7;"></div><svg class="s" style="left:1587px;top:776px;" width="23" height="17" viewBox="0 0 23 17"><rect x="4.8" y="7.8" width="2.5" height="2.5" fill="#000"/><rect x="10.8" y="7.8" width="2.5" height="2.5" fill="#000"/><rect x="15.8" y="7.8" width="2.5" height="2.5" fill="#000"/></svg><div class="t" style="left:1531.20px;top:800.90px;font-size:19px;line-height:21.22px;color:#000;font-weight:400;transform:scaleX(0.8703);">Bewehru...</div><div class="r" style="left:1351px;top:824px;width:80px;height:80px;background:#ffffff;border:1px solid #c4c4c4;box-sizing:border-box;"></div><svg class="s" style="left:1351px;top:824px;" width="80" height="80" viewBox="0 0 80 80"><defs><linearGradient id="pdfg" x1="0" y1="0" x2="0" y2="1"><stop offset="0" stop-color="#d02838"/><stop offset="1" stop-color="#901020"/></linearGradient></defs><rect x="8" y="29" width="63.5" height="23.5" rx="1.5" fill="url(#pdfg)"/><text x="39.7" y="47.5" font-size="17" font-weight="bold" fill="#fff" text-anchor="middle" font-family="Liberation Sans" transform="translate(39.7,0) scale(0.85,1) translate(-39.7,0)">PDF</text></svg><svg class="s" style="left:1354.5px;top:883.5px;" width="11" height="17" viewBox="0 0 11 17"><path d="M1.5,6 Q1.5,2.5 5.5,2.3 Q9.5,2.5 9.5,6 V12.5 Q9.5,16 5.5,16 Q1.5,16 1.5,12.5 Z" fill="#fff" stroke="#000" stroke-width="1.3"/><path d="M1.5,6 Q1.5,2.5 5.5,2.3 V8 H1.5 Z" fill="#000"/><path d="M1.5,8 H9.5" stroke="#000" stroke-width="1.2"/><path d="M5.5,2.3 L4,0.5" stroke="#000" stroke-width="1"/></svg><div class="t" style="left:1375.40px;top:910.90px;font-size:19px;line-height:21.22px;color:#000;font-weight:400;transform:scaleX(0.8316);">PDF</div><div class="r" style="left:1441px;top:824px;width:80px;height:80px;background:#ffffff;border:1px solid #c4c4c4;box-sizing:border-box;"></div><svg class="s" style="left:1441px;top:824px;" width="80" height="80" viewBox="0 0 80 80"><polygon points="17.6,25 43.3,20 62.2,27.6 36.5,30.3" fill="#118f8f"/><polygon points="17.6,25 36.5,30.3 36.5,62 18.4,53.8" fill="#0f8080"/><polygon points="36.5,30.3 62.2,27.6 62.2,56.5 36.5,62" fill="#00dddd"/></svg><div class="r" style="left:1497px;top:886px;width:23px;height:17px;background:#d7d7f7;"></div><svg class="s" style="left:1497px;top:886px;" width="23" height="17" viewBox="0 0 23 17"><rect x="4.8" y="7.8" width="2.5" height="2.5" fill="#000"/><rect x="10.8" y="7.8" width="2.5" height="2.5" fill="#000"/><rect x="15.8" y="7.8" width="2.5" height="2.5" fill="#000"/></svg><div class="t" style="left:1452.00px;top:910.90px;font-size:19px;line-height:21.22px;color:#000;font-weight:400;transform:scaleX(0.9185);">Formen</div><div class="r" style="left:1531px;top:824px;width:80px;height:80px;background:#ffffff;border:1px solid #c4c4c4;box-sizing:border-box;"></div><svg class="s" style="left:1531px;top:824px;" width="80" height="80" viewBox="0 0 80 80"><defs><linearGradient id="sky" x1="0" y1="0" x2="0" y2="1"><stop offset="0" stop-color="#1850c0"/><stop offset="1" stop-color="#90b8e8"/></linearGradient><linearGradient id="hill" x1="0" y1="0" x2="0" y2="1"><stop offset="0" stop-color="#70b040"/><stop offset="1" stop-color="#2a6a1a"/></linearGradient></defs><rect x="15.3" y="17.3" width="48" height="42.5" fill="url(#sky)"/><ellipse cx="28" cy="27" rx="5" ry="2" fill="#fff" fill-opacity="0.8"/><ellipse cx="48" cy="23" rx="6" ry="2.5" fill="#fff" fill-opacity="0.7"/><ellipse cx="52" cy="32" rx="7" ry="2" fill="#fff" fill-opacity="0.7"/><path d="M15.3,42 Q38,33 63.3,40 V59.8 H15.3 Z" fill="url(#hill)"/></svg><div class="t" style="left:1558.00px;top:910.90px;font-size:19px;line-height:21.22px;color:#000;font-weight:400;transform:scaleX(0.8531);">Bild</div><div class="r" style="left:1351px;top:934px;width:80px;height:80px;background:#ffffff;border:1px solid #c4c4c4;box-sizing:border-box;"></div><svg class="s" style="left:1351px;top:934px;" width="80" height="80" viewBox="0 0 80 80"><path d="M39,28.5 L41,33.5 L46,35.5 L41,37.5 L39,42.5 L37,37.5 L32,35.5 L37,33.5 Z" fill="#880000"/><rect x="35.5" y="32" width="7" height="7" fill="#880000"/></svg><div class="t" style="left:1355.30px;top:939.17px;font-size:15.5px;line-height:17.31px;color:#007700;font-weight:700;">K</div><svg class="s" style="left:1354.5px;top:993.5px;" width="11" height="17" viewBox="0 0 11 17"><path d="M1.5,6 Q1.5,2.5 5.5,2.3 Q9.5,2.5 9.5,6 V12.5 Q9.5,16 5.5,16 Q1.5,16 1.5,12.5 Z" fill="#fff" stroke="#000" stroke-width="1.3"/><path d="M1.5,6 Q1.5,2.5 5.5,2.3 V8 H1.5 Z" fill="#000"/><path d="M1.5,8 H9.5" stroke="#000" stroke-width="1.2"/><path d="M5.5,2.3 L4,0.5" stroke="#000" stroke-width="1"/></svg><div class="t" style="left:1363.80px;top:1020.90px;font-size:19px;line-height:21.22px;color:#000;font-weight:400;transform:scaleX(0.9150);">Knoten</div><div class="r" style="left:1441px;top:934px;width:80px;height:80px;background:#ffffff;border:1px solid #c4c4c4;box-sizing:border-box;"></div><svg class="s" style="left:1441px;top:934px;" width="80" height="80" viewBox="0 0 80 80"><path d="M30.6,45 H48.7 M44.6,31.4 Q57,31.4 57,38 Q57,45 48.7,45" stroke="#111" stroke-width="1.4" fill="none"/><circle cx="30.6" cy="45" r="2.3" fill="#880000"/><circle cx="48.7" cy="45" r="2.3" fill="#880000"/><circle cx="44.6" cy="31.4" r="2.3" fill="#880000"/></svg><div class="t" style="left:1445.30px;top:939.17px;font-size:15.5px;line-height:17.31px;color:#007700;font-weight:700;">L</div><svg class="s" style="left:1444.5px;top:993.5px;" width="11" height="17" viewBox="0 0 11 17"><path d="M1.5,6 Q1.5,2.5 5.5,2.3 Q9.5,2.5 9.5,6 V12.5 Q9.5,16 5.5,16 Q1.5,16 1.5,12.5 Z" fill="#fff" stroke="#000" stroke-width="1.3"/><path d="M1.5,6 Q1.5,2.5 5.5,2.3 V8 H1.5 Z" fill="#000"/><path d="M1.5,8 H9.5" stroke="#000" stroke-width="1.2"/><path d="M5.5,2.3 L4,0.5" stroke="#000" stroke-width="1"/></svg><div class="r" style="left:1497px;top:996px;width:23px;height:17px;background:#d7d7f7;"></div><svg class="s" style="left:1497px;top:996px;" width="23" height="17" viewBox="0 0 23 17"><rect x="4.8" y="7.8" width="2.5" height="2.5" fill="#000"/><rect x="10.8" y="7.8" width="2.5" height="2.5" fill="#000"/><rect x="15.8" y="7.8" width="2.5" height="2.5" fill="#000"/></svg><div class="t" style="left:1465.00px;top:1020.90px;font-size:19px;line-height:21.22px;color:#000;font-weight:400;transform:scaleX(0.8450);">Linie</div><div class="r" style="left:1531px;top:934px;width:80px;height:80px;background:#ffffff;border:1px solid #c4c4c4;box-sizing:border-box;"></div><svg class="s" style="left:1531px;top:934px;" width="80" height="80" viewBox="0 0 80 80"><path d="M26.8,32.7 H45.7 Q53.8,32.7 53.8,40 Q53.8,47 45.7,47 H26.8 Z" stroke="#111" stroke-width="1.4" fill="none"/><circle cx="26.8" cy="32.7" r="2.3" fill="#880000"/><circle cx="45.7" cy="32.7" r="2.3" fill="#880000"/><circle cx="26.8" cy="47" r="2.3" fill="#880000"/><circle cx="45.7" cy="47" r="2.3" fill="#880000"/></svg><div class="t" style="left:1535.30px;top:939.17px;font-size:15.5px;line-height:17.31px;color:#007700;font-weight:700;">F</div><svg class="s" style="left:1534.5px;top:993.5px;" width="11" height="17" viewBox="0 0 11 17"><path d="M1.5,6 Q1.5,2.5 5.5,2.3 Q9.5,2.5 9.5,6 V12.5 Q9.5,16 5.5,16 Q1.5,16 1.5,12.5 Z" fill="#fff" stroke="#000" stroke-width="1.3"/><path d="M1.5,6 Q1.5,2.5 5.5,2.3 V8 H1.5 Z" fill="#000"/><path d="M1.5,8 H9.5" stroke="#000" stroke-width="1.2"/><path d="M5.5,2.3 L4,0.5" stroke="#000" stroke-width="1"/></svg><div class="r" style="left:1587px;top:996px;width:23px;height:17px;background:#d7d7f7;"></div><svg class="s" style="left:1587px;top:996px;" width="23" height="17" viewBox="0 0 23 17"><rect x="4.8" y="7.8" width="2.5" height="2.5" fill="#000"/><rect x="10.8" y="7.8" width="2.5" height="2.5" fill="#000"/><rect x="15.8" y="7.8" width="2.5" height="2.5" fill="#000"/></svg><div class="t" style="left:1547.20px;top:1020.90px;font-size:19px;line-height:21.22px;color:#000;font-weight:400;transform:scaleX(0.8439);">Fläche</div><div class="r" style="left:1351px;top:1044px;width:80px;height:80px;background:#ffffff;border:1px solid #c4c4c4;box-sizing:border-box;"></div><svg class="s" style="left:1351px;top:1044px;" width="80" height="80" viewBox="0 0 80 80"><text x="37" y="52" font-size="36" font-family="Liberation Serif" text-anchor="middle" transform="translate(37,0) scale(1.15,1) translate(-37,0)">A</text></svg><div class="t" style="left:1355.30px;top:1049.17px;font-size:15.5px;line-height:17.31px;color:#007700;font-weight:700;">T</div><svg class="s" style="left:1354.5px;top:1103.5px;" width="11" height="17" viewBox="0 0 11 17"><path d="M1.5,6 Q1.5,2.5 5.5,2.3 Q9.5,2.5 9.5,6 V12.5 Q9.5,16 5.5,16 Q1.5,16 1.5,12.5 Z" fill="#fff" stroke="#000" stroke-width="1.3"/><path d="M1.5,6 Q1.5,2.5 5.5,2.3 V8 H1.5 Z" fill="#000"/><path d="M1.5,8 H9.5" stroke="#000" stroke-width="1.2"/><path d="M5.5,2.3 L4,0.5" stroke="#000" stroke-width="1"/></svg><div class="r" style="left:1441px;top:1044px;width:80px;height:80px;background:#ffffff;border:1px solid #c4c4c4;box-sizing:border-box;"></div><svg class="s" style="left:1441px;top:1044px;" width="80" height="80" viewBox="0 0 80 80"><path d="M18,42 H57.3 M18,36 V48 M57.3,36 V48" stroke="#000" stroke-width="1.6"/><polygon points="18,42 24,39 24,45" fill="#000"/><polygon points="57.3,42 51.3,39 51.3,45" fill="#000"/></svg><div class="t" style="left:1445.30px;top:1049.17px;font-size:15.5px;line-height:17.31px;color:#007700;font-weight:700;transform:scaleX(1.0167);">HVPZ</div><svg class="s" style="left:1444.5px;top:1103.5px;" width="11" height="17" viewBox="0 0 11 17"><path d="M1.5,6 Q1.5,2.5 5.5,2.3 Q9.5,2.5 9.5,6 V12.5 Q9.5,16 5.5,16 Q1.5,16 1.5,12.5 Z" fill="#fff" stroke="#000" stroke-width="1.3"/><path d="M1.5,6 Q1.5,2.5 5.5,2.3 V8 H1.5 Z" fill="#000"/><path d="M1.5,8 H9.5" stroke="#000" stroke-width="1.2"/><path d="M5.5,2.3 L4,0.5" stroke="#000" stroke-width="1"/></svg><div class="r" style="left:1497px;top:1106px;width:23px;height:17px;background:#d7d7f7;"></div><svg class="s" style="left:1497px;top:1106px;" width="23" height="17" viewBox="0 0 23 17"><rect x="4.8" y="7.8" width="2.5" height="2.5" fill="#000"/><rect x="10.8" y="7.8" width="2.5" height="2.5" fill="#000"/><rect x="15.8" y="7.8" width="2.5" height="2.5" fill="#000"/></svg><div class="r" style="left:1531px;top:1044px;width:80px;height:80px;background:#ffffff;border:1px solid #c4c4c4;box-sizing:border-box;"></div><svg class="s" style="left:1531px;top:1044px;" width="80" height="80" viewBox="0 0 80 80"><path d="M16,44 H60" stroke="#000" stroke-width="2.5"/><polygon points="20,40 28,33 36,40" fill="#000"/><polygon points="42,40 50,33 58,40" fill="#000"/></svg><svg class="s" style="left:1534.5px;top:1103.5px;" width="11" height="17" viewBox="0 0 11 17"><path d="M1.5,6 Q1.5,2.5 5.5,2.3 Q9.5,2.5 9.5,6 V12.5 Q9.5,16 5.5,16 Q1.5,16 1.5,12.5 Z" fill="#fff" stroke="#000" stroke-width="1.3"/><path d="M1.5,6 Q1.5,2.5 5.5,2.3 V8 H1.5 Z" fill="#000"/><path d="M1.5,8 H9.5" stroke="#000" stroke-width="1.2"/><path d="M5.5,2.3 L4,0.5" stroke="#000" stroke-width="1"/></svg><div class="r" style="left:1587px;top:1106px;width:23px;height:17px;background:#d7d7f7;"></div><svg class="s" style="left:1587px;top:1106px;" width="23" height="17" viewBox="0 0 23 17"><rect x="4.8" y="7.8" width="2.5" height="2.5" fill="#000"/><rect x="10.8" y="7.8" width="2.5" height="2.5" fill="#000"/><rect x="15.8" y="7.8" width="2.5" height="2.5" fill="#000"/></svg></div></div><div class="r" style="left:1566px;top:1129px;width:68px;height:19px;background:#e1e1e1;border:1px solid #adadad;box-sizing:border-box;"></div><div class="t" style="left:1570.00px;top:1131.27px;font-size:15.5px;line-height:17.31px;color:#000;font-weight:400;transform:scaleX(0.9828);">Mod GR</div><div class="r" style="left:1644px;top:1129px;width:20px;height:19px;background:#e1e1e1;border:1px solid #adadad;box-sizing:border-box;"></div><div class="t" style="left:1648.00px;top:1131.27px;font-size:15.5px;line-height:17.31px;color:#000;font-weight:400;transform:scaleX(0.9231);">M</div><div class="r" style="left:0px;top:1154px;width:1670px;height:1px;background:#ffffff;"></div><div class="t" style="left:1214.00px;top:1169.21px;font-size:17px;line-height:18.99px;color:#000;font-weight:400;transform:scaleX(0.9327);">Z Grundplatte</div><div class="r" style="left:1317px;top:1164px;width:62px;height:26px;background:#ffffff;border:1px solid #7a7a7a;box-sizing:border-box;"></div><div class="t" style="left:1321.00px;top:1169.21px;font-size:17px;line-height:18.99px;color:#000;font-weight:400;transform:scaleX(0.9302);">0.000</div><div class="t" style="left:1404.00px;top:1168.91px;font-size:17px;line-height:18.99px;color:#aa00aa;font-weight:400;">L</div><div class="r" style="left:1423px;top:1164px;width:62px;height:26px;background:#f0f0f0;border:1px solid #cccccc;box-sizing:border-box;"></div><div class="t" style="left:1494.00px;top:1168.91px;font-size:17px;line-height:18.99px;color:#000088;font-weight:400;">B</div><div class="r" style="left:1514px;top:1164px;width:62px;height:26px;background:#f0f0f0;border:1px solid #cccccc;box-sizing:border-box;"></div><div class="t" style="left:1583.00px;top:1168.91px;font-size:17px;line-height:18.99px;color:#007700;font-weight:400;transform:scaleX(0.9167);">H</div><div class="r" style="left:1604px;top:1164px;width:62px;height:26px;background:#f0f0f0;border:1px solid #cccccc;box-sizing:border-box;"></div></div></div></body></html>
